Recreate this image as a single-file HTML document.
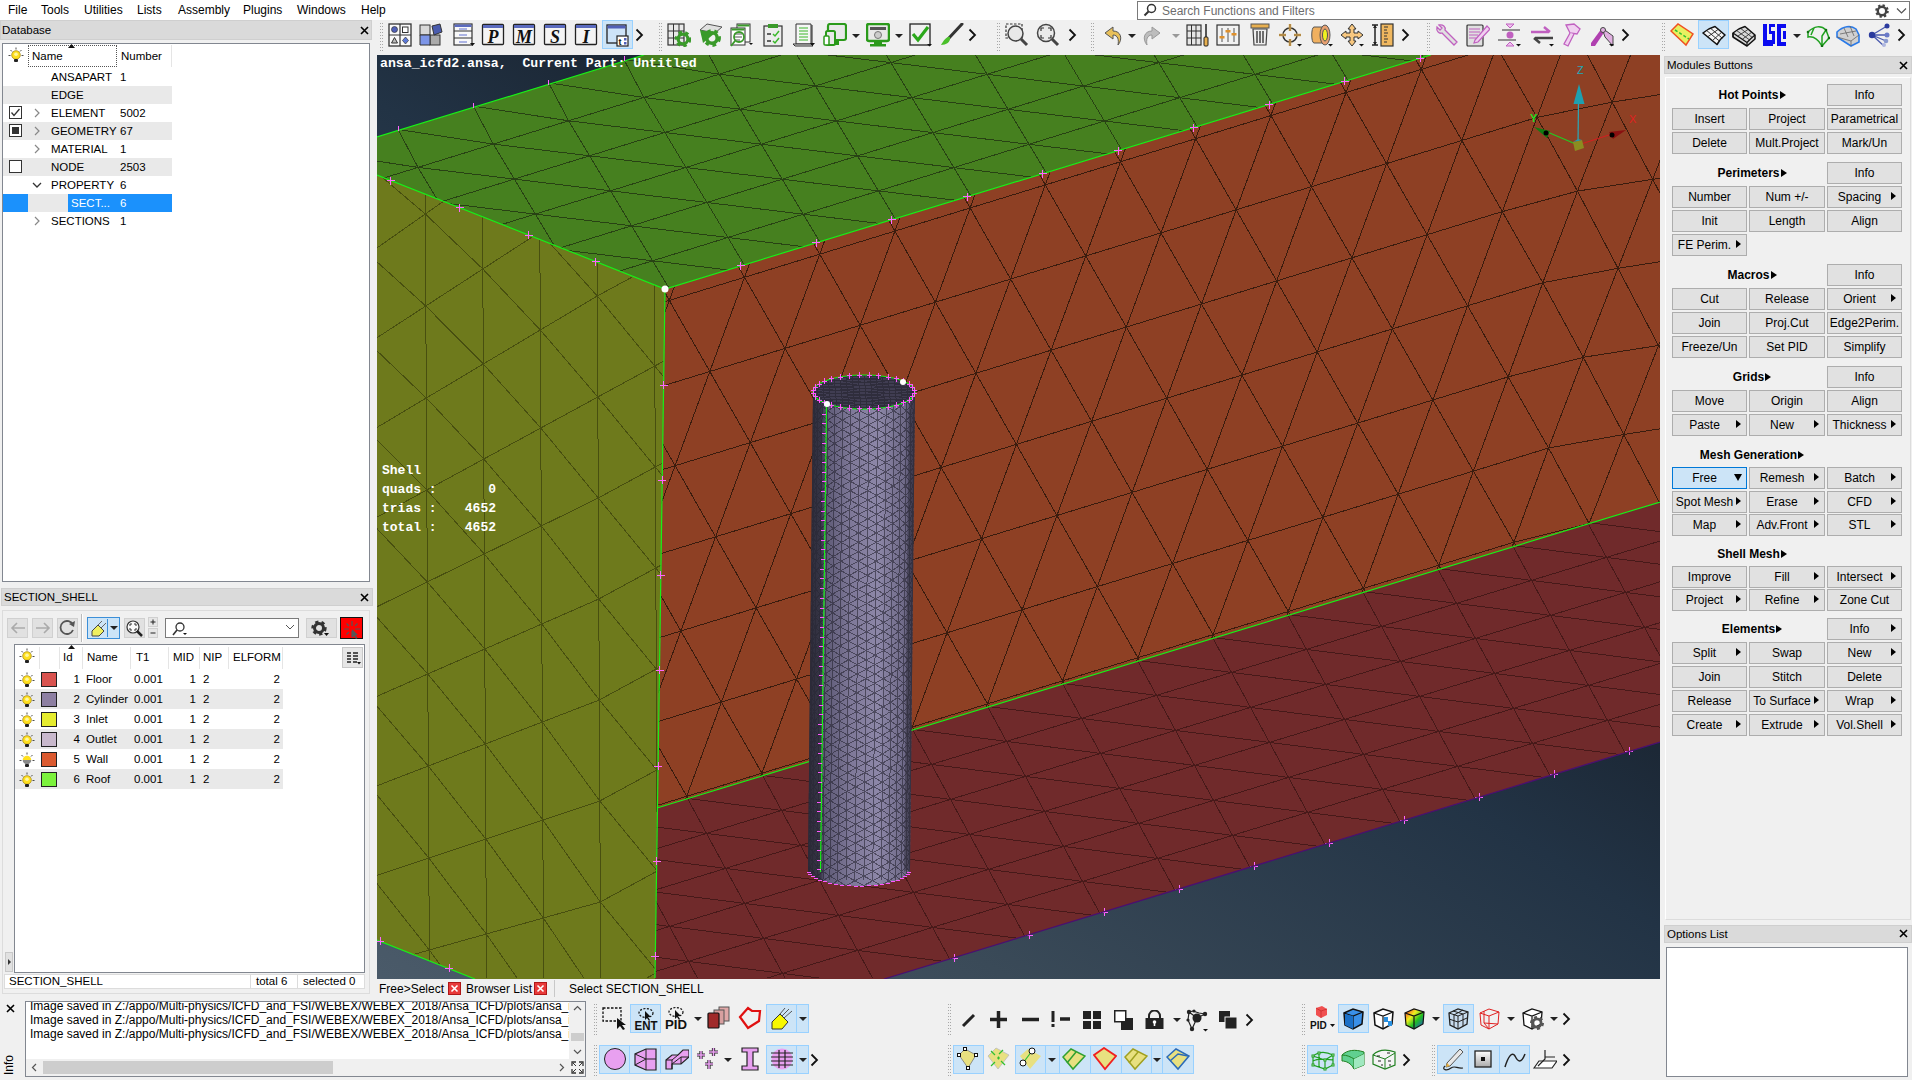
<!DOCTYPE html><html><head><meta charset='utf-8'><style>
*{margin:0;padding:0;box-sizing:border-box}
html,body{width:1912px;height:1080px;overflow:hidden;background:#f0f0f0;font-family:"Liberation Sans", sans-serif;font-size:11.5px;color:#000;position:relative}
.a{position:absolute}
.t{position:absolute;white-space:nowrap;line-height:1}
.btn{position:absolute;background:#e1e1e1;border:1px solid #adadad;font-size:12px;text-align:center;line-height:21px;white-space:nowrap;overflow:hidden}
.hdr{position:absolute;font-weight:bold;font-size:12px;white-space:nowrap;line-height:1}
.tri{display:inline-block;width:0;height:0;border-left:6px solid #000;border-top:4px solid transparent;border-bottom:4px solid transparent;vertical-align:0px;margin-left:1px}
.hi{position:absolute;background:#cce4f7;border:1px solid #99d1ff}
.title{position:absolute;background:#dadada;border:1px solid #cfcfcf;font-size:11.5px;line-height:17px;padding-left:2px}
.x{position:absolute;font-size:14px;line-height:1}
.handle{position:absolute;width:3px;border-left:1px dotted #a0a0a0;border-right:1px dotted #a0a0a0}
</style></head><body>
<div class='a' style='left:0;top:0;width:1912px;height:20px;background:#fff'></div>
<div class='t' style='left:8px;top:4px;font-size:12px'>File</div>
<div class='t' style='left:41px;top:4px;font-size:12px'>Tools</div>
<div class='t' style='left:84px;top:4px;font-size:12px'>Utilities</div>
<div class='t' style='left:137px;top:4px;font-size:12px'>Lists</div>
<div class='t' style='left:178px;top:4px;font-size:12px'>Assembly</div>
<div class='t' style='left:243px;top:4px;font-size:12px'>Plugins</div>
<div class='t' style='left:297px;top:4px;font-size:12px'>Windows</div>
<div class='t' style='left:361px;top:4px;font-size:12px'>Help</div>
<div class='a' style='left:1137px;top:1px;width:773px;height:19px;background:#fff;border:1px solid #7a7a7a'></div>
<div class='t' style='left:1162px;top:5px;font-size:12px;color:#6d6d6d'>Search Functions and Filters</div>
<svg class='a' style='left:1143px;top:3px' width='14' height='14'><circle cx='8.5' cy='5.5' r='4' fill='none' stroke='#333' stroke-width='1.5'/><path d='M5.5,8.5 L1.5,12.5' stroke='#333' stroke-width='2'/></svg>
<svg class='a' style='left:1874px;top:3px' width='16' height='16'><circle cx='8' cy='8' r='5.5' fill='none' stroke='#444' stroke-width='2.6' stroke-dasharray='2.2 2.1'/><circle cx='8' cy='8' r='4.2' fill='none' stroke='#444' stroke-width='2.4'/></svg>
<svg class='a' style='left:1896px;top:7px' width='11' height='8'><path d='M1,1.5 L5.5,6 L10,1.5' stroke='#555' stroke-width='1.2' fill='none'/></svg>
<svg class='a' style='left:0;top:0' width='1912' height='1080' viewBox='0 0 1912 1080'>
<defs><linearGradient id='bg' gradientUnits='userSpaceOnUse' x1='1660' y1='55' x2='867' y2='1288'><stop offset='0' stop-color='#121e2b'/><stop offset='0.4' stop-color='#1c2836'/><stop offset='0.5' stop-color='#223345'/><stop offset='0.77' stop-color='#3a4a58'/><stop offset='1' stop-color='#4a5a69'/></linearGradient>
<linearGradient id='cyl' x1='0' y1='0' x2='1' y2='0'>
<stop offset='0' stop-color='#2f2d3a'/><stop offset='0.12' stop-color='#3a384a'/><stop offset='0.15' stop-color='#5c5874'/><stop offset='0.4' stop-color='#7e7898'/><stop offset='0.65' stop-color='#8d87a8'/><stop offset='0.9' stop-color='#6f6a88'/><stop offset='1' stop-color='#45425a'/></linearGradient>
<clipPath id='vp'><rect x='377' y='55' width='1283' height='924'/></clipPath></defs>
<g clip-path='url(#vp)'>
<rect x='377' y='55' width='1283' height='924' fill='url(#bg)'/>
<polygon points='377,137 644,55 1431,55 665,289 377,175' fill='#46801f'/>
<polygon points='377,175 665,289 655,979 475,979 377,940' fill='#6e7a1c'/>
<polygon points='665,289 1431,55 1660,55 1660,502 657,808' fill='#8e4024'/>
<polygon points='657,808 1660,502 1660,742 884,979 655,979' fill='#702a2b'/>
<defs>
<clipPath id='cRoof'><polygon points='377,137 644,55 1431,55 665,289 377,175'/></clipPath>
<clipPath id='cOlive'><polygon points='377,175 665,289 655,978 473,978 377,940'/></clipPath>
<clipPath id='cWall'><polygon points='665,289 1431,55 1660,55 1660,502 657,808'/></clipPath>
<clipPath id='cFloor'><polygon points='657,808 1660,502 1660,742 887,978 655,978'/></clipPath>
<clipPath id='cCyl'><path d='M813,392 L808,870 A51,16 0 0 0 910,870 L915,392 Z'/></clipPath>
</defs>
<path clip-path='url(#cRoof)' stroke='#1d2a10' stroke-opacity='0.72' stroke-width='1' fill='none' shape-rendering='crispEdges' d='M-53.8,269.2L21.5,245.9M-53.8,269.2L-53.8,269.2M-53.8,269.2L21.5,245.9M-53.8,269.2L21.5,245.9M-53.8,269.2L-53.8,269.2M-53.8,269.2L21.5,245.9M-53.8,269.2L21.5,245.9M-53.8,269.2L-33.8,307.2M-53.8,269.2L41.5,283.9M-33.8,307.2L41.5,283.9M-33.8,307.2L-12.8,342.2M-33.8,307.2L62.5,318.9M-12.8,342.2L62.5,318.9M-12.8,342.2L8.2,377.2M-12.8,342.2L83.5,353.9M8.2,377.2L83.5,353.9M8.2,377.2L29.2,412.2M8.2,377.2L104.5,388.9M29.2,412.2L104.5,388.9M29.2,412.2L50.2,447.2M29.2,412.2L125.5,423.9M50.2,447.2L125.5,423.9M50.2,447.2L71.2,482.2M50.2,447.2L146.5,458.9M71.2,482.2L146.5,458.9M71.2,482.2L92.2,517.2M71.2,482.2L167.5,493.9M92.2,517.2L167.5,493.9M92.2,517.2L113.2,552.2M92.2,517.2L188.5,528.9M113.2,552.2L188.5,528.9M21.5,245.9L96.8,222.6M21.5,245.9L21.5,245.9M21.5,245.9L96.8,222.6M21.5,245.9L96.8,222.6M21.5,245.9L21.5,245.9M21.5,245.9L96.8,222.6M21.5,245.9L96.8,222.6M21.5,245.9L41.5,283.9M21.5,245.9L116.8,260.6M41.5,283.9L116.8,260.6M41.5,283.9L62.5,318.9M41.5,283.9L137.8,295.6M62.5,318.9L137.8,295.6M62.5,318.9L83.5,353.9M62.5,318.9L158.8,330.6M83.5,353.9L158.8,330.6M83.5,353.9L104.5,388.9M83.5,353.9L179.8,365.6M104.5,388.9L179.8,365.6M104.5,388.9L125.5,423.9M104.5,388.9L200.8,400.6M125.5,423.9L200.8,400.6M125.5,423.9L146.5,458.9M125.5,423.9L221.8,435.6M146.5,458.9L221.8,435.6M146.5,458.9L167.5,493.9M146.5,458.9L242.8,470.6M167.5,493.9L242.8,470.6M167.5,493.9L188.5,528.9M167.5,493.9L263.8,505.6M188.5,528.9L263.8,505.6M96.8,222.6L172.1,199.3M96.8,222.6L96.8,222.6M96.8,222.6L172.1,199.3M96.8,222.6L172.1,199.3M96.8,222.6L96.8,222.6M96.8,222.6L172.1,199.3M96.8,222.6L172.1,199.3M96.8,222.6L116.8,260.6M96.8,222.6L192.1,237.3M116.8,260.6L192.1,237.3M116.8,260.6L137.8,295.6M116.8,260.6L213.1,272.3M137.8,295.6L213.1,272.3M137.8,295.6L158.8,330.6M137.8,295.6L234.1,307.3M158.8,330.6L234.1,307.3M158.8,330.6L179.8,365.6M158.8,330.6L255.1,342.3M179.8,365.6L255.1,342.3M179.8,365.6L200.8,400.6M179.8,365.6L276.1,377.3M200.8,400.6L276.1,377.3M200.8,400.6L221.8,435.6M200.8,400.6L297.1,412.3M221.8,435.6L297.1,412.3M221.8,435.6L242.8,470.6M221.8,435.6L318.1,447.3M242.8,470.6L318.1,447.3M242.8,470.6L263.8,505.6M242.8,470.6L339.1,482.3M263.8,505.6L339.1,482.3M172.1,199.3L247.4,176.0M172.1,199.3L172.1,199.3M172.1,199.3L247.4,176.0M172.1,199.3L247.4,176.0M172.1,199.3L172.1,199.3M172.1,199.3L247.4,176.0M172.1,199.3L247.4,176.0M172.1,199.3L192.1,237.3M172.1,199.3L267.4,214.0M192.1,237.3L267.4,214.0M192.1,237.3L213.1,272.3M192.1,237.3L288.4,249.0M213.1,272.3L288.4,249.0M213.1,272.3L234.1,307.3M213.1,272.3L309.4,284.0M234.1,307.3L309.4,284.0M234.1,307.3L255.1,342.3M234.1,307.3L330.4,319.0M255.1,342.3L330.4,319.0M255.1,342.3L276.1,377.3M255.1,342.3L351.4,354.0M276.1,377.3L351.4,354.0M276.1,377.3L297.1,412.3M276.1,377.3L372.4,389.0M297.1,412.3L372.4,389.0M297.1,412.3L318.1,447.3M297.1,412.3L393.4,424.0M318.1,447.3L393.4,424.0M318.1,447.3L339.1,482.3M318.1,447.3L414.4,459.0M339.1,482.3L414.4,459.0M247.4,176.0L322.7,152.7M247.4,176.0L247.4,176.0M247.4,176.0L322.7,152.7M247.4,176.0L322.7,152.7M247.4,176.0L247.4,176.0M247.4,176.0L322.7,152.7M247.4,176.0L322.7,152.7M247.4,176.0L267.4,214.0M247.4,176.0L342.7,190.7M267.4,214.0L342.7,190.7M267.4,214.0L288.4,249.0M267.4,214.0L363.7,225.7M288.4,249.0L363.7,225.7M288.4,249.0L309.4,284.0M288.4,249.0L384.7,260.7M309.4,284.0L384.7,260.7M309.4,284.0L330.4,319.0M309.4,284.0L405.7,295.7M330.4,319.0L405.7,295.7M330.4,319.0L351.4,354.0M330.4,319.0L426.7,330.7M351.4,354.0L426.7,330.7M351.4,354.0L372.4,389.0M351.4,354.0L447.7,365.7M372.4,389.0L447.7,365.7M372.4,389.0L393.4,424.0M372.4,389.0L468.7,400.7M393.4,424.0L468.7,400.7M393.4,424.0L414.4,459.0M393.4,424.0L489.7,435.7M414.4,459.0L489.7,435.7M322.7,152.7L398.0,129.4M322.7,152.7L322.7,152.7M322.7,152.7L398.0,129.4M322.7,152.7L398.0,129.4M322.7,152.7L322.7,152.7M322.7,152.7L398.0,129.4M322.7,152.7L398.0,129.4M322.7,152.7L342.7,190.7M322.7,152.7L418.0,167.4M342.7,190.7L418.0,167.4M342.7,190.7L363.7,225.7M342.7,190.7L439.0,202.4M363.7,225.7L439.0,202.4M363.7,225.7L384.7,260.7M363.7,225.7L460.0,237.4M384.7,260.7L460.0,237.4M384.7,260.7L405.7,295.7M384.7,260.7L481.0,272.4M405.7,295.7L481.0,272.4M405.7,295.7L426.7,330.7M405.7,295.7L502.0,307.4M426.7,330.7L502.0,307.4M426.7,330.7L447.7,365.7M426.7,330.7L523.0,342.4M447.7,365.7L523.0,342.4M447.7,365.7L468.7,400.7M447.7,365.7L544.0,377.4M468.7,400.7L544.0,377.4M468.7,400.7L489.7,435.7M468.7,400.7L565.0,412.4M489.7,435.7L565.0,412.4M398.0,129.4L473.3,106.1M398.0,129.4L398.0,129.4M398.0,129.4L473.3,106.1M398.0,129.4L473.3,106.1M398.0,129.4L398.0,129.4M398.0,129.4L473.3,106.1M398.0,129.4L473.3,106.1M398.0,129.4L418.0,167.4M398.0,129.4L493.3,144.1M418.0,167.4L493.3,144.1M418.0,167.4L439.0,202.4M418.0,167.4L514.3,179.1M439.0,202.4L514.3,179.1M439.0,202.4L460.0,237.4M439.0,202.4L535.3,214.1M460.0,237.4L535.3,214.1M460.0,237.4L481.0,272.4M460.0,237.4L556.3,249.1M481.0,272.4L556.3,249.1M481.0,272.4L502.0,307.4M481.0,272.4L577.3,284.1M502.0,307.4L577.3,284.1M502.0,307.4L523.0,342.4M502.0,307.4L598.3,319.1M523.0,342.4L598.3,319.1M523.0,342.4L544.0,377.4M523.0,342.4L619.3,354.1M544.0,377.4L619.3,354.1M544.0,377.4L565.0,412.4M544.0,377.4L640.3,389.1M565.0,412.4L640.3,389.1M473.3,106.1L548.6,82.8M473.3,106.1L473.3,106.1M473.3,106.1L548.6,82.8M473.3,106.1L548.6,82.8M473.3,106.1L473.3,106.1M473.3,106.1L548.6,82.8M473.3,106.1L548.6,82.8M473.3,106.1L493.3,144.1M473.3,106.1L568.6,120.8M493.3,144.1L568.6,120.8M493.3,144.1L514.3,179.1M493.3,144.1L589.6,155.8M514.3,179.1L589.6,155.8M514.3,179.1L535.3,214.1M514.3,179.1L610.6,190.8M535.3,214.1L610.6,190.8M535.3,214.1L556.3,249.1M535.3,214.1L631.6,225.8M556.3,249.1L631.6,225.8M556.3,249.1L577.3,284.1M556.3,249.1L652.6,260.8M577.3,284.1L652.6,260.8M577.3,284.1L598.3,319.1M577.3,284.1L673.6,295.8M598.3,319.1L673.6,295.8M598.3,319.1L619.3,354.1M598.3,319.1L694.6,330.8M619.3,354.1L694.6,330.8M619.3,354.1L640.3,389.1M619.3,354.1L715.6,365.8M640.3,389.1L715.6,365.8M548.6,82.8L623.9,59.5M548.6,82.8L548.6,82.8M548.6,82.8L623.9,59.5M548.6,82.8L623.9,59.5M548.6,82.8L548.6,82.8M548.6,82.8L623.9,59.5M548.6,82.8L623.9,59.5M548.6,82.8L568.6,120.8M548.6,82.8L643.9,97.5M568.6,120.8L643.9,97.5M568.6,120.8L589.6,155.8M568.6,120.8L664.9,132.5M589.6,155.8L664.9,132.5M589.6,155.8L610.6,190.8M589.6,155.8L685.9,167.5M610.6,190.8L685.9,167.5M610.6,190.8L631.6,225.8M610.6,190.8L706.9,202.5M631.6,225.8L706.9,202.5M631.6,225.8L652.6,260.8M631.6,225.8L727.9,237.5M652.6,260.8L727.9,237.5M652.6,260.8L673.6,295.8M652.6,260.8L748.9,272.5M673.6,295.8L748.9,272.5M673.6,295.8L694.6,330.8M673.6,295.8L769.9,307.5M694.6,330.8L769.9,307.5M694.6,330.8L715.6,365.8M694.6,330.8L790.9,342.5M715.6,365.8L790.9,342.5M623.9,59.5L699.2,36.2M623.9,59.5L623.9,59.5M623.9,59.5L699.2,36.2M623.9,59.5L699.2,36.2M623.9,59.5L623.9,59.5M623.9,59.5L699.2,36.2M623.9,59.5L699.2,36.2M623.9,59.5L643.9,97.5M623.9,59.5L719.2,74.2M643.9,97.5L719.2,74.2M643.9,97.5L664.9,132.5M643.9,97.5L740.2,109.2M664.9,132.5L740.2,109.2M664.9,132.5L685.9,167.5M664.9,132.5L761.2,144.2M685.9,167.5L761.2,144.2M685.9,167.5L706.9,202.5M685.9,167.5L782.2,179.2M706.9,202.5L782.2,179.2M706.9,202.5L727.9,237.5M706.9,202.5L803.2,214.2M727.9,237.5L803.2,214.2M727.9,237.5L748.9,272.5M727.9,237.5L824.2,249.2M748.9,272.5L824.2,249.2M748.9,272.5L769.9,307.5M748.9,272.5L845.2,284.2M769.9,307.5L845.2,284.2M769.9,307.5L790.9,342.5M769.9,307.5L866.2,319.2M790.9,342.5L866.2,319.2M699.2,36.2L774.5,12.9M699.2,36.2L699.2,36.2M699.2,36.2L774.5,12.9M699.2,36.2L774.5,12.9M699.2,36.2L699.2,36.2M699.2,36.2L774.5,12.9M699.2,36.2L774.5,12.9M699.2,36.2L719.2,74.2M699.2,36.2L794.5,50.9M719.2,74.2L794.5,50.9M719.2,74.2L740.2,109.2M719.2,74.2L815.5,85.9M740.2,109.2L815.5,85.9M740.2,109.2L761.2,144.2M740.2,109.2L836.5,120.9M761.2,144.2L836.5,120.9M761.2,144.2L782.2,179.2M761.2,144.2L857.5,155.9M782.2,179.2L857.5,155.9M782.2,179.2L803.2,214.2M782.2,179.2L878.5,190.9M803.2,214.2L878.5,190.9M803.2,214.2L824.2,249.2M803.2,214.2L899.5,225.9M824.2,249.2L899.5,225.9M824.2,249.2L845.2,284.2M824.2,249.2L920.5,260.9M845.2,284.2L920.5,260.9M845.2,284.2L866.2,319.2M845.2,284.2L941.5,295.9M866.2,319.2L941.5,295.9M774.5,12.9L849.8,-10.4M774.5,12.9L774.5,12.9M774.5,12.9L849.8,-10.4M774.5,12.9L849.8,-10.4M774.5,12.9L774.5,12.9M774.5,12.9L849.8,-10.4M774.5,12.9L849.8,-10.4M774.5,12.9L794.5,50.9M774.5,12.9L869.8,27.6M794.5,50.9L869.8,27.6M794.5,50.9L815.5,85.9M794.5,50.9L890.8,62.6M815.5,85.9L890.8,62.6M815.5,85.9L836.5,120.9M815.5,85.9L911.8,97.6M836.5,120.9L911.8,97.6M836.5,120.9L857.5,155.9M836.5,120.9L932.8,132.6M857.5,155.9L932.8,132.6M857.5,155.9L878.5,190.9M857.5,155.9L953.8,167.6M878.5,190.9L953.8,167.6M878.5,190.9L899.5,225.9M878.5,190.9L974.8,202.6M899.5,225.9L974.8,202.6M899.5,225.9L920.5,260.9M899.5,225.9L995.8,237.6M920.5,260.9L995.8,237.6M920.5,260.9L941.5,295.9M920.5,260.9L1016.8,272.6M941.5,295.9L1016.8,272.6M849.8,-10.4L925.1,-33.7M849.8,-10.4L849.8,-10.4M849.8,-10.4L925.1,-33.7M849.8,-10.4L925.1,-33.7M849.8,-10.4L849.8,-10.4M849.8,-10.4L925.1,-33.7M849.8,-10.4L925.1,-33.7M849.8,-10.4L869.8,27.6M849.8,-10.4L945.1,4.3M869.8,27.6L945.1,4.3M869.8,27.6L890.8,62.6M869.8,27.6L966.1,39.3M890.8,62.6L966.1,39.3M890.8,62.6L911.8,97.6M890.8,62.6L987.1,74.3M911.8,97.6L987.1,74.3M911.8,97.6L932.8,132.6M911.8,97.6L1008.1,109.3M932.8,132.6L1008.1,109.3M932.8,132.6L953.8,167.6M932.8,132.6L1029.1,144.3M953.8,167.6L1029.1,144.3M953.8,167.6L974.8,202.6M953.8,167.6L1050.1,179.3M974.8,202.6L1050.1,179.3M974.8,202.6L995.8,237.6M974.8,202.6L1071.1,214.3M995.8,237.6L1071.1,214.3M995.8,237.6L1016.8,272.6M995.8,237.6L1092.1,249.3M1016.8,272.6L1092.1,249.3M925.1,-33.7L1000.4,-57.0M925.1,-33.7L925.1,-33.7M925.1,-33.7L1000.4,-57.0M925.1,-33.7L1000.4,-57.0M925.1,-33.7L925.1,-33.7M925.1,-33.7L1000.4,-57.0M925.1,-33.7L1000.4,-57.0M925.1,-33.7L945.1,4.3M925.1,-33.7L1020.4,-19.0M945.1,4.3L1020.4,-19.0M945.1,4.3L966.1,39.3M945.1,4.3L1041.4,16.0M966.1,39.3L1041.4,16.0M966.1,39.3L987.1,74.3M966.1,39.3L1062.4,51.0M987.1,74.3L1062.4,51.0M987.1,74.3L1008.1,109.3M987.1,74.3L1083.4,86.0M1008.1,109.3L1083.4,86.0M1008.1,109.3L1029.1,144.3M1008.1,109.3L1104.4,121.0M1029.1,144.3L1104.4,121.0M1029.1,144.3L1050.1,179.3M1029.1,144.3L1125.4,156.0M1050.1,179.3L1125.4,156.0M1050.1,179.3L1071.1,214.3M1050.1,179.3L1146.4,191.0M1071.1,214.3L1146.4,191.0M1071.1,214.3L1092.1,249.3M1071.1,214.3L1167.4,226.0M1092.1,249.3L1167.4,226.0M1000.4,-57.0L1075.7,-80.3M1000.4,-57.0L1000.4,-57.0M1000.4,-57.0L1075.7,-80.3M1000.4,-57.0L1075.7,-80.3M1000.4,-57.0L1000.4,-57.0M1000.4,-57.0L1075.7,-80.3M1000.4,-57.0L1075.7,-80.3M1000.4,-57.0L1020.4,-19.0M1000.4,-57.0L1095.7,-42.3M1020.4,-19.0L1095.7,-42.3M1020.4,-19.0L1041.4,16.0M1020.4,-19.0L1116.7,-7.3M1041.4,16.0L1116.7,-7.3M1041.4,16.0L1062.4,51.0M1041.4,16.0L1137.7,27.7M1062.4,51.0L1137.7,27.7M1062.4,51.0L1083.4,86.0M1062.4,51.0L1158.7,62.7M1083.4,86.0L1158.7,62.7M1083.4,86.0L1104.4,121.0M1083.4,86.0L1179.7,97.7M1104.4,121.0L1179.7,97.7M1104.4,121.0L1125.4,156.0M1104.4,121.0L1200.7,132.7M1125.4,156.0L1200.7,132.7M1125.4,156.0L1146.4,191.0M1125.4,156.0L1221.7,167.7M1146.4,191.0L1221.7,167.7M1146.4,191.0L1167.4,226.0M1146.4,191.0L1242.7,202.7M1167.4,226.0L1242.7,202.7M1075.7,-80.3L1151.0,-103.6M1075.7,-80.3L1075.7,-80.3M1075.7,-80.3L1151.0,-103.6M1075.7,-80.3L1151.0,-103.6M1075.7,-80.3L1075.7,-80.3M1075.7,-80.3L1151.0,-103.6M1075.7,-80.3L1151.0,-103.6M1075.7,-80.3L1095.7,-42.3M1075.7,-80.3L1171.0,-65.6M1095.7,-42.3L1171.0,-65.6M1095.7,-42.3L1116.7,-7.3M1095.7,-42.3L1192.0,-30.6M1116.7,-7.3L1192.0,-30.6M1116.7,-7.3L1137.7,27.7M1116.7,-7.3L1213.0,4.4M1137.7,27.7L1213.0,4.4M1137.7,27.7L1158.7,62.7M1137.7,27.7L1234.0,39.4M1158.7,62.7L1234.0,39.4M1158.7,62.7L1179.7,97.7M1158.7,62.7L1255.0,74.4M1179.7,97.7L1255.0,74.4M1179.7,97.7L1200.7,132.7M1179.7,97.7L1276.0,109.4M1200.7,132.7L1276.0,109.4M1200.7,132.7L1221.7,167.7M1200.7,132.7L1297.0,144.4M1221.7,167.7L1297.0,144.4M1221.7,167.7L1242.7,202.7M1221.7,167.7L1318.0,179.4M1242.7,202.7L1318.0,179.4M1151.0,-103.6L1226.3,-126.9M1151.0,-103.6L1151.0,-103.6M1151.0,-103.6L1226.3,-126.9M1151.0,-103.6L1226.3,-126.9M1151.0,-103.6L1151.0,-103.6M1151.0,-103.6L1226.3,-126.9M1151.0,-103.6L1226.3,-126.9M1151.0,-103.6L1171.0,-65.6M1151.0,-103.6L1246.3,-88.9M1171.0,-65.6L1246.3,-88.9M1171.0,-65.6L1192.0,-30.6M1171.0,-65.6L1267.3,-53.9M1192.0,-30.6L1267.3,-53.9M1192.0,-30.6L1213.0,4.4M1192.0,-30.6L1288.3,-18.9M1213.0,4.4L1288.3,-18.9M1213.0,4.4L1234.0,39.4M1213.0,4.4L1309.3,16.1M1234.0,39.4L1309.3,16.1M1234.0,39.4L1255.0,74.4M1234.0,39.4L1330.3,51.1M1255.0,74.4L1330.3,51.1M1255.0,74.4L1276.0,109.4M1255.0,74.4L1351.3,86.1M1276.0,109.4L1351.3,86.1M1276.0,109.4L1297.0,144.4M1276.0,109.4L1372.3,121.1M1297.0,144.4L1372.3,121.1M1297.0,144.4L1318.0,179.4M1297.0,144.4L1393.3,156.1M1318.0,179.4L1393.3,156.1M1226.3,-126.9L1301.6,-150.2M1226.3,-126.9L1226.3,-126.9M1226.3,-126.9L1301.6,-150.2M1226.3,-126.9L1301.6,-150.2M1226.3,-126.9L1226.3,-126.9M1226.3,-126.9L1301.6,-150.2M1226.3,-126.9L1301.6,-150.2M1226.3,-126.9L1246.3,-88.9M1226.3,-126.9L1321.6,-112.2M1246.3,-88.9L1321.6,-112.2M1246.3,-88.9L1267.3,-53.9M1246.3,-88.9L1342.6,-77.2M1267.3,-53.9L1342.6,-77.2M1267.3,-53.9L1288.3,-18.9M1267.3,-53.9L1363.6,-42.2M1288.3,-18.9L1363.6,-42.2M1288.3,-18.9L1309.3,16.1M1288.3,-18.9L1384.6,-7.2M1309.3,16.1L1384.6,-7.2M1309.3,16.1L1330.3,51.1M1309.3,16.1L1405.6,27.8M1330.3,51.1L1405.6,27.8M1330.3,51.1L1351.3,86.1M1330.3,51.1L1426.6,62.8M1351.3,86.1L1426.6,62.8M1351.3,86.1L1372.3,121.1M1351.3,86.1L1447.6,97.8M1372.3,121.1L1447.6,97.8M1372.3,121.1L1393.3,156.1M1372.3,121.1L1468.6,132.8M1393.3,156.1L1468.6,132.8M1301.6,-150.2L1376.9,-173.5M1301.6,-150.2L1301.6,-150.2M1301.6,-150.2L1376.9,-173.5M1301.6,-150.2L1376.9,-173.5M1301.6,-150.2L1301.6,-150.2M1301.6,-150.2L1376.9,-173.5M1301.6,-150.2L1376.9,-173.5M1301.6,-150.2L1321.6,-112.2M1301.6,-150.2L1396.9,-135.5M1321.6,-112.2L1396.9,-135.5M1321.6,-112.2L1342.6,-77.2M1321.6,-112.2L1417.9,-100.5M1342.6,-77.2L1417.9,-100.5M1342.6,-77.2L1363.6,-42.2M1342.6,-77.2L1438.9,-65.5M1363.6,-42.2L1438.9,-65.5M1363.6,-42.2L1384.6,-7.2M1363.6,-42.2L1459.9,-30.5M1384.6,-7.2L1459.9,-30.5M1384.6,-7.2L1405.6,27.8M1384.6,-7.2L1480.9,4.5M1405.6,27.8L1480.9,4.5M1405.6,27.8L1426.6,62.8M1405.6,27.8L1501.9,39.5M1426.6,62.8L1501.9,39.5M1426.6,62.8L1447.6,97.8M1426.6,62.8L1522.9,74.5M1447.6,97.8L1522.9,74.5M1447.6,97.8L1468.6,132.8M1447.6,97.8L1543.9,109.5M1468.6,132.8L1543.9,109.5M1376.9,-173.5L1452.2,-196.8M1376.9,-173.5L1376.9,-173.5M1376.9,-173.5L1452.2,-196.8M1376.9,-173.5L1452.2,-196.8M1376.9,-173.5L1376.9,-173.5M1376.9,-173.5L1452.2,-196.8M1376.9,-173.5L1452.2,-196.8M1376.9,-173.5L1396.9,-135.5M1376.9,-173.5L1472.2,-158.8M1396.9,-135.5L1472.2,-158.8M1396.9,-135.5L1417.9,-100.5M1396.9,-135.5L1493.2,-123.8M1417.9,-100.5L1493.2,-123.8M1417.9,-100.5L1438.9,-65.5M1417.9,-100.5L1514.2,-88.8M1438.9,-65.5L1514.2,-88.8M1438.9,-65.5L1459.9,-30.5M1438.9,-65.5L1535.2,-53.8M1459.9,-30.5L1535.2,-53.8M1459.9,-30.5L1480.9,4.5M1459.9,-30.5L1556.2,-18.8M1480.9,4.5L1556.2,-18.8M1480.9,4.5L1501.9,39.5M1480.9,4.5L1577.2,16.2M1501.9,39.5L1577.2,16.2M1501.9,39.5L1522.9,74.5M1501.9,39.5L1598.2,51.2M1522.9,74.5L1598.2,51.2M1522.9,74.5L1543.9,109.5M1522.9,74.5L1619.2,86.2M1543.9,109.5L1619.2,86.2M1452.2,-196.8L1527.5,-220.1M1452.2,-196.8L1452.2,-196.8M1452.2,-196.8L1527.5,-220.1M1452.2,-196.8L1527.5,-220.1M1452.2,-196.8L1452.2,-196.8M1452.2,-196.8L1527.5,-220.1M1452.2,-196.8L1527.5,-220.1M1452.2,-196.8L1472.2,-158.8M1452.2,-196.8L1547.5,-182.1M1472.2,-158.8L1547.5,-182.1M1472.2,-158.8L1493.2,-123.8M1472.2,-158.8L1568.5,-147.1M1493.2,-123.8L1568.5,-147.1M1493.2,-123.8L1514.2,-88.8M1493.2,-123.8L1589.5,-112.1M1514.2,-88.8L1589.5,-112.1M1514.2,-88.8L1535.2,-53.8M1514.2,-88.8L1610.5,-77.1M1535.2,-53.8L1610.5,-77.1M1535.2,-53.8L1556.2,-18.8M1535.2,-53.8L1631.5,-42.1M1556.2,-18.8L1631.5,-42.1M1556.2,-18.8L1577.2,16.2M1556.2,-18.8L1652.5,-7.1M1577.2,16.2L1652.5,-7.1M1577.2,16.2L1598.2,51.2M1577.2,16.2L1673.5,27.9M1598.2,51.2L1673.5,27.9M1598.2,51.2L1619.2,86.2M1598.2,51.2L1694.5,62.9M1619.2,86.2L1694.5,62.9M1527.5,-220.1L1602.8,-243.4M1527.5,-220.1L1527.5,-220.1M1527.5,-220.1L1602.8,-243.4M1527.5,-220.1L1602.8,-243.4M1527.5,-220.1L1527.5,-220.1M1527.5,-220.1L1602.8,-243.4M1527.5,-220.1L1602.8,-243.4M1527.5,-220.1L1547.5,-182.1M1527.5,-220.1L1622.8,-205.4M1547.5,-182.1L1622.8,-205.4M1547.5,-182.1L1568.5,-147.1M1547.5,-182.1L1643.8,-170.4M1568.5,-147.1L1643.8,-170.4M1568.5,-147.1L1589.5,-112.1M1568.5,-147.1L1664.8,-135.4M1589.5,-112.1L1664.8,-135.4M1589.5,-112.1L1610.5,-77.1M1589.5,-112.1L1685.8,-100.4M1610.5,-77.1L1685.8,-100.4M1610.5,-77.1L1631.5,-42.1M1610.5,-77.1L1706.8,-65.4M1631.5,-42.1L1706.8,-65.4M1631.5,-42.1L1652.5,-7.1M1631.5,-42.1L1727.8,-30.4M1652.5,-7.1L1727.8,-30.4M1652.5,-7.1L1673.5,27.9M1652.5,-7.1L1748.8,4.6M1673.5,27.9L1748.8,4.6M1673.5,27.9L1694.5,62.9M1673.5,27.9L1769.8,39.6M1694.5,62.9L1769.8,39.6M1602.8,-243.4L1602.8,-243.4M1602.8,-243.4L1602.8,-243.4M1602.8,-243.4L1622.8,-205.4M1622.8,-205.4L1643.8,-170.4M1643.8,-170.4L1664.8,-135.4M1664.8,-135.4L1685.8,-100.4M1685.8,-100.4L1706.8,-65.4M1706.8,-65.4L1727.8,-30.4M1727.8,-30.4L1748.8,4.6M1748.8,4.6L1769.8,39.6'/>
<path clip-path='url(#cOlive)' stroke='#2e3208' stroke-opacity='0.6' stroke-width='1' fill='none' shape-rendering='crispEdges' d='M708.8,-271.0L651.8,-240.0M708.8,-271.0L709.3,-170.0M651.8,-240.0L709.3,-170.0M709.3,-170.0L652.3,-139.0M709.3,-170.0L709.8,-69.0M652.3,-139.0L709.8,-69.0M709.8,-69.0L652.8,-38.0M709.8,-69.0L710.3,32.0M652.8,-38.0L710.3,32.0M710.3,32.0L653.3,63.0M710.3,32.0L710.8,133.0M653.3,63.0L710.8,133.0M710.8,133.0L653.8,164.0M710.8,133.0L711.3,234.0M653.8,164.0L711.3,234.0M711.3,234.0L654.3,265.0M711.3,234.0L711.8,335.0M654.3,265.0L711.8,335.0M711.8,335.0L654.8,366.0M711.8,335.0L712.3,436.0M654.8,366.0L712.3,436.0M712.3,436.0L655.3,467.0M712.3,436.0L712.8,537.0M655.3,467.0L712.8,537.0M712.8,537.0L655.8,568.0M712.8,537.0L713.3,638.0M655.8,568.0L713.3,638.0M713.3,638.0L656.3,669.0M713.3,638.0L713.8,739.0M656.3,669.0L713.8,739.0M713.8,739.0L656.8,770.0M713.8,739.0L714.3,840.0M656.8,770.0L714.3,840.0M714.3,840.0L657.3,871.0M714.3,840.0L714.8,941.0M657.3,871.0L714.8,941.0M714.8,941.0L657.8,972.0M714.8,941.0L715.3,1042.0M657.8,972.0L715.3,1042.0M715.3,1042.0L658.3,1073.0M715.3,1042.0L715.8,1143.0M658.3,1073.0L715.8,1143.0M715.8,1143.0L658.8,1174.0M651.8,-240.0L594.8,-209.0M651.8,-240.0L652.3,-139.0M594.8,-209.0L652.3,-139.0M652.3,-139.0L595.3,-108.0M652.3,-139.0L652.8,-38.0M595.3,-108.0L652.8,-38.0M652.8,-38.0L595.8,-7.0M652.8,-38.0L653.3,63.0M595.8,-7.0L653.3,63.0M653.3,63.0L596.3,94.0M653.3,63.0L653.8,164.0M596.3,94.0L653.8,164.0M653.8,164.0L596.8,195.0M653.8,164.0L654.3,265.0M596.8,195.0L654.3,265.0M654.3,265.0L597.3,296.0M654.3,265.0L654.8,366.0M597.3,296.0L654.8,366.0M654.8,366.0L597.8,397.0M654.8,366.0L655.3,467.0M597.8,397.0L655.3,467.0M655.3,467.0L598.3,498.0M655.3,467.0L655.8,568.0M598.3,498.0L655.8,568.0M655.8,568.0L598.8,599.0M655.8,568.0L656.3,669.0M598.8,599.0L656.3,669.0M656.3,669.0L599.3,700.0M656.3,669.0L656.8,770.0M599.3,700.0L656.8,770.0M656.8,770.0L599.8,801.0M656.8,770.0L657.3,871.0M599.8,801.0L657.3,871.0M657.3,871.0L600.3,902.0M657.3,871.0L657.8,972.0M600.3,902.0L657.8,972.0M657.8,972.0L600.8,1003.0M657.8,972.0L658.3,1073.0M600.8,1003.0L658.3,1073.0M658.3,1073.0L601.3,1104.0M658.3,1073.0L658.8,1174.0M601.3,1104.0L658.8,1174.0M658.8,1174.0L601.8,1205.0M594.8,-209.0L537.8,-160.0M594.8,-209.0L595.3,-108.0M537.8,-160.0L595.3,-108.0M595.3,-108.0L538.3,-62.0M595.3,-108.0L595.8,-7.0M538.3,-62.0L595.8,-7.0M595.8,-7.0L538.8,36.0M595.8,-7.0L596.3,94.0M538.8,36.0L596.3,94.0M596.3,94.0L539.3,134.0M596.3,94.0L596.8,195.0M539.3,134.0L596.8,195.0M596.8,195.0L539.8,232.0M596.8,195.0L597.3,296.0M539.8,232.0L597.3,296.0M597.3,296.0L540.3,330.0M597.3,296.0L597.8,397.0M540.3,330.0L597.8,397.0M597.8,397.0L540.8,428.0M597.8,397.0L598.3,498.0M540.8,428.0L598.3,498.0M598.3,498.0L541.3,526.0M598.3,498.0L598.8,599.0M541.3,526.0L598.8,599.0M598.8,599.0L541.8,624.0M598.8,599.0L599.3,700.0M541.8,624.0L599.3,700.0M599.3,700.0L542.3,722.0M599.3,700.0L599.8,801.0M542.3,722.0L599.8,801.0M599.8,801.0L542.8,820.0M599.8,801.0L600.3,902.0M542.8,820.0L600.3,902.0M600.3,902.0L543.3,918.0M600.3,902.0L600.8,1003.0M543.3,918.0L600.8,1003.0M600.8,1003.0L543.8,1016.0M600.8,1003.0L601.3,1104.0M543.8,1016.0L601.3,1104.0M601.3,1104.0L544.3,1114.0M601.3,1104.0L601.8,1205.0M544.3,1114.0L601.8,1205.0M601.8,1205.0L544.8,1212.0M537.8,-160.0L480.8,-111.0M537.8,-160.0L538.3,-62.0M480.8,-111.0L538.3,-62.0M538.3,-62.0L481.3,-16.0M538.3,-62.0L538.8,36.0M481.3,-16.0L538.8,36.0M538.8,36.0L481.8,79.0M538.8,36.0L539.3,134.0M481.8,79.0L539.3,134.0M539.3,134.0L482.3,174.0M539.3,134.0L539.8,232.0M482.3,174.0L539.8,232.0M539.8,232.0L482.8,269.0M539.8,232.0L540.3,330.0M482.8,269.0L540.3,330.0M540.3,330.0L483.3,364.0M540.3,330.0L540.8,428.0M483.3,364.0L540.8,428.0M540.8,428.0L483.8,459.0M540.8,428.0L541.3,526.0M483.8,459.0L541.3,526.0M541.3,526.0L484.3,554.0M541.3,526.0L541.8,624.0M484.3,554.0L541.8,624.0M541.8,624.0L484.8,649.0M541.8,624.0L542.3,722.0M484.8,649.0L542.3,722.0M542.3,722.0L485.3,744.0M542.3,722.0L542.8,820.0M485.3,744.0L542.8,820.0M542.8,820.0L485.8,839.0M542.8,820.0L543.3,918.0M485.8,839.0L543.3,918.0M543.3,918.0L486.3,934.0M543.3,918.0L543.8,1016.0M486.3,934.0L543.8,1016.0M543.8,1016.0L486.8,1029.0M543.8,1016.0L544.3,1114.0M486.8,1029.0L544.3,1114.0M544.3,1114.0L487.3,1124.0M544.3,1114.0L544.8,1212.0M487.3,1124.0L544.8,1212.0M544.8,1212.0L487.8,1219.0M480.8,-111.0L423.8,-62.0M480.8,-111.0L481.3,-16.0M423.8,-62.0L481.3,-16.0M481.3,-16.0L424.3,30.0M481.3,-16.0L481.8,79.0M424.3,30.0L481.8,79.0M481.8,79.0L424.8,122.0M481.8,79.0L482.3,174.0M424.8,122.0L482.3,174.0M482.3,174.0L425.3,214.0M482.3,174.0L482.8,269.0M425.3,214.0L482.8,269.0M482.8,269.0L425.8,306.0M482.8,269.0L483.3,364.0M425.8,306.0L483.3,364.0M483.3,364.0L426.3,398.0M483.3,364.0L483.8,459.0M426.3,398.0L483.8,459.0M483.8,459.0L426.8,490.0M483.8,459.0L484.3,554.0M426.8,490.0L484.3,554.0M484.3,554.0L427.3,582.0M484.3,554.0L484.8,649.0M427.3,582.0L484.8,649.0M484.8,649.0L427.8,674.0M484.8,649.0L485.3,744.0M427.8,674.0L485.3,744.0M485.3,744.0L428.3,766.0M485.3,744.0L485.8,839.0M428.3,766.0L485.8,839.0M485.8,839.0L428.8,858.0M485.8,839.0L486.3,934.0M428.8,858.0L486.3,934.0M486.3,934.0L429.3,950.0M486.3,934.0L486.8,1029.0M429.3,950.0L486.8,1029.0M486.8,1029.0L429.8,1042.0M486.8,1029.0L487.3,1124.0M429.8,1042.0L487.3,1124.0M487.3,1124.0L430.3,1134.0M487.3,1124.0L487.8,1219.0M430.3,1134.0L487.8,1219.0M487.8,1219.0L430.8,1226.0M423.8,-62.0L366.8,-13.0M423.8,-62.0L424.3,30.0M366.8,-13.0L424.3,30.0M424.3,30.0L367.3,76.0M424.3,30.0L424.8,122.0M367.3,76.0L424.8,122.0M424.8,122.0L367.8,165.0M424.8,122.0L425.3,214.0M367.8,165.0L425.3,214.0M425.3,214.0L368.3,254.0M425.3,214.0L425.8,306.0M368.3,254.0L425.8,306.0M425.8,306.0L368.8,343.0M425.8,306.0L426.3,398.0M368.8,343.0L426.3,398.0M426.3,398.0L369.3,432.0M426.3,398.0L426.8,490.0M369.3,432.0L426.8,490.0M426.8,490.0L369.8,521.0M426.8,490.0L427.3,582.0M369.8,521.0L427.3,582.0M427.3,582.0L370.3,610.0M427.3,582.0L427.8,674.0M370.3,610.0L427.8,674.0M427.8,674.0L370.8,699.0M427.8,674.0L428.3,766.0M370.8,699.0L428.3,766.0M428.3,766.0L371.3,788.0M428.3,766.0L428.8,858.0M371.3,788.0L428.8,858.0M428.8,858.0L371.8,877.0M428.8,858.0L429.3,950.0M371.8,877.0L429.3,950.0M429.3,950.0L372.3,966.0M429.3,950.0L429.8,1042.0M372.3,966.0L429.8,1042.0M429.8,1042.0L372.8,1055.0M429.8,1042.0L430.3,1134.0M372.8,1055.0L430.3,1134.0M430.3,1134.0L373.3,1144.0M430.3,1134.0L430.8,1226.0M373.3,1144.0L430.8,1226.0M430.8,1226.0L373.8,1233.0M366.8,-13.0L309.8,36.0M366.8,-13.0L367.3,76.0M309.8,36.0L367.3,76.0M367.3,76.0L310.3,122.0M367.3,76.0L367.8,165.0M310.3,122.0L367.8,165.0M367.8,165.0L310.8,208.0M367.8,165.0L368.3,254.0M310.8,208.0L368.3,254.0M368.3,254.0L311.3,294.0M368.3,254.0L368.8,343.0M311.3,294.0L368.8,343.0M368.8,343.0L311.8,380.0M368.8,343.0L369.3,432.0M311.8,380.0L369.3,432.0M369.3,432.0L312.3,466.0M369.3,432.0L369.8,521.0M312.3,466.0L369.8,521.0M369.8,521.0L312.8,552.0M369.8,521.0L370.3,610.0M312.8,552.0L370.3,610.0M370.3,610.0L313.3,638.0M370.3,610.0L370.8,699.0M313.3,638.0L370.8,699.0M370.8,699.0L313.8,724.0M370.8,699.0L371.3,788.0M313.8,724.0L371.3,788.0M371.3,788.0L314.3,810.0M371.3,788.0L371.8,877.0M314.3,810.0L371.8,877.0M371.8,877.0L314.8,896.0M371.8,877.0L372.3,966.0M314.8,896.0L372.3,966.0M372.3,966.0L315.3,982.0M372.3,966.0L372.8,1055.0M315.3,982.0L372.8,1055.0M372.8,1055.0L315.8,1068.0M372.8,1055.0L373.3,1144.0M315.8,1068.0L373.3,1144.0M373.3,1144.0L316.3,1154.0M373.3,1144.0L373.8,1233.0M316.3,1154.0L373.8,1233.0M373.8,1233.0L316.8,1240.0M309.8,36.0L252.8,85.0M309.8,36.0L310.3,122.0M252.8,85.0L310.3,122.0M310.3,122.0L253.3,168.0M310.3,122.0L310.8,208.0M253.3,168.0L310.8,208.0M310.8,208.0L253.8,251.0M310.8,208.0L311.3,294.0M253.8,251.0L311.3,294.0M311.3,294.0L254.3,334.0M311.3,294.0L311.8,380.0M254.3,334.0L311.8,380.0M311.8,380.0L254.8,417.0M311.8,380.0L312.3,466.0M254.8,417.0L312.3,466.0M312.3,466.0L255.3,500.0M312.3,466.0L312.8,552.0M255.3,500.0L312.8,552.0M312.8,552.0L255.8,583.0M312.8,552.0L313.3,638.0M255.8,583.0L313.3,638.0M313.3,638.0L256.3,666.0M313.3,638.0L313.8,724.0M256.3,666.0L313.8,724.0M313.8,724.0L256.8,749.0M313.8,724.0L314.3,810.0M256.8,749.0L314.3,810.0M314.3,810.0L257.3,832.0M314.3,810.0L314.8,896.0M257.3,832.0L314.8,896.0M314.8,896.0L257.8,915.0M314.8,896.0L315.3,982.0M257.8,915.0L315.3,982.0M315.3,982.0L258.3,998.0M315.3,982.0L315.8,1068.0M258.3,998.0L315.8,1068.0M315.8,1068.0L258.8,1081.0M315.8,1068.0L316.3,1154.0M258.8,1081.0L316.3,1154.0M316.3,1154.0L259.3,1164.0M316.3,1154.0L316.8,1240.0M259.3,1164.0L316.8,1240.0M316.8,1240.0L259.8,1247.0M252.8,85.0L253.3,168.0M253.3,168.0L253.8,251.0M253.8,251.0L254.3,334.0M254.3,334.0L254.8,417.0M254.8,417.0L255.3,500.0M255.3,500.0L255.8,583.0M255.8,583.0L256.3,666.0M256.3,666.0L256.8,749.0M256.8,749.0L257.3,832.0M257.3,832.0L257.8,915.0M257.8,915.0L258.3,998.0M258.3,998.0L258.8,1081.0M258.8,1081.0L259.3,1164.0M259.3,1164.0L259.8,1247.0'/>
<path clip-path='url(#cWall)' stroke='#3a1c0e' stroke-width='1' fill='none' shape-rendering='crispEdges' d='M362.7,227.5L437.9,204.4M362.7,227.5L328.0,321.7M362.7,227.5L403.2,298.6M328.0,321.7L403.2,298.6M328.0,321.7L293.3,415.9M328.0,321.7L368.5,392.8M293.3,415.9L368.5,392.8M293.3,415.9L258.6,510.1M293.3,415.9L333.8,487.0M258.6,510.1L333.8,487.0M258.6,510.1L223.9,604.3M258.6,510.1L299.1,581.2M223.9,604.3L299.1,581.2M223.9,604.3L189.2,698.5M223.9,604.3L264.4,675.4M189.2,698.5L264.4,675.4M189.2,698.5L154.5,792.7M189.2,698.5L229.7,769.6M154.5,792.7L229.7,769.6M154.5,792.7L119.8,886.9M154.5,792.7L195.0,863.8M119.8,886.9L195.0,863.8M119.8,886.9L85.1,981.1M119.8,886.9L160.3,958.0M85.1,981.1L160.3,958.0M85.1,981.1L50.4,1075.3M85.1,981.1L125.6,1052.2M50.4,1075.3L125.6,1052.2M437.9,204.4L513.1,181.3M437.9,204.4L403.2,298.6M437.9,204.4L478.4,275.5M403.2,298.6L478.4,275.5M403.2,298.6L368.5,392.8M403.2,298.6L443.7,369.7M368.5,392.8L443.7,369.7M368.5,392.8L333.8,487.0M368.5,392.8L409.0,463.9M333.8,487.0L409.0,463.9M333.8,487.0L299.1,581.2M333.8,487.0L374.3,558.1M299.1,581.2L374.3,558.1M299.1,581.2L264.4,675.4M299.1,581.2L339.6,652.3M264.4,675.4L339.6,652.3M264.4,675.4L229.7,769.6M264.4,675.4L304.9,746.5M229.7,769.6L304.9,746.5M229.7,769.6L195.0,863.8M229.7,769.6L270.2,840.7M195.0,863.8L270.2,840.7M195.0,863.8L160.3,958.0M195.0,863.8L235.5,934.9M160.3,958.0L235.5,934.9M160.3,958.0L125.6,1052.2M160.3,958.0L200.8,1029.1M125.6,1052.2L200.8,1029.1M513.1,181.3L588.3,158.2M513.1,181.3L478.4,275.5M513.1,181.3L553.6,252.4M478.4,275.5L553.6,252.4M478.4,275.5L443.7,369.7M478.4,275.5L518.9,346.6M443.7,369.7L518.9,346.6M443.7,369.7L409.0,463.9M443.7,369.7L484.2,440.8M409.0,463.9L484.2,440.8M409.0,463.9L374.3,558.1M409.0,463.9L449.5,535.0M374.3,558.1L449.5,535.0M374.3,558.1L339.6,652.3M374.3,558.1L414.8,629.2M339.6,652.3L414.8,629.2M339.6,652.3L304.9,746.5M339.6,652.3L380.1,723.4M304.9,746.5L380.1,723.4M304.9,746.5L270.2,840.7M304.9,746.5L345.4,817.6M270.2,840.7L345.4,817.6M270.2,840.7L235.5,934.9M270.2,840.7L310.7,911.8M235.5,934.9L310.7,911.8M235.5,934.9L200.8,1029.1M235.5,934.9L276.0,1006.0M200.8,1029.1L276.0,1006.0M588.3,158.2L663.5,135.1M588.3,158.2L553.6,252.4M588.3,158.2L628.8,229.3M553.6,252.4L628.8,229.3M553.6,252.4L518.9,346.6M553.6,252.4L594.1,323.5M518.9,346.6L594.1,323.5M518.9,346.6L484.2,440.8M518.9,346.6L559.4,417.7M484.2,440.8L559.4,417.7M484.2,440.8L449.5,535.0M484.2,440.8L524.7,511.9M449.5,535.0L524.7,511.9M449.5,535.0L414.8,629.2M449.5,535.0L490.0,606.1M414.8,629.2L490.0,606.1M414.8,629.2L380.1,723.4M414.8,629.2L455.3,700.3M380.1,723.4L455.3,700.3M380.1,723.4L345.4,817.6M380.1,723.4L420.6,794.5M345.4,817.6L420.6,794.5M345.4,817.6L310.7,911.8M345.4,817.6L385.9,888.7M310.7,911.8L385.9,888.7M310.7,911.8L276.0,1006.0M310.7,911.8L351.2,982.9M276.0,1006.0L351.2,982.9M663.5,135.1L738.7,112.0M663.5,135.1L628.8,229.3M663.5,135.1L704.0,206.2M628.8,229.3L704.0,206.2M628.8,229.3L594.1,323.5M628.8,229.3L669.3,300.4M594.1,323.5L669.3,300.4M594.1,323.5L559.4,417.7M594.1,323.5L634.6,394.6M559.4,417.7L634.6,394.6M559.4,417.7L524.7,511.9M559.4,417.7L599.9,488.8M524.7,511.9L599.9,488.8M524.7,511.9L490.0,606.1M524.7,511.9L565.2,583.0M490.0,606.1L565.2,583.0M490.0,606.1L455.3,700.3M490.0,606.1L530.5,677.2M455.3,700.3L530.5,677.2M455.3,700.3L420.6,794.5M455.3,700.3L495.8,771.4M420.6,794.5L495.8,771.4M420.6,794.5L385.9,888.7M420.6,794.5L461.1,865.6M385.9,888.7L461.1,865.6M385.9,888.7L351.2,982.9M385.9,888.7L426.4,959.8M351.2,982.9L426.4,959.8M738.7,112.0L813.9,88.9M738.7,112.0L704.0,206.2M738.7,112.0L779.2,183.1M704.0,206.2L779.2,183.1M704.0,206.2L669.3,300.4M704.0,206.2L744.5,277.3M669.3,300.4L744.5,277.3M669.3,300.4L634.6,394.6M669.3,300.4L709.8,371.5M634.6,394.6L709.8,371.5M634.6,394.6L599.9,488.8M634.6,394.6L675.1,465.7M599.9,488.8L675.1,465.7M599.9,488.8L565.2,583.0M599.9,488.8L640.4,559.9M565.2,583.0L640.4,559.9M565.2,583.0L530.5,677.2M565.2,583.0L605.7,654.1M530.5,677.2L605.7,654.1M530.5,677.2L495.8,771.4M530.5,677.2L571.0,748.3M495.8,771.4L571.0,748.3M495.8,771.4L461.1,865.6M495.8,771.4L536.3,842.5M461.1,865.6L536.3,842.5M461.1,865.6L426.4,959.8M461.1,865.6L501.6,936.7M426.4,959.8L501.6,936.7M813.9,88.9L889.1,65.8M813.9,88.9L779.2,183.1M813.9,88.9L854.4,160.0M779.2,183.1L854.4,160.0M779.2,183.1L744.5,277.3M779.2,183.1L819.7,254.2M744.5,277.3L819.7,254.2M744.5,277.3L709.8,371.5M744.5,277.3L785.0,348.4M709.8,371.5L785.0,348.4M709.8,371.5L675.1,465.7M709.8,371.5L750.3,442.6M675.1,465.7L750.3,442.6M675.1,465.7L640.4,559.9M675.1,465.7L715.6,536.8M640.4,559.9L715.6,536.8M640.4,559.9L605.7,654.1M640.4,559.9L680.9,631.0M605.7,654.1L680.9,631.0M605.7,654.1L571.0,748.3M605.7,654.1L646.2,725.2M571.0,748.3L646.2,725.2M571.0,748.3L536.3,842.5M571.0,748.3L611.5,819.4M536.3,842.5L611.5,819.4M536.3,842.5L501.6,936.7M536.3,842.5L576.8,913.6M501.6,936.7L576.8,913.6M889.1,65.8L964.3,42.7M889.1,65.8L854.4,160.0M889.1,65.8L929.6,136.9M854.4,160.0L929.6,136.9M854.4,160.0L819.7,254.2M854.4,160.0L894.9,231.1M819.7,254.2L894.9,231.1M819.7,254.2L785.0,348.4M819.7,254.2L860.2,325.3M785.0,348.4L860.2,325.3M785.0,348.4L750.3,442.6M785.0,348.4L825.5,419.5M750.3,442.6L825.5,419.5M750.3,442.6L715.6,536.8M750.3,442.6L790.8,513.7M715.6,536.8L790.8,513.7M715.6,536.8L680.9,631.0M715.6,536.8L756.1,607.9M680.9,631.0L756.1,607.9M680.9,631.0L646.2,725.2M680.9,631.0L721.4,702.1M646.2,725.2L721.4,702.1M646.2,725.2L611.5,819.4M646.2,725.2L686.7,796.3M611.5,819.4L686.7,796.3M611.5,819.4L576.8,913.6M611.5,819.4L652.0,890.5M576.8,913.6L652.0,890.5M964.3,42.7L1039.5,19.6M964.3,42.7L929.6,136.9M964.3,42.7L1004.8,113.8M929.6,136.9L1004.8,113.8M929.6,136.9L894.9,231.1M929.6,136.9L970.1,208.0M894.9,231.1L970.1,208.0M894.9,231.1L860.2,325.3M894.9,231.1L935.4,302.2M860.2,325.3L935.4,302.2M860.2,325.3L825.5,419.5M860.2,325.3L900.7,396.4M825.5,419.5L900.7,396.4M825.5,419.5L790.8,513.7M825.5,419.5L866.0,490.6M790.8,513.7L866.0,490.6M790.8,513.7L756.1,607.9M790.8,513.7L831.3,584.8M756.1,607.9L831.3,584.8M756.1,607.9L721.4,702.1M756.1,607.9L796.6,679.0M721.4,702.1L796.6,679.0M721.4,702.1L686.7,796.3M721.4,702.1L761.9,773.2M686.7,796.3L761.9,773.2M686.7,796.3L652.0,890.5M686.7,796.3L727.2,867.4M652.0,890.5L727.2,867.4M1039.5,19.6L1114.7,-3.5M1039.5,19.6L1004.8,113.8M1039.5,19.6L1080.0,90.7M1004.8,113.8L1080.0,90.7M1004.8,113.8L970.1,208.0M1004.8,113.8L1045.3,184.9M970.1,208.0L1045.3,184.9M970.1,208.0L935.4,302.2M970.1,208.0L1010.6,279.1M935.4,302.2L1010.6,279.1M935.4,302.2L900.7,396.4M935.4,302.2L975.9,373.3M900.7,396.4L975.9,373.3M900.7,396.4L866.0,490.6M900.7,396.4L941.2,467.5M866.0,490.6L941.2,467.5M866.0,490.6L831.3,584.8M866.0,490.6L906.5,561.7M831.3,584.8L906.5,561.7M831.3,584.8L796.6,679.0M831.3,584.8L871.8,655.9M796.6,679.0L871.8,655.9M796.6,679.0L761.9,773.2M796.6,679.0L837.1,750.1M761.9,773.2L837.1,750.1M761.9,773.2L727.2,867.4M761.9,773.2L802.4,844.3M727.2,867.4L802.4,844.3M1114.7,-3.5L1189.9,-26.6M1114.7,-3.5L1080.0,90.7M1114.7,-3.5L1155.2,67.6M1080.0,90.7L1155.2,67.6M1080.0,90.7L1045.3,184.9M1080.0,90.7L1120.5,161.8M1045.3,184.9L1120.5,161.8M1045.3,184.9L1010.6,279.1M1045.3,184.9L1085.8,256.0M1010.6,279.1L1085.8,256.0M1010.6,279.1L975.9,373.3M1010.6,279.1L1051.1,350.2M975.9,373.3L1051.1,350.2M975.9,373.3L941.2,467.5M975.9,373.3L1016.4,444.4M941.2,467.5L1016.4,444.4M941.2,467.5L906.5,561.7M941.2,467.5L981.7,538.6M906.5,561.7L981.7,538.6M906.5,561.7L871.8,655.9M906.5,561.7L947.0,632.8M871.8,655.9L947.0,632.8M871.8,655.9L837.1,750.1M871.8,655.9L912.3,727.0M837.1,750.1L912.3,727.0M837.1,750.1L802.4,844.3M837.1,750.1L877.6,821.2M802.4,844.3L877.6,821.2M1189.9,-26.6L1265.1,-49.7M1189.9,-26.6L1155.2,67.6M1189.9,-26.6L1230.4,44.5M1155.2,67.6L1230.4,44.5M1155.2,67.6L1120.5,161.8M1155.2,67.6L1195.7,138.7M1120.5,161.8L1195.7,138.7M1120.5,161.8L1085.8,256.0M1120.5,161.8L1161.0,232.9M1085.8,256.0L1161.0,232.9M1085.8,256.0L1051.1,350.2M1085.8,256.0L1126.3,327.1M1051.1,350.2L1126.3,327.1M1051.1,350.2L1016.4,444.4M1051.1,350.2L1091.6,421.3M1016.4,444.4L1091.6,421.3M1016.4,444.4L981.7,538.6M1016.4,444.4L1056.9,515.5M981.7,538.6L1056.9,515.5M981.7,538.6L947.0,632.8M981.7,538.6L1022.2,609.7M947.0,632.8L1022.2,609.7M947.0,632.8L912.3,727.0M947.0,632.8L987.5,703.9M912.3,727.0L987.5,703.9M912.3,727.0L877.6,821.2M912.3,727.0L952.8,798.1M877.6,821.2L952.8,798.1M1265.1,-49.7L1340.3,-72.8M1265.1,-49.7L1230.4,44.5M1265.1,-49.7L1305.6,21.4M1230.4,44.5L1305.6,21.4M1230.4,44.5L1195.7,138.7M1230.4,44.5L1270.9,115.6M1195.7,138.7L1270.9,115.6M1195.7,138.7L1161.0,232.9M1195.7,138.7L1236.2,209.8M1161.0,232.9L1236.2,209.8M1161.0,232.9L1126.3,327.1M1161.0,232.9L1201.5,304.0M1126.3,327.1L1201.5,304.0M1126.3,327.1L1091.6,421.3M1126.3,327.1L1166.8,398.2M1091.6,421.3L1166.8,398.2M1091.6,421.3L1056.9,515.5M1091.6,421.3L1132.1,492.4M1056.9,515.5L1132.1,492.4M1056.9,515.5L1022.2,609.7M1056.9,515.5L1097.4,586.6M1022.2,609.7L1097.4,586.6M1022.2,609.7L987.5,703.9M1022.2,609.7L1062.7,680.8M987.5,703.9L1062.7,680.8M987.5,703.9L952.8,798.1M987.5,703.9L1028.0,775.0M952.8,798.1L1028.0,775.0M1340.3,-72.8L1415.5,-95.9M1340.3,-72.8L1305.6,21.4M1340.3,-72.8L1380.8,-1.7M1305.6,21.4L1380.8,-1.7M1305.6,21.4L1270.9,115.6M1305.6,21.4L1346.1,92.5M1270.9,115.6L1346.1,92.5M1270.9,115.6L1236.2,209.8M1270.9,115.6L1311.4,186.7M1236.2,209.8L1311.4,186.7M1236.2,209.8L1201.5,304.0M1236.2,209.8L1276.7,280.9M1201.5,304.0L1276.7,280.9M1201.5,304.0L1166.8,398.2M1201.5,304.0L1242.0,375.1M1166.8,398.2L1242.0,375.1M1166.8,398.2L1132.1,492.4M1166.8,398.2L1207.3,469.3M1132.1,492.4L1207.3,469.3M1132.1,492.4L1097.4,586.6M1132.1,492.4L1172.6,563.5M1097.4,586.6L1172.6,563.5M1097.4,586.6L1062.7,680.8M1097.4,586.6L1137.9,657.7M1062.7,680.8L1137.9,657.7M1062.7,680.8L1028.0,775.0M1062.7,680.8L1103.2,751.9M1028.0,775.0L1103.2,751.9M1415.5,-95.9L1490.7,-119.0M1415.5,-95.9L1380.8,-1.7M1415.5,-95.9L1456.0,-24.8M1380.8,-1.7L1456.0,-24.8M1380.8,-1.7L1346.1,92.5M1380.8,-1.7L1421.3,69.4M1346.1,92.5L1421.3,69.4M1346.1,92.5L1311.4,186.7M1346.1,92.5L1386.6,163.6M1311.4,186.7L1386.6,163.6M1311.4,186.7L1276.7,280.9M1311.4,186.7L1351.9,257.8M1276.7,280.9L1351.9,257.8M1276.7,280.9L1242.0,375.1M1276.7,280.9L1317.2,352.0M1242.0,375.1L1317.2,352.0M1242.0,375.1L1207.3,469.3M1242.0,375.1L1282.5,446.2M1207.3,469.3L1282.5,446.2M1207.3,469.3L1172.6,563.5M1207.3,469.3L1247.8,540.4M1172.6,563.5L1247.8,540.4M1172.6,563.5L1137.9,657.7M1172.6,563.5L1213.1,634.6M1137.9,657.7L1213.1,634.6M1137.9,657.7L1103.2,751.9M1137.9,657.7L1178.4,728.8M1103.2,751.9L1178.4,728.8M1490.7,-119.0L1565.9,-141.2M1490.7,-119.0L1456.0,-24.8M1490.7,-119.0L1531.2,-47.9M1456.0,-24.8L1531.2,-47.9M1456.0,-24.8L1421.3,69.4M1456.0,-24.8L1496.5,46.3M1421.3,69.4L1496.5,46.3M1421.3,69.4L1386.6,163.6M1421.3,69.4L1461.8,140.5M1386.6,163.6L1461.8,140.5M1386.6,163.6L1351.9,257.8M1386.6,163.6L1427.1,234.7M1351.9,257.8L1427.1,234.7M1351.9,257.8L1317.2,352.0M1351.9,257.8L1392.4,328.9M1317.2,352.0L1392.4,328.9M1317.2,352.0L1282.5,446.2M1317.2,352.0L1357.7,423.1M1282.5,446.2L1357.7,423.1M1282.5,446.2L1247.8,540.4M1282.5,446.2L1323.0,517.3M1247.8,540.4L1323.0,517.3M1247.8,540.4L1213.1,634.6M1247.8,540.4L1288.3,611.5M1213.1,634.6L1288.3,611.5M1213.1,634.6L1178.4,728.8M1213.1,634.6L1253.6,705.7M1178.4,728.8L1253.6,705.7M1565.9,-141.2L1641.1,-153.0M1565.9,-141.2L1531.2,-47.9M1565.9,-141.2L1606.4,-64.0M1531.2,-47.9L1606.4,-64.0M1531.2,-47.9L1496.5,46.3M1531.2,-47.9L1571.7,25.0M1496.5,46.3L1571.7,25.0M1496.5,46.3L1461.8,140.5M1496.5,46.3L1537.0,117.4M1461.8,140.5L1537.0,117.4M1461.8,140.5L1427.1,234.7M1461.8,140.5L1502.3,211.6M1427.1,234.7L1502.3,211.6M1427.1,234.7L1392.4,328.9M1427.1,234.7L1467.6,305.8M1392.4,328.9L1467.6,305.8M1392.4,328.9L1357.7,423.1M1392.4,328.9L1432.9,400.0M1357.7,423.1L1432.9,400.0M1357.7,423.1L1323.0,517.3M1357.7,423.1L1398.2,494.2M1323.0,517.3L1398.2,494.2M1323.0,517.3L1288.3,611.5M1323.0,517.3L1363.5,588.4M1288.3,611.5L1363.5,588.4M1288.3,611.5L1253.6,705.7M1288.3,611.5L1328.8,682.6M1253.6,705.7L1328.8,682.6M1641.1,-153.0L1716.3,-164.9M1641.1,-153.0L1606.4,-64.0M1641.1,-153.0L1681.6,-75.9M1606.4,-64.0L1681.6,-75.9M1606.4,-64.0L1571.7,25.0M1606.4,-64.0L1646.9,13.1M1571.7,25.0L1646.9,13.1M1571.7,25.0L1537.0,117.4M1571.7,25.0L1612.2,102.1M1537.0,117.4L1612.2,102.1M1537.0,117.4L1502.3,211.6M1537.0,117.4L1577.5,191.1M1502.3,211.6L1577.5,191.1M1502.3,211.6L1467.6,305.8M1502.3,211.6L1542.8,282.7M1467.6,305.8L1542.8,282.7M1467.6,305.8L1432.9,400.0M1467.6,305.8L1508.1,376.9M1432.9,400.0L1508.1,376.9M1432.9,400.0L1398.2,494.2M1432.9,400.0L1473.4,471.1M1398.2,494.2L1473.4,471.1M1398.2,494.2L1363.5,588.4M1398.2,494.2L1438.7,565.3M1363.5,588.4L1438.7,565.3M1363.5,588.4L1328.8,682.6M1363.5,588.4L1404.0,659.5M1328.8,682.6L1404.0,659.5M1716.3,-164.9L1791.5,-176.7M1716.3,-164.9L1681.6,-75.9M1716.3,-164.9L1756.8,-87.7M1681.6,-75.9L1756.8,-87.7M1681.6,-75.9L1646.9,13.1M1681.6,-75.9L1722.1,1.3M1646.9,13.1L1722.1,1.3M1646.9,13.1L1612.2,102.1M1646.9,13.1L1687.4,90.3M1612.2,102.1L1687.4,90.3M1612.2,102.1L1577.5,191.1M1612.2,102.1L1652.7,179.3M1577.5,191.1L1652.7,179.3M1577.5,191.1L1542.8,282.7M1577.5,191.1L1618.0,268.3M1542.8,282.7L1618.0,268.3M1542.8,282.7L1508.1,376.9M1542.8,282.7L1583.3,357.3M1508.1,376.9L1583.3,357.3M1508.1,376.9L1473.4,471.1M1508.1,376.9L1548.6,448.0M1473.4,471.1L1548.6,448.0M1473.4,471.1L1438.7,565.3M1473.4,471.1L1513.9,542.2M1438.7,565.3L1513.9,542.2M1438.7,565.3L1404.0,659.5M1438.7,565.3L1479.2,636.4M1404.0,659.5L1479.2,636.4M1791.5,-176.7L1866.7,-188.5M1791.5,-176.7L1756.8,-87.7M1791.5,-176.7L1832.0,-99.5M1756.8,-87.7L1832.0,-99.5M1756.8,-87.7L1722.1,1.3M1756.8,-87.7L1797.3,-10.5M1722.1,1.3L1797.3,-10.5M1722.1,1.3L1687.4,90.3M1722.1,1.3L1762.6,78.5M1687.4,90.3L1762.6,78.5M1687.4,90.3L1652.7,179.3M1687.4,90.3L1727.9,167.5M1652.7,179.3L1727.9,167.5M1652.7,179.3L1618.0,268.3M1652.7,179.3L1693.2,256.5M1618.0,268.3L1693.2,256.5M1618.0,268.3L1583.3,357.3M1618.0,268.3L1658.5,345.5M1583.3,357.3L1658.5,345.5M1583.3,357.3L1548.6,448.0M1583.3,357.3L1623.8,434.5M1548.6,448.0L1623.8,434.5M1548.6,448.0L1513.9,542.2M1548.6,448.0L1589.1,523.5M1513.9,542.2L1589.1,523.5M1513.9,542.2L1479.2,636.4M1513.9,542.2L1554.4,613.3M1479.2,636.4L1554.4,613.3M1866.7,-188.5L1941.9,-200.3M1866.7,-188.5L1832.0,-99.5M1866.7,-188.5L1907.2,-111.3M1832.0,-99.5L1907.2,-111.3M1832.0,-99.5L1797.3,-10.5M1832.0,-99.5L1872.5,-22.3M1797.3,-10.5L1872.5,-22.3M1797.3,-10.5L1762.6,78.5M1797.3,-10.5L1837.8,66.7M1762.6,78.5L1837.8,66.7M1762.6,78.5L1727.9,167.5M1762.6,78.5L1803.1,155.7M1727.9,167.5L1803.1,155.7M1727.9,167.5L1693.2,256.5M1727.9,167.5L1768.4,244.7M1693.2,256.5L1768.4,244.7M1693.2,256.5L1658.5,345.5M1693.2,256.5L1733.7,333.7M1658.5,345.5L1733.7,333.7M1658.5,345.5L1623.8,434.5M1658.5,345.5L1699.0,422.7M1623.8,434.5L1699.0,422.7M1623.8,434.5L1589.1,523.5M1623.8,434.5L1664.3,511.6M1589.1,523.5L1664.3,511.6M1589.1,523.5L1554.4,613.3M1589.1,523.5L1629.6,600.6M1554.4,613.3L1629.6,600.6M1941.9,-200.3L2017.1,-212.1M1941.9,-200.3L1907.2,-111.3M1941.9,-200.3L1982.4,-123.1M1907.2,-111.3L1982.4,-123.1M1907.2,-111.3L1872.5,-22.3M1907.2,-111.3L1947.7,-34.1M1872.5,-22.3L1947.7,-34.1M1872.5,-22.3L1837.8,66.7M1872.5,-22.3L1913.0,54.8M1837.8,66.7L1913.0,54.8M1837.8,66.7L1803.1,155.7M1837.8,66.7L1878.3,143.8M1803.1,155.7L1878.3,143.8M1803.1,155.7L1768.4,244.7M1803.1,155.7L1843.6,232.8M1768.4,244.7L1843.6,232.8M1768.4,244.7L1733.7,333.7M1768.4,244.7L1808.9,321.8M1733.7,333.7L1808.9,321.8M1733.7,333.7L1699.0,422.7M1733.7,333.7L1774.2,410.8M1699.0,422.7L1774.2,410.8M1699.0,422.7L1664.3,511.6M1699.0,422.7L1739.5,499.8M1664.3,511.6L1739.5,499.8M1664.3,511.6L1629.6,600.6M1664.3,511.6L1704.8,588.8M1629.6,600.6L1704.8,588.8M2017.1,-212.1L1982.4,-123.1M1982.4,-123.1L1947.7,-34.1M1947.7,-34.1L1913.0,54.8M1913.0,54.8L1878.3,143.8M1878.3,143.8L1843.6,232.8M1843.6,232.8L1808.9,321.8M1808.9,321.8L1774.2,410.8M1774.2,410.8L1739.5,499.8M1739.5,499.8L1704.8,588.8'/>
<path clip-path='url(#cFloor)' stroke='#3a1414' stroke-opacity='0.75' stroke-width='1' fill='none' shape-rendering='crispEdges' d='M234.5,447.4L309.5,424.4M234.5,447.4L253.5,482.4M234.5,447.4L328.5,459.4M253.5,482.4L328.5,459.4M253.5,482.4L272.5,517.4M253.5,482.4L347.5,494.4M272.5,517.4L347.5,494.4M272.5,517.4L291.5,552.4M272.5,517.4L366.5,529.4M291.5,552.4L366.5,529.4M291.5,552.4L310.5,587.4M291.5,552.4L385.5,564.4M310.5,587.4L385.5,564.4M310.5,587.4L329.5,622.4M310.5,587.4L404.5,599.4M329.5,622.4L404.5,599.4M329.5,622.4L348.5,657.4M329.5,622.4L423.5,634.4M348.5,657.4L423.5,634.4M348.5,657.4L367.5,692.4M348.5,657.4L442.5,669.4M367.5,692.4L442.5,669.4M367.5,692.4L386.5,727.4M367.5,692.4L461.5,704.4M386.5,727.4L461.5,704.4M386.5,727.4L405.5,762.4M386.5,727.4L480.5,739.4M405.5,762.4L480.5,739.4M405.5,762.4L424.5,797.4M405.5,762.4L499.5,774.4M424.5,797.4L499.5,774.4M424.5,797.4L443.5,832.4M424.5,797.4L518.5,809.4M443.5,832.4L518.5,809.4M443.5,832.4L462.5,867.4M443.5,832.4L537.5,844.4M462.5,867.4L537.5,844.4M462.5,867.4L481.5,902.4M462.5,867.4L556.5,879.4M481.5,902.4L556.5,879.4M481.5,902.4L500.5,937.4M481.5,902.4L575.5,914.4M500.5,937.4L575.5,914.4M500.5,937.4L519.5,972.4M500.5,937.4L594.5,949.4M519.5,972.4L594.5,949.4M519.5,972.4L538.5,1007.4M519.5,972.4L613.5,984.4M538.5,1007.4L613.5,984.4M538.5,1007.4L557.5,1042.4M538.5,1007.4L632.5,1019.4M557.5,1042.4L632.5,1019.4M557.5,1042.4L576.5,1077.4M557.5,1042.4L651.5,1054.4M576.5,1077.4L651.5,1054.4M576.5,1077.4L595.5,1112.4M576.5,1077.4L670.5,1089.4M595.5,1112.4L670.5,1089.4M595.5,1112.4L614.5,1147.4M595.5,1112.4L689.5,1124.4M614.5,1147.4L689.5,1124.4M309.5,424.4L384.5,401.4M309.5,424.4L328.5,459.4M309.5,424.4L403.5,436.4M328.5,459.4L403.5,436.4M328.5,459.4L347.5,494.4M328.5,459.4L422.5,471.4M347.5,494.4L422.5,471.4M347.5,494.4L366.5,529.4M347.5,494.4L441.5,506.4M366.5,529.4L441.5,506.4M366.5,529.4L385.5,564.4M366.5,529.4L460.5,541.4M385.5,564.4L460.5,541.4M385.5,564.4L404.5,599.4M385.5,564.4L479.5,576.4M404.5,599.4L479.5,576.4M404.5,599.4L423.5,634.4M404.5,599.4L498.5,611.4M423.5,634.4L498.5,611.4M423.5,634.4L442.5,669.4M423.5,634.4L517.5,646.4M442.5,669.4L517.5,646.4M442.5,669.4L461.5,704.4M442.5,669.4L536.5,681.4M461.5,704.4L536.5,681.4M461.5,704.4L480.5,739.4M461.5,704.4L555.5,716.4M480.5,739.4L555.5,716.4M480.5,739.4L499.5,774.4M480.5,739.4L574.5,751.4M499.5,774.4L574.5,751.4M499.5,774.4L518.5,809.4M499.5,774.4L593.5,786.4M518.5,809.4L593.5,786.4M518.5,809.4L537.5,844.4M518.5,809.4L612.5,821.4M537.5,844.4L612.5,821.4M537.5,844.4L556.5,879.4M537.5,844.4L631.5,856.4M556.5,879.4L631.5,856.4M556.5,879.4L575.5,914.4M556.5,879.4L650.5,891.4M575.5,914.4L650.5,891.4M575.5,914.4L594.5,949.4M575.5,914.4L669.5,926.4M594.5,949.4L669.5,926.4M594.5,949.4L613.5,984.4M594.5,949.4L688.5,961.4M613.5,984.4L688.5,961.4M613.5,984.4L632.5,1019.4M613.5,984.4L707.5,996.4M632.5,1019.4L707.5,996.4M632.5,1019.4L651.5,1054.4M632.5,1019.4L726.5,1031.4M651.5,1054.4L726.5,1031.4M651.5,1054.4L670.5,1089.4M651.5,1054.4L745.5,1066.4M670.5,1089.4L745.5,1066.4M670.5,1089.4L689.5,1124.4M670.5,1089.4L764.5,1101.4M689.5,1124.4L764.5,1101.4M384.5,401.4L459.5,378.4M384.5,401.4L403.5,436.4M384.5,401.4L478.5,413.4M403.5,436.4L478.5,413.4M403.5,436.4L422.5,471.4M403.5,436.4L497.5,448.4M422.5,471.4L497.5,448.4M422.5,471.4L441.5,506.4M422.5,471.4L516.5,483.4M441.5,506.4L516.5,483.4M441.5,506.4L460.5,541.4M441.5,506.4L535.5,518.4M460.5,541.4L535.5,518.4M460.5,541.4L479.5,576.4M460.5,541.4L554.5,553.4M479.5,576.4L554.5,553.4M479.5,576.4L498.5,611.4M479.5,576.4L573.5,588.4M498.5,611.4L573.5,588.4M498.5,611.4L517.5,646.4M498.5,611.4L592.5,623.4M517.5,646.4L592.5,623.4M517.5,646.4L536.5,681.4M517.5,646.4L611.5,658.4M536.5,681.4L611.5,658.4M536.5,681.4L555.5,716.4M536.5,681.4L630.5,693.4M555.5,716.4L630.5,693.4M555.5,716.4L574.5,751.4M555.5,716.4L649.5,728.4M574.5,751.4L649.5,728.4M574.5,751.4L593.5,786.4M574.5,751.4L668.5,763.4M593.5,786.4L668.5,763.4M593.5,786.4L612.5,821.4M593.5,786.4L687.5,798.4M612.5,821.4L687.5,798.4M612.5,821.4L631.5,856.4M612.5,821.4L706.5,833.4M631.5,856.4L706.5,833.4M631.5,856.4L650.5,891.4M631.5,856.4L725.5,868.4M650.5,891.4L725.5,868.4M650.5,891.4L669.5,926.4M650.5,891.4L744.5,903.4M669.5,926.4L744.5,903.4M669.5,926.4L688.5,961.4M669.5,926.4L763.5,938.4M688.5,961.4L763.5,938.4M688.5,961.4L707.5,996.4M688.5,961.4L782.5,973.4M707.5,996.4L782.5,973.4M707.5,996.4L726.5,1031.4M707.5,996.4L801.5,1008.4M726.5,1031.4L801.5,1008.4M726.5,1031.4L745.5,1066.4M726.5,1031.4L820.5,1043.4M745.5,1066.4L820.5,1043.4M745.5,1066.4L764.5,1101.4M745.5,1066.4L839.5,1078.4M764.5,1101.4L839.5,1078.4M459.5,378.4L534.5,355.4M459.5,378.4L478.5,413.4M459.5,378.4L553.5,390.4M478.5,413.4L553.5,390.4M478.5,413.4L497.5,448.4M478.5,413.4L572.5,425.4M497.5,448.4L572.5,425.4M497.5,448.4L516.5,483.4M497.5,448.4L591.5,460.4M516.5,483.4L591.5,460.4M516.5,483.4L535.5,518.4M516.5,483.4L610.5,495.4M535.5,518.4L610.5,495.4M535.5,518.4L554.5,553.4M535.5,518.4L629.5,530.4M554.5,553.4L629.5,530.4M554.5,553.4L573.5,588.4M554.5,553.4L648.5,565.4M573.5,588.4L648.5,565.4M573.5,588.4L592.5,623.4M573.5,588.4L667.5,600.4M592.5,623.4L667.5,600.4M592.5,623.4L611.5,658.4M592.5,623.4L686.5,635.4M611.5,658.4L686.5,635.4M611.5,658.4L630.5,693.4M611.5,658.4L705.5,670.4M630.5,693.4L705.5,670.4M630.5,693.4L649.5,728.4M630.5,693.4L724.5,705.4M649.5,728.4L724.5,705.4M649.5,728.4L668.5,763.4M649.5,728.4L743.5,740.4M668.5,763.4L743.5,740.4M668.5,763.4L687.5,798.4M668.5,763.4L762.5,775.4M687.5,798.4L762.5,775.4M687.5,798.4L706.5,833.4M687.5,798.4L781.5,810.4M706.5,833.4L781.5,810.4M706.5,833.4L725.5,868.4M706.5,833.4L800.5,845.4M725.5,868.4L800.5,845.4M725.5,868.4L744.5,903.4M725.5,868.4L819.5,880.4M744.5,903.4L819.5,880.4M744.5,903.4L763.5,938.4M744.5,903.4L838.5,915.4M763.5,938.4L838.5,915.4M763.5,938.4L782.5,973.4M763.5,938.4L857.5,950.4M782.5,973.4L857.5,950.4M782.5,973.4L801.5,1008.4M782.5,973.4L876.5,985.4M801.5,1008.4L876.5,985.4M801.5,1008.4L820.5,1043.4M801.5,1008.4L895.5,1020.4M820.5,1043.4L895.5,1020.4M820.5,1043.4L839.5,1078.4M820.5,1043.4L914.5,1055.4M839.5,1078.4L914.5,1055.4M534.5,355.4L609.5,332.4M534.5,355.4L553.5,390.4M534.5,355.4L628.5,367.4M553.5,390.4L628.5,367.4M553.5,390.4L572.5,425.4M553.5,390.4L647.5,402.4M572.5,425.4L647.5,402.4M572.5,425.4L591.5,460.4M572.5,425.4L666.5,437.4M591.5,460.4L666.5,437.4M591.5,460.4L610.5,495.4M591.5,460.4L685.5,472.4M610.5,495.4L685.5,472.4M610.5,495.4L629.5,530.4M610.5,495.4L704.5,507.4M629.5,530.4L704.5,507.4M629.5,530.4L648.5,565.4M629.5,530.4L723.5,542.4M648.5,565.4L723.5,542.4M648.5,565.4L667.5,600.4M648.5,565.4L742.5,577.4M667.5,600.4L742.5,577.4M667.5,600.4L686.5,635.4M667.5,600.4L761.5,612.4M686.5,635.4L761.5,612.4M686.5,635.4L705.5,670.4M686.5,635.4L780.5,647.4M705.5,670.4L780.5,647.4M705.5,670.4L724.5,705.4M705.5,670.4L799.5,682.4M724.5,705.4L799.5,682.4M724.5,705.4L743.5,740.4M724.5,705.4L818.5,717.4M743.5,740.4L818.5,717.4M743.5,740.4L762.5,775.4M743.5,740.4L837.5,752.4M762.5,775.4L837.5,752.4M762.5,775.4L781.5,810.4M762.5,775.4L856.5,787.4M781.5,810.4L856.5,787.4M781.5,810.4L800.5,845.4M781.5,810.4L875.5,822.4M800.5,845.4L875.5,822.4M800.5,845.4L819.5,880.4M800.5,845.4L894.5,857.4M819.5,880.4L894.5,857.4M819.5,880.4L838.5,915.4M819.5,880.4L913.5,892.4M838.5,915.4L913.5,892.4M838.5,915.4L857.5,950.4M838.5,915.4L932.5,927.4M857.5,950.4L932.5,927.4M857.5,950.4L876.5,985.4M857.5,950.4L951.5,962.4M876.5,985.4L951.5,962.4M876.5,985.4L895.5,1020.4M876.5,985.4L970.5,997.4M895.5,1020.4L970.5,997.4M895.5,1020.4L914.5,1055.4M895.5,1020.4L989.5,1032.4M914.5,1055.4L989.5,1032.4M609.5,332.4L684.5,309.4M609.5,332.4L628.5,367.4M609.5,332.4L703.5,344.4M628.5,367.4L703.5,344.4M628.5,367.4L647.5,402.4M628.5,367.4L722.5,379.4M647.5,402.4L722.5,379.4M647.5,402.4L666.5,437.4M647.5,402.4L741.5,414.4M666.5,437.4L741.5,414.4M666.5,437.4L685.5,472.4M666.5,437.4L760.5,449.4M685.5,472.4L760.5,449.4M685.5,472.4L704.5,507.4M685.5,472.4L779.5,484.4M704.5,507.4L779.5,484.4M704.5,507.4L723.5,542.4M704.5,507.4L798.5,519.4M723.5,542.4L798.5,519.4M723.5,542.4L742.5,577.4M723.5,542.4L817.5,554.4M742.5,577.4L817.5,554.4M742.5,577.4L761.5,612.4M742.5,577.4L836.5,589.4M761.5,612.4L836.5,589.4M761.5,612.4L780.5,647.4M761.5,612.4L855.5,624.4M780.5,647.4L855.5,624.4M780.5,647.4L799.5,682.4M780.5,647.4L874.5,659.4M799.5,682.4L874.5,659.4M799.5,682.4L818.5,717.4M799.5,682.4L893.5,694.4M818.5,717.4L893.5,694.4M818.5,717.4L837.5,752.4M818.5,717.4L912.5,729.4M837.5,752.4L912.5,729.4M837.5,752.4L856.5,787.4M837.5,752.4L931.5,764.4M856.5,787.4L931.5,764.4M856.5,787.4L875.5,822.4M856.5,787.4L950.5,799.4M875.5,822.4L950.5,799.4M875.5,822.4L894.5,857.4M875.5,822.4L969.5,834.4M894.5,857.4L969.5,834.4M894.5,857.4L913.5,892.4M894.5,857.4L988.5,869.4M913.5,892.4L988.5,869.4M913.5,892.4L932.5,927.4M913.5,892.4L1007.5,904.4M932.5,927.4L1007.5,904.4M932.5,927.4L951.5,962.4M932.5,927.4L1026.5,939.4M951.5,962.4L1026.5,939.4M951.5,962.4L970.5,997.4M951.5,962.4L1045.5,974.4M970.5,997.4L1045.5,974.4M970.5,997.4L989.5,1032.4M970.5,997.4L1064.5,1009.4M989.5,1032.4L1064.5,1009.4M684.5,309.4L759.5,286.4M684.5,309.4L703.5,344.4M684.5,309.4L778.5,321.4M703.5,344.4L778.5,321.4M703.5,344.4L722.5,379.4M703.5,344.4L797.5,356.4M722.5,379.4L797.5,356.4M722.5,379.4L741.5,414.4M722.5,379.4L816.5,391.4M741.5,414.4L816.5,391.4M741.5,414.4L760.5,449.4M741.5,414.4L835.5,426.4M760.5,449.4L835.5,426.4M760.5,449.4L779.5,484.4M760.5,449.4L854.5,461.4M779.5,484.4L854.5,461.4M779.5,484.4L798.5,519.4M779.5,484.4L873.5,496.4M798.5,519.4L873.5,496.4M798.5,519.4L817.5,554.4M798.5,519.4L892.5,531.4M817.5,554.4L892.5,531.4M817.5,554.4L836.5,589.4M817.5,554.4L911.5,566.4M836.5,589.4L911.5,566.4M836.5,589.4L855.5,624.4M836.5,589.4L930.5,601.4M855.5,624.4L930.5,601.4M855.5,624.4L874.5,659.4M855.5,624.4L949.5,636.4M874.5,659.4L949.5,636.4M874.5,659.4L893.5,694.4M874.5,659.4L968.5,671.4M893.5,694.4L968.5,671.4M893.5,694.4L912.5,729.4M893.5,694.4L987.5,706.4M912.5,729.4L987.5,706.4M912.5,729.4L931.5,764.4M912.5,729.4L1006.5,741.4M931.5,764.4L1006.5,741.4M931.5,764.4L950.5,799.4M931.5,764.4L1025.5,776.4M950.5,799.4L1025.5,776.4M950.5,799.4L969.5,834.4M950.5,799.4L1044.5,811.4M969.5,834.4L1044.5,811.4M969.5,834.4L988.5,869.4M969.5,834.4L1063.5,846.4M988.5,869.4L1063.5,846.4M988.5,869.4L1007.5,904.4M988.5,869.4L1082.5,881.4M1007.5,904.4L1082.5,881.4M1007.5,904.4L1026.5,939.4M1007.5,904.4L1101.5,916.4M1026.5,939.4L1101.5,916.4M1026.5,939.4L1045.5,974.4M1026.5,939.4L1120.5,951.4M1045.5,974.4L1120.5,951.4M1045.5,974.4L1064.5,1009.4M1045.5,974.4L1139.5,986.4M1064.5,1009.4L1139.5,986.4M759.5,286.4L834.5,263.4M759.5,286.4L778.5,321.4M759.5,286.4L853.5,298.4M778.5,321.4L853.5,298.4M778.5,321.4L797.5,356.4M778.5,321.4L872.5,333.4M797.5,356.4L872.5,333.4M797.5,356.4L816.5,391.4M797.5,356.4L891.5,368.4M816.5,391.4L891.5,368.4M816.5,391.4L835.5,426.4M816.5,391.4L910.5,403.4M835.5,426.4L910.5,403.4M835.5,426.4L854.5,461.4M835.5,426.4L929.5,438.4M854.5,461.4L929.5,438.4M854.5,461.4L873.5,496.4M854.5,461.4L948.5,473.4M873.5,496.4L948.5,473.4M873.5,496.4L892.5,531.4M873.5,496.4L967.5,508.4M892.5,531.4L967.5,508.4M892.5,531.4L911.5,566.4M892.5,531.4L986.5,543.4M911.5,566.4L986.5,543.4M911.5,566.4L930.5,601.4M911.5,566.4L1005.5,578.4M930.5,601.4L1005.5,578.4M930.5,601.4L949.5,636.4M930.5,601.4L1024.5,613.4M949.5,636.4L1024.5,613.4M949.5,636.4L968.5,671.4M949.5,636.4L1043.5,648.4M968.5,671.4L1043.5,648.4M968.5,671.4L987.5,706.4M968.5,671.4L1062.5,683.4M987.5,706.4L1062.5,683.4M987.5,706.4L1006.5,741.4M987.5,706.4L1081.5,718.4M1006.5,741.4L1081.5,718.4M1006.5,741.4L1025.5,776.4M1006.5,741.4L1100.5,753.4M1025.5,776.4L1100.5,753.4M1025.5,776.4L1044.5,811.4M1025.5,776.4L1119.5,788.4M1044.5,811.4L1119.5,788.4M1044.5,811.4L1063.5,846.4M1044.5,811.4L1138.5,823.4M1063.5,846.4L1138.5,823.4M1063.5,846.4L1082.5,881.4M1063.5,846.4L1157.5,858.4M1082.5,881.4L1157.5,858.4M1082.5,881.4L1101.5,916.4M1082.5,881.4L1176.5,893.4M1101.5,916.4L1176.5,893.4M1101.5,916.4L1120.5,951.4M1101.5,916.4L1195.5,928.4M1120.5,951.4L1195.5,928.4M1120.5,951.4L1139.5,986.4M1120.5,951.4L1214.5,963.4M1139.5,986.4L1214.5,963.4M834.5,263.4L909.5,240.4M834.5,263.4L853.5,298.4M834.5,263.4L928.5,275.4M853.5,298.4L928.5,275.4M853.5,298.4L872.5,333.4M853.5,298.4L947.5,310.4M872.5,333.4L947.5,310.4M872.5,333.4L891.5,368.4M872.5,333.4L966.5,345.4M891.5,368.4L966.5,345.4M891.5,368.4L910.5,403.4M891.5,368.4L985.5,380.4M910.5,403.4L985.5,380.4M910.5,403.4L929.5,438.4M910.5,403.4L1004.5,415.4M929.5,438.4L1004.5,415.4M929.5,438.4L948.5,473.4M929.5,438.4L1023.5,450.4M948.5,473.4L1023.5,450.4M948.5,473.4L967.5,508.4M948.5,473.4L1042.5,485.4M967.5,508.4L1042.5,485.4M967.5,508.4L986.5,543.4M967.5,508.4L1061.5,520.4M986.5,543.4L1061.5,520.4M986.5,543.4L1005.5,578.4M986.5,543.4L1080.5,555.4M1005.5,578.4L1080.5,555.4M1005.5,578.4L1024.5,613.4M1005.5,578.4L1099.5,590.4M1024.5,613.4L1099.5,590.4M1024.5,613.4L1043.5,648.4M1024.5,613.4L1118.5,625.4M1043.5,648.4L1118.5,625.4M1043.5,648.4L1062.5,683.4M1043.5,648.4L1137.5,660.4M1062.5,683.4L1137.5,660.4M1062.5,683.4L1081.5,718.4M1062.5,683.4L1156.5,695.4M1081.5,718.4L1156.5,695.4M1081.5,718.4L1100.5,753.4M1081.5,718.4L1175.5,730.4M1100.5,753.4L1175.5,730.4M1100.5,753.4L1119.5,788.4M1100.5,753.4L1194.5,765.4M1119.5,788.4L1194.5,765.4M1119.5,788.4L1138.5,823.4M1119.5,788.4L1213.5,800.4M1138.5,823.4L1213.5,800.4M1138.5,823.4L1157.5,858.4M1138.5,823.4L1232.5,835.4M1157.5,858.4L1232.5,835.4M1157.5,858.4L1176.5,893.4M1157.5,858.4L1251.5,870.4M1176.5,893.4L1251.5,870.4M1176.5,893.4L1195.5,928.4M1176.5,893.4L1270.5,905.4M1195.5,928.4L1270.5,905.4M1195.5,928.4L1214.5,963.4M1195.5,928.4L1289.5,940.4M1214.5,963.4L1289.5,940.4M909.5,240.4L984.5,217.4M909.5,240.4L928.5,275.4M909.5,240.4L1003.5,252.4M928.5,275.4L1003.5,252.4M928.5,275.4L947.5,310.4M928.5,275.4L1022.5,287.4M947.5,310.4L1022.5,287.4M947.5,310.4L966.5,345.4M947.5,310.4L1041.5,322.4M966.5,345.4L1041.5,322.4M966.5,345.4L985.5,380.4M966.5,345.4L1060.5,357.4M985.5,380.4L1060.5,357.4M985.5,380.4L1004.5,415.4M985.5,380.4L1079.5,392.4M1004.5,415.4L1079.5,392.4M1004.5,415.4L1023.5,450.4M1004.5,415.4L1098.5,427.4M1023.5,450.4L1098.5,427.4M1023.5,450.4L1042.5,485.4M1023.5,450.4L1117.5,462.4M1042.5,485.4L1117.5,462.4M1042.5,485.4L1061.5,520.4M1042.5,485.4L1136.5,497.4M1061.5,520.4L1136.5,497.4M1061.5,520.4L1080.5,555.4M1061.5,520.4L1155.5,532.4M1080.5,555.4L1155.5,532.4M1080.5,555.4L1099.5,590.4M1080.5,555.4L1174.5,567.4M1099.5,590.4L1174.5,567.4M1099.5,590.4L1118.5,625.4M1099.5,590.4L1193.5,602.4M1118.5,625.4L1193.5,602.4M1118.5,625.4L1137.5,660.4M1118.5,625.4L1212.5,637.4M1137.5,660.4L1212.5,637.4M1137.5,660.4L1156.5,695.4M1137.5,660.4L1231.5,672.4M1156.5,695.4L1231.5,672.4M1156.5,695.4L1175.5,730.4M1156.5,695.4L1250.5,707.4M1175.5,730.4L1250.5,707.4M1175.5,730.4L1194.5,765.4M1175.5,730.4L1269.5,742.4M1194.5,765.4L1269.5,742.4M1194.5,765.4L1213.5,800.4M1194.5,765.4L1288.5,777.4M1213.5,800.4L1288.5,777.4M1213.5,800.4L1232.5,835.4M1213.5,800.4L1307.5,812.4M1232.5,835.4L1307.5,812.4M1232.5,835.4L1251.5,870.4M1232.5,835.4L1326.5,847.4M1251.5,870.4L1326.5,847.4M1251.5,870.4L1270.5,905.4M1251.5,870.4L1345.5,882.4M1270.5,905.4L1345.5,882.4M1270.5,905.4L1289.5,940.4M1270.5,905.4L1364.5,917.4M1289.5,940.4L1364.5,917.4M984.5,217.4L1059.5,194.4M984.5,217.4L1003.5,252.4M984.5,217.4L1078.5,229.4M1003.5,252.4L1078.5,229.4M1003.5,252.4L1022.5,287.4M1003.5,252.4L1097.5,264.4M1022.5,287.4L1097.5,264.4M1022.5,287.4L1041.5,322.4M1022.5,287.4L1116.5,299.4M1041.5,322.4L1116.5,299.4M1041.5,322.4L1060.5,357.4M1041.5,322.4L1135.5,334.4M1060.5,357.4L1135.5,334.4M1060.5,357.4L1079.5,392.4M1060.5,357.4L1154.5,369.4M1079.5,392.4L1154.5,369.4M1079.5,392.4L1098.5,427.4M1079.5,392.4L1173.5,404.4M1098.5,427.4L1173.5,404.4M1098.5,427.4L1117.5,462.4M1098.5,427.4L1192.5,439.4M1117.5,462.4L1192.5,439.4M1117.5,462.4L1136.5,497.4M1117.5,462.4L1211.5,474.4M1136.5,497.4L1211.5,474.4M1136.5,497.4L1155.5,532.4M1136.5,497.4L1230.5,509.4M1155.5,532.4L1230.5,509.4M1155.5,532.4L1174.5,567.4M1155.5,532.4L1249.5,544.4M1174.5,567.4L1249.5,544.4M1174.5,567.4L1193.5,602.4M1174.5,567.4L1268.5,579.4M1193.5,602.4L1268.5,579.4M1193.5,602.4L1212.5,637.4M1193.5,602.4L1287.5,614.4M1212.5,637.4L1287.5,614.4M1212.5,637.4L1231.5,672.4M1212.5,637.4L1306.5,649.4M1231.5,672.4L1306.5,649.4M1231.5,672.4L1250.5,707.4M1231.5,672.4L1325.5,684.4M1250.5,707.4L1325.5,684.4M1250.5,707.4L1269.5,742.4M1250.5,707.4L1344.5,719.4M1269.5,742.4L1344.5,719.4M1269.5,742.4L1288.5,777.4M1269.5,742.4L1363.5,754.4M1288.5,777.4L1363.5,754.4M1288.5,777.4L1307.5,812.4M1288.5,777.4L1382.5,789.4M1307.5,812.4L1382.5,789.4M1307.5,812.4L1326.5,847.4M1307.5,812.4L1401.5,824.4M1326.5,847.4L1401.5,824.4M1326.5,847.4L1345.5,882.4M1326.5,847.4L1420.5,859.4M1345.5,882.4L1420.5,859.4M1345.5,882.4L1364.5,917.4M1345.5,882.4L1439.5,894.4M1364.5,917.4L1439.5,894.4M1059.5,194.4L1134.5,171.4M1059.5,194.4L1078.5,229.4M1059.5,194.4L1153.5,206.4M1078.5,229.4L1153.5,206.4M1078.5,229.4L1097.5,264.4M1078.5,229.4L1172.5,241.4M1097.5,264.4L1172.5,241.4M1097.5,264.4L1116.5,299.4M1097.5,264.4L1191.5,276.4M1116.5,299.4L1191.5,276.4M1116.5,299.4L1135.5,334.4M1116.5,299.4L1210.5,311.4M1135.5,334.4L1210.5,311.4M1135.5,334.4L1154.5,369.4M1135.5,334.4L1229.5,346.4M1154.5,369.4L1229.5,346.4M1154.5,369.4L1173.5,404.4M1154.5,369.4L1248.5,381.4M1173.5,404.4L1248.5,381.4M1173.5,404.4L1192.5,439.4M1173.5,404.4L1267.5,416.4M1192.5,439.4L1267.5,416.4M1192.5,439.4L1211.5,474.4M1192.5,439.4L1286.5,451.4M1211.5,474.4L1286.5,451.4M1211.5,474.4L1230.5,509.4M1211.5,474.4L1305.5,486.4M1230.5,509.4L1305.5,486.4M1230.5,509.4L1249.5,544.4M1230.5,509.4L1324.5,521.4M1249.5,544.4L1324.5,521.4M1249.5,544.4L1268.5,579.4M1249.5,544.4L1343.5,556.4M1268.5,579.4L1343.5,556.4M1268.5,579.4L1287.5,614.4M1268.5,579.4L1362.5,591.4M1287.5,614.4L1362.5,591.4M1287.5,614.4L1306.5,649.4M1287.5,614.4L1381.5,626.4M1306.5,649.4L1381.5,626.4M1306.5,649.4L1325.5,684.4M1306.5,649.4L1400.5,661.4M1325.5,684.4L1400.5,661.4M1325.5,684.4L1344.5,719.4M1325.5,684.4L1419.5,696.4M1344.5,719.4L1419.5,696.4M1344.5,719.4L1363.5,754.4M1344.5,719.4L1438.5,731.4M1363.5,754.4L1438.5,731.4M1363.5,754.4L1382.5,789.4M1363.5,754.4L1457.5,766.4M1382.5,789.4L1457.5,766.4M1382.5,789.4L1401.5,824.4M1382.5,789.4L1476.5,801.4M1401.5,824.4L1476.5,801.4M1401.5,824.4L1420.5,859.4M1401.5,824.4L1495.5,836.4M1420.5,859.4L1495.5,836.4M1420.5,859.4L1439.5,894.4M1420.5,859.4L1514.5,871.4M1439.5,894.4L1514.5,871.4M1134.5,171.4L1209.5,148.4M1134.5,171.4L1153.5,206.4M1134.5,171.4L1228.5,183.4M1153.5,206.4L1228.5,183.4M1153.5,206.4L1172.5,241.4M1153.5,206.4L1247.5,218.4M1172.5,241.4L1247.5,218.4M1172.5,241.4L1191.5,276.4M1172.5,241.4L1266.5,253.4M1191.5,276.4L1266.5,253.4M1191.5,276.4L1210.5,311.4M1191.5,276.4L1285.5,288.4M1210.5,311.4L1285.5,288.4M1210.5,311.4L1229.5,346.4M1210.5,311.4L1304.5,323.4M1229.5,346.4L1304.5,323.4M1229.5,346.4L1248.5,381.4M1229.5,346.4L1323.5,358.4M1248.5,381.4L1323.5,358.4M1248.5,381.4L1267.5,416.4M1248.5,381.4L1342.5,393.4M1267.5,416.4L1342.5,393.4M1267.5,416.4L1286.5,451.4M1267.5,416.4L1361.5,428.4M1286.5,451.4L1361.5,428.4M1286.5,451.4L1305.5,486.4M1286.5,451.4L1380.5,463.4M1305.5,486.4L1380.5,463.4M1305.5,486.4L1324.5,521.4M1305.5,486.4L1399.5,498.4M1324.5,521.4L1399.5,498.4M1324.5,521.4L1343.5,556.4M1324.5,521.4L1418.5,533.4M1343.5,556.4L1418.5,533.4M1343.5,556.4L1362.5,591.4M1343.5,556.4L1437.5,568.4M1362.5,591.4L1437.5,568.4M1362.5,591.4L1381.5,626.4M1362.5,591.4L1456.5,603.4M1381.5,626.4L1456.5,603.4M1381.5,626.4L1400.5,661.4M1381.5,626.4L1475.5,638.4M1400.5,661.4L1475.5,638.4M1400.5,661.4L1419.5,696.4M1400.5,661.4L1494.5,673.4M1419.5,696.4L1494.5,673.4M1419.5,696.4L1438.5,731.4M1419.5,696.4L1513.5,708.4M1438.5,731.4L1513.5,708.4M1438.5,731.4L1457.5,766.4M1438.5,731.4L1532.5,743.4M1457.5,766.4L1532.5,743.4M1457.5,766.4L1476.5,801.4M1457.5,766.4L1551.5,778.4M1476.5,801.4L1551.5,778.4M1476.5,801.4L1495.5,836.4M1476.5,801.4L1570.5,813.4M1495.5,836.4L1570.5,813.4M1495.5,836.4L1514.5,871.4M1495.5,836.4L1589.5,848.4M1514.5,871.4L1589.5,848.4M1209.5,148.4L1284.5,125.4M1209.5,148.4L1228.5,183.4M1209.5,148.4L1303.5,160.4M1228.5,183.4L1303.5,160.4M1228.5,183.4L1247.5,218.4M1228.5,183.4L1322.5,195.4M1247.5,218.4L1322.5,195.4M1247.5,218.4L1266.5,253.4M1247.5,218.4L1341.5,230.4M1266.5,253.4L1341.5,230.4M1266.5,253.4L1285.5,288.4M1266.5,253.4L1360.5,265.4M1285.5,288.4L1360.5,265.4M1285.5,288.4L1304.5,323.4M1285.5,288.4L1379.5,300.4M1304.5,323.4L1379.5,300.4M1304.5,323.4L1323.5,358.4M1304.5,323.4L1398.5,335.4M1323.5,358.4L1398.5,335.4M1323.5,358.4L1342.5,393.4M1323.5,358.4L1417.5,370.4M1342.5,393.4L1417.5,370.4M1342.5,393.4L1361.5,428.4M1342.5,393.4L1436.5,405.4M1361.5,428.4L1436.5,405.4M1361.5,428.4L1380.5,463.4M1361.5,428.4L1455.5,440.4M1380.5,463.4L1455.5,440.4M1380.5,463.4L1399.5,498.4M1380.5,463.4L1474.5,475.4M1399.5,498.4L1474.5,475.4M1399.5,498.4L1418.5,533.4M1399.5,498.4L1493.5,510.4M1418.5,533.4L1493.5,510.4M1418.5,533.4L1437.5,568.4M1418.5,533.4L1512.5,545.4M1437.5,568.4L1512.5,545.4M1437.5,568.4L1456.5,603.4M1437.5,568.4L1531.5,580.4M1456.5,603.4L1531.5,580.4M1456.5,603.4L1475.5,638.4M1456.5,603.4L1550.5,615.4M1475.5,638.4L1550.5,615.4M1475.5,638.4L1494.5,673.4M1475.5,638.4L1569.5,650.4M1494.5,673.4L1569.5,650.4M1494.5,673.4L1513.5,708.4M1494.5,673.4L1588.5,685.4M1513.5,708.4L1588.5,685.4M1513.5,708.4L1532.5,743.4M1513.5,708.4L1607.5,720.4M1532.5,743.4L1607.5,720.4M1532.5,743.4L1551.5,778.4M1532.5,743.4L1626.5,755.4M1551.5,778.4L1626.5,755.4M1551.5,778.4L1570.5,813.4M1551.5,778.4L1645.5,790.4M1570.5,813.4L1645.5,790.4M1570.5,813.4L1589.5,848.4M1570.5,813.4L1664.5,825.4M1589.5,848.4L1664.5,825.4M1284.5,125.4L1359.5,102.4M1284.5,125.4L1303.5,160.4M1284.5,125.4L1378.5,137.4M1303.5,160.4L1378.5,137.4M1303.5,160.4L1322.5,195.4M1303.5,160.4L1397.5,172.4M1322.5,195.4L1397.5,172.4M1322.5,195.4L1341.5,230.4M1322.5,195.4L1416.5,207.4M1341.5,230.4L1416.5,207.4M1341.5,230.4L1360.5,265.4M1341.5,230.4L1435.5,242.4M1360.5,265.4L1435.5,242.4M1360.5,265.4L1379.5,300.4M1360.5,265.4L1454.5,277.4M1379.5,300.4L1454.5,277.4M1379.5,300.4L1398.5,335.4M1379.5,300.4L1473.5,312.4M1398.5,335.4L1473.5,312.4M1398.5,335.4L1417.5,370.4M1398.5,335.4L1492.5,347.4M1417.5,370.4L1492.5,347.4M1417.5,370.4L1436.5,405.4M1417.5,370.4L1511.5,382.4M1436.5,405.4L1511.5,382.4M1436.5,405.4L1455.5,440.4M1436.5,405.4L1530.5,417.4M1455.5,440.4L1530.5,417.4M1455.5,440.4L1474.5,475.4M1455.5,440.4L1549.5,452.4M1474.5,475.4L1549.5,452.4M1474.5,475.4L1493.5,510.4M1474.5,475.4L1568.5,487.4M1493.5,510.4L1568.5,487.4M1493.5,510.4L1512.5,545.4M1493.5,510.4L1587.5,522.4M1512.5,545.4L1587.5,522.4M1512.5,545.4L1531.5,580.4M1512.5,545.4L1606.5,557.4M1531.5,580.4L1606.5,557.4M1531.5,580.4L1550.5,615.4M1531.5,580.4L1625.5,592.4M1550.5,615.4L1625.5,592.4M1550.5,615.4L1569.5,650.4M1550.5,615.4L1644.5,627.4M1569.5,650.4L1644.5,627.4M1569.5,650.4L1588.5,685.4M1569.5,650.4L1663.5,662.4M1588.5,685.4L1663.5,662.4M1588.5,685.4L1607.5,720.4M1588.5,685.4L1682.5,697.4M1607.5,720.4L1682.5,697.4M1607.5,720.4L1626.5,755.4M1607.5,720.4L1701.5,732.4M1626.5,755.4L1701.5,732.4M1626.5,755.4L1645.5,790.4M1626.5,755.4L1720.5,767.4M1645.5,790.4L1720.5,767.4M1645.5,790.4L1664.5,825.4M1645.5,790.4L1739.5,802.4M1664.5,825.4L1739.5,802.4M1359.5,102.4L1434.5,79.4M1359.5,102.4L1378.5,137.4M1359.5,102.4L1453.5,114.4M1378.5,137.4L1453.5,114.4M1378.5,137.4L1397.5,172.4M1378.5,137.4L1472.5,149.4M1397.5,172.4L1472.5,149.4M1397.5,172.4L1416.5,207.4M1397.5,172.4L1491.5,184.4M1416.5,207.4L1491.5,184.4M1416.5,207.4L1435.5,242.4M1416.5,207.4L1510.5,219.4M1435.5,242.4L1510.5,219.4M1435.5,242.4L1454.5,277.4M1435.5,242.4L1529.5,254.4M1454.5,277.4L1529.5,254.4M1454.5,277.4L1473.5,312.4M1454.5,277.4L1548.5,289.4M1473.5,312.4L1548.5,289.4M1473.5,312.4L1492.5,347.4M1473.5,312.4L1567.5,324.4M1492.5,347.4L1567.5,324.4M1492.5,347.4L1511.5,382.4M1492.5,347.4L1586.5,359.4M1511.5,382.4L1586.5,359.4M1511.5,382.4L1530.5,417.4M1511.5,382.4L1605.5,394.4M1530.5,417.4L1605.5,394.4M1530.5,417.4L1549.5,452.4M1530.5,417.4L1624.5,429.4M1549.5,452.4L1624.5,429.4M1549.5,452.4L1568.5,487.4M1549.5,452.4L1643.5,464.4M1568.5,487.4L1643.5,464.4M1568.5,487.4L1587.5,522.4M1568.5,487.4L1662.5,499.4M1587.5,522.4L1662.5,499.4M1587.5,522.4L1606.5,557.4M1587.5,522.4L1681.5,534.4M1606.5,557.4L1681.5,534.4M1606.5,557.4L1625.5,592.4M1606.5,557.4L1700.5,569.4M1625.5,592.4L1700.5,569.4M1625.5,592.4L1644.5,627.4M1625.5,592.4L1719.5,604.4M1644.5,627.4L1719.5,604.4M1644.5,627.4L1663.5,662.4M1644.5,627.4L1738.5,639.4M1663.5,662.4L1738.5,639.4M1663.5,662.4L1682.5,697.4M1663.5,662.4L1757.5,674.4M1682.5,697.4L1757.5,674.4M1682.5,697.4L1701.5,732.4M1682.5,697.4L1776.5,709.4M1701.5,732.4L1776.5,709.4M1701.5,732.4L1720.5,767.4M1701.5,732.4L1795.5,744.4M1720.5,767.4L1795.5,744.4M1720.5,767.4L1739.5,802.4M1720.5,767.4L1814.5,779.4M1739.5,802.4L1814.5,779.4M1434.5,79.4L1509.5,56.4M1434.5,79.4L1453.5,114.4M1434.5,79.4L1528.5,91.4M1453.5,114.4L1528.5,91.4M1453.5,114.4L1472.5,149.4M1453.5,114.4L1547.5,126.4M1472.5,149.4L1547.5,126.4M1472.5,149.4L1491.5,184.4M1472.5,149.4L1566.5,161.4M1491.5,184.4L1566.5,161.4M1491.5,184.4L1510.5,219.4M1491.5,184.4L1585.5,196.4M1510.5,219.4L1585.5,196.4M1510.5,219.4L1529.5,254.4M1510.5,219.4L1604.5,231.4M1529.5,254.4L1604.5,231.4M1529.5,254.4L1548.5,289.4M1529.5,254.4L1623.5,266.4M1548.5,289.4L1623.5,266.4M1548.5,289.4L1567.5,324.4M1548.5,289.4L1642.5,301.4M1567.5,324.4L1642.5,301.4M1567.5,324.4L1586.5,359.4M1567.5,324.4L1661.5,336.4M1586.5,359.4L1661.5,336.4M1586.5,359.4L1605.5,394.4M1586.5,359.4L1680.5,371.4M1605.5,394.4L1680.5,371.4M1605.5,394.4L1624.5,429.4M1605.5,394.4L1699.5,406.4M1624.5,429.4L1699.5,406.4M1624.5,429.4L1643.5,464.4M1624.5,429.4L1718.5,441.4M1643.5,464.4L1718.5,441.4M1643.5,464.4L1662.5,499.4M1643.5,464.4L1737.5,476.4M1662.5,499.4L1737.5,476.4M1662.5,499.4L1681.5,534.4M1662.5,499.4L1756.5,511.4M1681.5,534.4L1756.5,511.4M1681.5,534.4L1700.5,569.4M1681.5,534.4L1775.5,546.4M1700.5,569.4L1775.5,546.4M1700.5,569.4L1719.5,604.4M1700.5,569.4L1794.5,581.4M1719.5,604.4L1794.5,581.4M1719.5,604.4L1738.5,639.4M1719.5,604.4L1813.5,616.4M1738.5,639.4L1813.5,616.4M1738.5,639.4L1757.5,674.4M1738.5,639.4L1832.5,651.4M1757.5,674.4L1832.5,651.4M1757.5,674.4L1776.5,709.4M1757.5,674.4L1851.5,686.4M1776.5,709.4L1851.5,686.4M1776.5,709.4L1795.5,744.4M1776.5,709.4L1870.5,721.4M1795.5,744.4L1870.5,721.4M1795.5,744.4L1814.5,779.4M1795.5,744.4L1889.5,756.4M1814.5,779.4L1889.5,756.4M1509.5,56.4L1584.5,33.4M1509.5,56.4L1528.5,91.4M1509.5,56.4L1603.5,68.4M1528.5,91.4L1603.5,68.4M1528.5,91.4L1547.5,126.4M1528.5,91.4L1622.5,103.4M1547.5,126.4L1622.5,103.4M1547.5,126.4L1566.5,161.4M1547.5,126.4L1641.5,138.4M1566.5,161.4L1641.5,138.4M1566.5,161.4L1585.5,196.4M1566.5,161.4L1660.5,173.4M1585.5,196.4L1660.5,173.4M1585.5,196.4L1604.5,231.4M1585.5,196.4L1679.5,208.4M1604.5,231.4L1679.5,208.4M1604.5,231.4L1623.5,266.4M1604.5,231.4L1698.5,243.4M1623.5,266.4L1698.5,243.4M1623.5,266.4L1642.5,301.4M1623.5,266.4L1717.5,278.4M1642.5,301.4L1717.5,278.4M1642.5,301.4L1661.5,336.4M1642.5,301.4L1736.5,313.4M1661.5,336.4L1736.5,313.4M1661.5,336.4L1680.5,371.4M1661.5,336.4L1755.5,348.4M1680.5,371.4L1755.5,348.4M1680.5,371.4L1699.5,406.4M1680.5,371.4L1774.5,383.4M1699.5,406.4L1774.5,383.4M1699.5,406.4L1718.5,441.4M1699.5,406.4L1793.5,418.4M1718.5,441.4L1793.5,418.4M1718.5,441.4L1737.5,476.4M1718.5,441.4L1812.5,453.4M1737.5,476.4L1812.5,453.4M1737.5,476.4L1756.5,511.4M1737.5,476.4L1831.5,488.4M1756.5,511.4L1831.5,488.4M1756.5,511.4L1775.5,546.4M1756.5,511.4L1850.5,523.4M1775.5,546.4L1850.5,523.4M1775.5,546.4L1794.5,581.4M1775.5,546.4L1869.5,558.4M1794.5,581.4L1869.5,558.4M1794.5,581.4L1813.5,616.4M1794.5,581.4L1888.5,593.4M1813.5,616.4L1888.5,593.4M1813.5,616.4L1832.5,651.4M1813.5,616.4L1907.5,628.4M1832.5,651.4L1907.5,628.4M1832.5,651.4L1851.5,686.4M1832.5,651.4L1926.5,663.4M1851.5,686.4L1926.5,663.4M1851.5,686.4L1870.5,721.4M1851.5,686.4L1945.5,698.4M1870.5,721.4L1945.5,698.4M1870.5,721.4L1889.5,756.4M1870.5,721.4L1964.5,733.4M1889.5,756.4L1964.5,733.4M1584.5,33.4L1659.5,10.4M1584.5,33.4L1603.5,68.4M1584.5,33.4L1678.5,45.4M1603.5,68.4L1678.5,45.4M1603.5,68.4L1622.5,103.4M1603.5,68.4L1697.5,80.4M1622.5,103.4L1697.5,80.4M1622.5,103.4L1641.5,138.4M1622.5,103.4L1716.5,115.4M1641.5,138.4L1716.5,115.4M1641.5,138.4L1660.5,173.4M1641.5,138.4L1735.5,150.4M1660.5,173.4L1735.5,150.4M1660.5,173.4L1679.5,208.4M1660.5,173.4L1754.5,185.4M1679.5,208.4L1754.5,185.4M1679.5,208.4L1698.5,243.4M1679.5,208.4L1773.5,220.4M1698.5,243.4L1773.5,220.4M1698.5,243.4L1717.5,278.4M1698.5,243.4L1792.5,255.4M1717.5,278.4L1792.5,255.4M1717.5,278.4L1736.5,313.4M1717.5,278.4L1811.5,290.4M1736.5,313.4L1811.5,290.4M1736.5,313.4L1755.5,348.4M1736.5,313.4L1830.5,325.4M1755.5,348.4L1830.5,325.4M1755.5,348.4L1774.5,383.4M1755.5,348.4L1849.5,360.4M1774.5,383.4L1849.5,360.4M1774.5,383.4L1793.5,418.4M1774.5,383.4L1868.5,395.4M1793.5,418.4L1868.5,395.4M1793.5,418.4L1812.5,453.4M1793.5,418.4L1887.5,430.4M1812.5,453.4L1887.5,430.4M1812.5,453.4L1831.5,488.4M1812.5,453.4L1906.5,465.4M1831.5,488.4L1906.5,465.4M1831.5,488.4L1850.5,523.4M1831.5,488.4L1925.5,500.4M1850.5,523.4L1925.5,500.4M1850.5,523.4L1869.5,558.4M1850.5,523.4L1944.5,535.4M1869.5,558.4L1944.5,535.4M1869.5,558.4L1888.5,593.4M1869.5,558.4L1963.5,570.4M1888.5,593.4L1963.5,570.4M1888.5,593.4L1907.5,628.4M1888.5,593.4L1982.5,605.4M1907.5,628.4L1982.5,605.4M1907.5,628.4L1926.5,663.4M1907.5,628.4L2001.5,640.4M1926.5,663.4L2001.5,640.4M1926.5,663.4L1945.5,698.4M1926.5,663.4L2020.5,675.4M1945.5,698.4L2020.5,675.4M1945.5,698.4L1964.5,733.4M1945.5,698.4L2039.5,710.4M1964.5,733.4L2039.5,710.4M1659.5,10.4L1734.5,-12.6M1659.5,10.4L1678.5,45.4M1659.5,10.4L1753.5,22.4M1678.5,45.4L1753.5,22.4M1678.5,45.4L1697.5,80.4M1678.5,45.4L1772.5,57.4M1697.5,80.4L1772.5,57.4M1697.5,80.4L1716.5,115.4M1697.5,80.4L1791.5,92.4M1716.5,115.4L1791.5,92.4M1716.5,115.4L1735.5,150.4M1716.5,115.4L1810.5,127.4M1735.5,150.4L1810.5,127.4M1735.5,150.4L1754.5,185.4M1735.5,150.4L1829.5,162.4M1754.5,185.4L1829.5,162.4M1754.5,185.4L1773.5,220.4M1754.5,185.4L1848.5,197.4M1773.5,220.4L1848.5,197.4M1773.5,220.4L1792.5,255.4M1773.5,220.4L1867.5,232.4M1792.5,255.4L1867.5,232.4M1792.5,255.4L1811.5,290.4M1792.5,255.4L1886.5,267.4M1811.5,290.4L1886.5,267.4M1811.5,290.4L1830.5,325.4M1811.5,290.4L1905.5,302.4M1830.5,325.4L1905.5,302.4M1830.5,325.4L1849.5,360.4M1830.5,325.4L1924.5,337.4M1849.5,360.4L1924.5,337.4M1849.5,360.4L1868.5,395.4M1849.5,360.4L1943.5,372.4M1868.5,395.4L1943.5,372.4M1868.5,395.4L1887.5,430.4M1868.5,395.4L1962.5,407.4M1887.5,430.4L1962.5,407.4M1887.5,430.4L1906.5,465.4M1887.5,430.4L1981.5,442.4M1906.5,465.4L1981.5,442.4M1906.5,465.4L1925.5,500.4M1906.5,465.4L2000.5,477.4M1925.5,500.4L2000.5,477.4M1925.5,500.4L1944.5,535.4M1925.5,500.4L2019.5,512.4M1944.5,535.4L2019.5,512.4M1944.5,535.4L1963.5,570.4M1944.5,535.4L2038.5,547.4M1963.5,570.4L2038.5,547.4M1963.5,570.4L1982.5,605.4M1963.5,570.4L2057.5,582.4M1982.5,605.4L2057.5,582.4M1982.5,605.4L2001.5,640.4M1982.5,605.4L2076.5,617.4M2001.5,640.4L2076.5,617.4M2001.5,640.4L2020.5,675.4M2001.5,640.4L2095.5,652.4M2020.5,675.4L2095.5,652.4M2020.5,675.4L2039.5,710.4M2020.5,675.4L2114.5,687.4M2039.5,710.4L2114.5,687.4M1734.5,-12.6L1809.5,-35.6M1734.5,-12.6L1753.5,22.4M1734.5,-12.6L1828.5,-0.6M1753.5,22.4L1828.5,-0.6M1753.5,22.4L1772.5,57.4M1753.5,22.4L1847.5,34.4M1772.5,57.4L1847.5,34.4M1772.5,57.4L1791.5,92.4M1772.5,57.4L1866.5,69.4M1791.5,92.4L1866.5,69.4M1791.5,92.4L1810.5,127.4M1791.5,92.4L1885.5,104.4M1810.5,127.4L1885.5,104.4M1810.5,127.4L1829.5,162.4M1810.5,127.4L1904.5,139.4M1829.5,162.4L1904.5,139.4M1829.5,162.4L1848.5,197.4M1829.5,162.4L1923.5,174.4M1848.5,197.4L1923.5,174.4M1848.5,197.4L1867.5,232.4M1848.5,197.4L1942.5,209.4M1867.5,232.4L1942.5,209.4M1867.5,232.4L1886.5,267.4M1867.5,232.4L1961.5,244.4M1886.5,267.4L1961.5,244.4M1886.5,267.4L1905.5,302.4M1886.5,267.4L1980.5,279.4M1905.5,302.4L1980.5,279.4M1905.5,302.4L1924.5,337.4M1905.5,302.4L1999.5,314.4M1924.5,337.4L1999.5,314.4M1924.5,337.4L1943.5,372.4M1924.5,337.4L2018.5,349.4M1943.5,372.4L2018.5,349.4M1943.5,372.4L1962.5,407.4M1943.5,372.4L2037.5,384.4M1962.5,407.4L2037.5,384.4M1962.5,407.4L1981.5,442.4M1962.5,407.4L2056.5,419.4M1981.5,442.4L2056.5,419.4M1981.5,442.4L2000.5,477.4M1981.5,442.4L2075.5,454.4M2000.5,477.4L2075.5,454.4M2000.5,477.4L2019.5,512.4M2000.5,477.4L2094.5,489.4M2019.5,512.4L2094.5,489.4M2019.5,512.4L2038.5,547.4M2019.5,512.4L2113.5,524.4M2038.5,547.4L2113.5,524.4M2038.5,547.4L2057.5,582.4M2038.5,547.4L2132.5,559.4M2057.5,582.4L2132.5,559.4M2057.5,582.4L2076.5,617.4M2057.5,582.4L2151.5,594.4M2076.5,617.4L2151.5,594.4M2076.5,617.4L2095.5,652.4M2076.5,617.4L2170.5,629.4M2095.5,652.4L2170.5,629.4M2095.5,652.4L2114.5,687.4M2095.5,652.4L2189.5,664.4M2114.5,687.4L2189.5,664.4M1809.5,-35.6L1884.5,-58.6M1809.5,-35.6L1828.5,-0.6M1809.5,-35.6L1903.5,-23.6M1828.5,-0.6L1903.5,-23.6M1828.5,-0.6L1847.5,34.4M1828.5,-0.6L1922.5,11.4M1847.5,34.4L1922.5,11.4M1847.5,34.4L1866.5,69.4M1847.5,34.4L1941.5,46.4M1866.5,69.4L1941.5,46.4M1866.5,69.4L1885.5,104.4M1866.5,69.4L1960.5,81.4M1885.5,104.4L1960.5,81.4M1885.5,104.4L1904.5,139.4M1885.5,104.4L1979.5,116.4M1904.5,139.4L1979.5,116.4M1904.5,139.4L1923.5,174.4M1904.5,139.4L1998.5,151.4M1923.5,174.4L1998.5,151.4M1923.5,174.4L1942.5,209.4M1923.5,174.4L2017.5,186.4M1942.5,209.4L2017.5,186.4M1942.5,209.4L1961.5,244.4M1942.5,209.4L2036.5,221.4M1961.5,244.4L2036.5,221.4M1961.5,244.4L1980.5,279.4M1961.5,244.4L2055.5,256.4M1980.5,279.4L2055.5,256.4M1980.5,279.4L1999.5,314.4M1980.5,279.4L2074.5,291.4M1999.5,314.4L2074.5,291.4M1999.5,314.4L2018.5,349.4M1999.5,314.4L2093.5,326.4M2018.5,349.4L2093.5,326.4M2018.5,349.4L2037.5,384.4M2018.5,349.4L2112.5,361.4M2037.5,384.4L2112.5,361.4M2037.5,384.4L2056.5,419.4M2037.5,384.4L2131.5,396.4M2056.5,419.4L2131.5,396.4M2056.5,419.4L2075.5,454.4M2056.5,419.4L2150.5,431.4M2075.5,454.4L2150.5,431.4M2075.5,454.4L2094.5,489.4M2075.5,454.4L2169.5,466.4M2094.5,489.4L2169.5,466.4M2094.5,489.4L2113.5,524.4M2094.5,489.4L2188.5,501.4M2113.5,524.4L2188.5,501.4M2113.5,524.4L2132.5,559.4M2113.5,524.4L2207.5,536.4M2132.5,559.4L2207.5,536.4M2132.5,559.4L2151.5,594.4M2132.5,559.4L2226.5,571.4M2151.5,594.4L2226.5,571.4M2151.5,594.4L2170.5,629.4M2151.5,594.4L2245.5,606.4M2170.5,629.4L2245.5,606.4M2170.5,629.4L2189.5,664.4M2170.5,629.4L2264.5,641.4M2189.5,664.4L2264.5,641.4M1884.5,-58.6L1903.5,-23.6M1903.5,-23.6L1922.5,11.4M1922.5,11.4L1941.5,46.4M1941.5,46.4L1960.5,81.4M1960.5,81.4L1979.5,116.4M1979.5,116.4L1998.5,151.4M1998.5,151.4L2017.5,186.4M2017.5,186.4L2036.5,221.4M2036.5,221.4L2055.5,256.4M2055.5,256.4L2074.5,291.4M2074.5,291.4L2093.5,326.4M2093.5,326.4L2112.5,361.4M2112.5,361.4L2131.5,396.4M2131.5,396.4L2150.5,431.4M2150.5,431.4L2169.5,466.4M2169.5,466.4L2188.5,501.4M2188.5,501.4L2207.5,536.4M2207.5,536.4L2226.5,571.4M2226.5,571.4L2245.5,606.4M2245.5,606.4L2264.5,641.4'/>
<g stroke='#18f018' stroke-width='1.2' fill='none'>
<polyline points='377,137 644,55'/><polyline points='377,175 665,289 1431,55'/><polyline points='665,289 655,978'/><polyline points='657,808 1660,502'/><polyline points='377,940 475,979'/>
</g>
<path d='M813,392 L808,870 A51,16 0 0 0 910,870 L915,392 Z' fill='url(#cyl)'/>
<path clip-path='url(#cCyl)' d='M813.2,392L808.1,880M814.8,392L809.7,880M817.8,392L812.7,880M822.3,392L817.2,880M828.1,392L823.0,880M835.0,392L829.9,880M842.7,392L837.6,880M851.2,392L846.1,880M860.0,392L854.9,880M869.0,392L863.9,880M877.8,392L872.7,880M886.3,392L881.2,880M894.0,392L888.9,880M900.9,392L895.8,880M906.7,392L901.6,880M911.2,392L906.1,880M914.2,392L909.1,880M915.8,392L910.7,880M815.7,157.0L817.2,161.7L820.2,166.4L824.6,171.1L830.3,175.8L837.2,180.5L844.9,185.2L853.3,189.9L862.1,194.6L871.0,199.3L879.8,204.0L888.2,208.7L895.9,213.4L902.7,218.1L908.5,222.8L912.9,227.5L915.9,232.2L917.4,236.9M815.6,166.4L817.1,171.1L820.1,175.8L824.5,180.5L830.2,185.2L837.1,189.9L844.8,194.6L853.2,199.3L862.0,204.0L870.9,208.7L879.7,213.4L888.1,218.1L895.8,222.8L902.6,227.5L908.4,232.2L912.8,236.9L915.8,241.6L917.3,246.3M815.5,175.8L817.0,180.5L820.0,185.2L824.4,189.9L830.1,194.6L837.0,199.3L844.7,204.0L853.1,208.7L861.9,213.4L870.8,218.1L879.6,222.8L888.0,227.5L895.7,232.2L902.5,236.9L908.3,241.6L912.7,246.3L915.7,251.0L917.2,255.7M815.4,185.2L816.9,189.9L819.9,194.6L824.3,199.3L830.1,204.0L836.9,208.7L844.6,213.4L853.0,218.1L861.8,222.8L870.7,227.5L879.5,232.2L887.9,236.9L895.6,241.6L902.4,246.3L908.2,251.0L912.6,255.7L915.6,260.4L917.1,265.1M815.3,194.6L816.8,199.3L819.8,204.0L824.2,208.7L830.0,213.4L836.8,218.1L844.5,222.8L852.9,227.5L861.7,232.2L870.6,236.9L879.4,241.6L887.8,246.3L895.5,251.0L902.3,255.7L908.1,260.4L912.5,265.1L915.5,269.8L917.0,274.5M815.2,204.0L816.7,208.7L819.7,213.4L824.1,218.1L829.9,222.8L836.7,227.5L844.4,232.2L852.8,236.9L861.6,241.6L870.5,246.3L879.3,251.0L887.7,255.7L895.4,260.4L902.2,265.1L908.0,269.8L912.4,274.5L915.4,279.2L916.9,283.9M815.1,213.4L816.6,218.1L819.6,222.8L824.0,227.5L829.8,232.2L836.6,236.9L844.3,241.6L852.7,246.3L861.5,251.0L870.4,255.7L879.2,260.4L887.6,265.1L895.3,269.8L902.1,274.5L907.9,279.2L912.3,283.9L915.3,288.6L916.8,293.3M815.0,222.8L816.5,227.5L819.5,232.2L823.9,236.9L829.7,241.6L836.5,246.3L844.2,251.0L852.6,255.7L861.4,260.4L870.3,265.1L879.1,269.8L887.5,274.5L895.2,279.2L902.0,283.9L907.8,288.6L912.2,293.3L915.2,298.0L916.7,302.7M814.9,232.2L816.4,236.9L819.4,241.6L823.8,246.3L829.6,251.0L836.4,255.7L844.1,260.4L852.5,265.1L861.3,269.8L870.2,274.5L879.0,279.2L887.4,283.9L895.1,288.6L901.9,293.3L907.7,298.0L912.1,302.7L915.1,307.4L916.6,312.1M814.8,241.6L816.3,246.3L819.3,251.0L823.7,255.7L829.5,260.4L836.3,265.1L844.0,269.8L852.4,274.5L861.2,279.2L870.1,283.9L878.9,288.6L887.3,293.3L895.0,298.0L901.9,302.7L907.6,307.4L912.0,312.1L915.0,316.8L916.5,321.5M814.7,251.0L816.2,255.7L819.2,260.4L823.6,265.1L829.4,269.8L836.2,274.5L843.9,279.2L852.3,283.9L861.1,288.6L870.0,293.3L878.8,298.0L887.2,302.7L894.9,307.4L901.8,312.1L907.5,316.8L911.9,321.5L914.9,326.2L916.4,330.9M814.6,260.4L816.1,265.1L819.1,269.8L823.5,274.5L829.3,279.2L836.1,283.9L843.8,288.6L852.2,293.3L861.0,298.0L869.9,302.7L878.7,307.4L887.1,312.1L894.8,316.8L901.7,321.5L907.4,326.2L911.8,330.9L914.8,335.6L916.3,340.3M814.5,269.8L816.0,274.5L819.0,279.2L823.4,283.9L829.2,288.6L836.0,293.3L843.7,298.0L852.1,302.7L860.9,307.4L869.8,312.1L878.6,316.8L887.0,321.5L894.7,326.2L901.6,330.9L907.3,335.6L911.7,340.3L914.7,345.0L916.2,349.7M814.4,279.2L815.9,283.9L818.9,288.6L823.3,293.3L829.1,298.0L835.9,302.7L843.6,307.4L852.0,312.1L860.8,316.8L869.7,321.5L878.5,326.2L886.9,330.9L894.6,335.6L901.5,340.3L907.2,345.0L911.6,349.7L914.6,354.4L916.1,359.1M814.3,288.6L815.8,293.3L818.8,298.0L823.2,302.7L829.0,307.4L835.8,312.1L843.5,316.8L851.9,321.5L860.7,326.2L869.6,330.9L878.4,335.6L886.8,340.3L894.5,345.0L901.4,349.7L907.1,354.4L911.5,359.1L914.5,363.8L916.0,368.5M814.2,298.0L815.7,302.7L818.7,307.4L823.1,312.1L828.9,316.8L835.7,321.5L843.4,326.2L851.8,330.9L860.6,335.6L869.5,340.3L878.3,345.0L886.7,349.7L894.4,354.4L901.3,359.1L907.0,363.8L911.4,368.5L914.4,373.2L916.0,377.9M814.1,307.4L815.6,312.1L818.6,316.8L823.1,321.5L828.8,326.2L835.6,330.9L843.3,335.6L851.7,340.3L860.5,345.0L869.4,349.7L878.2,354.4L886.6,359.1L894.3,363.8L901.2,368.5L906.9,373.2L911.3,377.9L914.3,382.6L915.9,387.3M814.0,316.8L815.5,321.5L818.5,326.2L823.0,330.9L828.7,335.6L835.5,340.3L843.2,345.0L851.6,349.7L860.4,354.4L869.3,359.1L878.1,363.8L886.5,368.5L894.2,373.2L901.1,377.9L906.8,382.6L911.2,387.3L914.2,392.0L915.8,396.7M813.9,326.2L815.4,330.9L818.4,335.6L822.9,340.3L828.6,345.0L835.4,349.7L843.1,354.4L851.5,359.1L860.3,363.8L869.2,368.5L878.0,373.2L886.4,377.9L894.1,382.6L901.0,387.3L906.7,392.0L911.1,396.7L914.1,401.4L915.7,406.1M813.8,335.6L815.3,340.3L818.3,345.0L822.8,349.7L828.5,354.4L835.3,359.1L843.0,363.8L851.4,368.5L860.2,373.2L869.1,377.9L877.9,382.6L886.3,387.3L894.0,392.0L900.9,396.7L906.6,401.4L911.0,406.1L914.0,410.8L915.6,415.5M813.7,345.0L815.2,349.7L818.2,354.4L822.7,359.1L828.4,363.8L835.2,368.5L842.9,373.2L851.3,377.9L860.1,382.6L869.0,387.3L877.8,392.0L886.2,396.7L893.9,401.4L900.8,406.1L906.5,410.8L910.9,415.5L914.0,420.2L915.5,424.9M813.6,354.4L815.1,359.1L818.1,363.8L822.6,368.5L828.3,373.2L835.1,377.9L842.8,382.6L851.2,387.3L860.0,392.0L868.9,396.7L877.7,401.4L886.1,406.1L893.8,410.8L900.7,415.5L906.4,420.2L910.8,424.9L913.9,429.6L915.4,434.3M813.5,363.8L815.0,368.5L818.0,373.2L822.5,377.9L828.2,382.6L835.0,387.3L842.7,392.0L851.1,396.7L859.9,401.4L868.8,406.1L877.6,410.8L886.0,415.5L893.7,420.2L900.6,424.9L906.3,429.6L910.7,434.3L913.8,439.0L915.3,443.7M813.4,373.2L814.9,377.9L817.9,382.6L822.4,387.3L828.1,392.0L834.9,396.7L842.6,401.4L851.0,406.1L859.8,410.8L868.7,415.5L877.5,420.2L885.9,424.9L893.6,429.6L900.5,434.3L906.2,439.0L910.6,443.7L913.7,448.4L915.2,453.1M813.3,382.6L814.8,387.3L817.8,392.0L822.3,396.7L828.0,401.4L834.8,406.1L842.5,410.8L850.9,415.5L859.7,420.2L868.6,424.9L877.4,429.6L885.8,434.3L893.5,439.0L900.4,443.7L906.1,448.4L910.5,453.1L913.6,457.8L915.1,462.5M813.2,392.0L814.7,396.7L817.7,401.4L822.2,406.1L827.9,410.8L834.7,415.5L842.4,420.2L850.8,424.9L859.6,429.6L868.5,434.3L877.3,439.0L885.7,443.7L893.4,448.4L900.3,453.1L906.0,457.8L910.4,462.5L913.5,467.2L915.0,471.9M813.1,401.4L814.6,406.1L817.6,410.8L822.1,415.5L827.8,420.2L834.6,424.9L842.3,429.6L850.7,434.3L859.5,439.0L868.4,443.7L877.2,448.4L885.6,453.1L893.4,457.8L900.2,462.5L905.9,467.2L910.3,471.9L913.4,476.6L914.9,481.3M813.0,410.8L814.5,415.5L817.5,420.2L822.0,424.9L827.7,429.6L834.5,434.3L842.2,439.0L850.6,443.7L859.4,448.4L868.3,453.1L877.1,457.8L885.5,462.5L893.3,467.2L900.1,471.9L905.8,476.6L910.2,481.3L913.3,486.0L914.8,490.7M812.9,420.2L814.4,424.9L817.4,429.6L821.9,434.3L827.6,439.0L834.4,443.7L842.1,448.4L850.5,453.1L859.3,457.8L868.3,462.5L877.0,467.2L885.4,471.9L893.2,476.6L900.0,481.3L905.7,486.0L910.1,490.7L913.2,495.4L914.7,500.1M812.8,429.6L814.3,434.3L817.3,439.0L821.8,443.7L827.5,448.4L834.3,453.1L842.0,457.8L850.4,462.5L859.2,467.2L868.2,471.9L876.9,476.6L885.3,481.3L893.1,486.0L899.9,490.7L905.6,495.4L910.0,500.1L913.1,504.8L914.6,509.5M812.7,439.0L814.2,443.7L817.2,448.4L821.7,453.1L827.4,457.8L834.2,462.5L841.9,467.2L850.3,471.9L859.1,476.6L868.1,481.3L876.8,486.0L885.2,490.7L893.0,495.4L899.8,500.1L905.5,504.8L909.9,509.5L913.0,514.2L914.5,518.9M812.6,448.4L814.1,453.1L817.1,457.8L821.6,462.5L827.3,467.2L834.1,471.9L841.9,476.6L850.2,481.3L859.0,486.0L868.0,490.7L876.7,495.4L885.1,500.1L892.9,504.8L899.7,509.5L905.4,514.2L909.8,518.9L912.9,523.6L914.4,528.3M812.5,457.8L814.0,462.5L817.0,467.2L821.5,471.9L827.2,476.6L834.0,481.3L841.8,486.0L850.1,490.7L858.9,495.4L867.9,500.1L876.6,504.8L885.0,509.5L892.8,514.2L899.6,518.9L905.3,523.6L909.7,528.3L912.8,533.0L914.3,537.7M812.4,467.2L813.9,471.9L816.9,476.6L821.4,481.3L827.1,486.0L833.9,490.7L841.7,495.4L850.0,500.1L858.8,504.8L867.8,509.5L876.6,514.2L884.9,518.9L892.7,523.6L899.5,528.3L905.2,533.0L909.7,537.7L912.7,542.4L914.2,547.1M812.3,476.6L813.8,481.3L816.8,486.0L821.3,490.7L827.0,495.4L833.8,500.1L841.6,504.8L849.9,509.5L858.7,514.2L867.7,518.9L876.5,523.6L884.8,528.3L892.6,533.0L899.4,537.7L905.1,542.4L909.6,547.1L912.6,551.8L914.1,556.5M812.2,486.0L813.7,490.7L816.7,495.4L821.2,500.1L826.9,504.8L833.7,509.5L841.5,514.2L849.8,518.9L858.6,523.6L867.6,528.3L876.4,533.0L884.7,537.7L892.5,542.4L899.3,547.1L905.0,551.8L909.5,556.5L912.5,561.2L914.0,565.9M812.1,495.4L813.6,500.1L816.6,504.8L821.1,509.5L826.8,514.2L833.6,518.9L841.4,523.6L849.7,528.3L858.5,533.0L867.5,537.7L876.3,542.4L884.6,547.1L892.4,551.8L899.2,556.5L904.9,561.2L909.4,565.9L912.4,570.6L913.9,575.3M812.0,504.8L813.5,509.5L816.5,514.2L821.0,518.9L826.7,523.6L833.5,528.3L841.3,533.0L849.6,537.7L858.4,542.4L867.4,547.1L876.2,551.8L884.5,556.5L892.3,561.2L899.1,565.9L904.8,570.6L909.3,575.3L912.3,580.0L913.8,584.7M811.9,514.2L813.4,518.9L816.4,523.6L820.9,528.3L826.6,533.0L833.4,537.7L841.2,542.4L849.5,547.1L858.3,551.8L867.3,556.5L876.1,561.2L884.4,565.9L892.2,570.6L899.0,575.3L904.7,580.0L909.2,584.7L912.2,589.4L913.7,594.1M811.8,523.6L813.3,528.3L816.4,533.0L820.8,537.7L826.5,542.4L833.3,547.1L841.1,551.8L849.5,556.5L858.2,561.2L867.2,565.9L876.0,570.6L884.3,575.3L892.1,580.0L898.9,584.7L904.6,589.4L909.1,594.1L912.1,598.8L913.6,603.5M811.7,533.0L813.2,537.7L816.3,542.4L820.7,547.1L826.4,551.8L833.2,556.5L841.0,561.2L849.4,565.9L858.1,570.6L867.1,575.3L875.9,580.0L884.2,584.7L892.0,589.4L898.8,594.1L904.5,598.8L909.0,603.5L912.0,608.2L913.5,612.9M811.6,542.4L813.1,547.1L816.2,551.8L820.6,556.5L826.3,561.2L833.1,565.9L840.9,570.6L849.3,575.3L858.0,580.0L867.0,584.7L875.8,589.4L884.2,594.1L891.9,598.8L898.7,603.5L904.4,608.2L908.9,612.9L911.9,617.6L913.4,622.3M811.5,551.8L813.0,556.5L816.1,561.2L820.5,565.9L826.2,570.6L833.0,575.3L840.8,580.0L849.2,584.7L857.9,589.4L866.9,594.1L875.7,598.8L884.1,603.5L891.8,608.2L898.6,612.9L904.3,617.6L908.8,622.3L911.8,627.0L913.3,631.7M811.4,561.2L812.9,565.9L816.0,570.6L820.4,575.3L826.1,580.0L832.9,584.7L840.7,589.4L849.1,594.1L857.8,598.8L866.8,603.5L875.6,608.2L884.0,612.9L891.7,617.6L898.5,622.3L904.2,627.0L908.7,631.7L911.7,636.4L913.2,641.1M811.3,570.6L812.8,575.3L815.9,580.0L820.3,584.7L826.0,589.4L832.8,594.1L840.6,598.8L849.0,603.5L857.7,608.2L866.7,612.9L875.5,617.6L883.9,622.3L891.6,627.0L898.4,631.7L904.1,636.4L908.6,641.1L911.6,645.8L913.1,650.5M811.2,580.0L812.7,584.7L815.8,589.4L820.2,594.1L825.9,598.8L832.7,603.5L840.5,608.2L848.9,612.9L857.7,617.6L866.6,622.3L875.4,627.0L883.8,631.7L891.5,636.4L898.3,641.1L904.0,645.8L908.5,650.5L911.5,655.2L913.0,659.9M811.1,589.4L812.6,594.1L815.7,598.8L820.1,603.5L825.8,608.2L832.7,612.9L840.4,617.6L848.8,622.3L857.6,627.0L866.5,631.7L875.3,636.4L883.7,641.1L891.4,645.8L898.2,650.5L903.9,655.2L908.4,659.9L911.4,664.6L912.9,669.3M811.0,598.8L812.5,603.5L815.6,608.2L820.0,612.9L825.7,617.6L832.6,622.3L840.3,627.0L848.7,631.7L857.5,636.4L866.4,641.1L875.2,645.8L883.6,650.5L891.3,655.2L898.1,659.9L903.8,664.6L908.3,669.3L911.3,674.0L912.8,678.7M810.9,608.2L812.4,612.9L815.5,617.6L819.9,622.3L825.6,627.0L832.5,631.7L840.2,636.4L848.6,641.1L857.4,645.8L866.3,650.5L875.1,655.2L883.5,659.9L891.2,664.6L898.0,669.3L903.7,674.0L908.2,678.7L911.2,683.4L912.7,688.1M810.8,617.6L812.3,622.3L815.4,627.0L819.8,631.7L825.5,636.4L832.4,641.1L840.1,645.8L848.5,650.5L857.3,655.2L866.2,659.9L875.0,664.6L883.4,669.3L891.1,674.0L897.9,678.7L903.6,683.4L908.1,688.1L911.1,692.8L912.6,697.5M810.7,627.0L812.2,631.7L815.3,636.4L819.7,641.1L825.4,645.8L832.3,650.5L840.0,655.2L848.4,659.9L857.2,664.6L866.1,669.3L874.9,674.0L883.3,678.7L891.0,683.4L897.8,688.1L903.5,692.8L908.0,697.5L911.0,702.2L912.5,706.9M810.6,636.4L812.1,641.1L815.2,645.8L819.6,650.5L825.3,655.2L832.2,659.9L839.9,664.6L848.3,669.3L857.1,674.0L866.0,678.7L874.8,683.4L883.2,688.1L890.9,692.8L897.7,697.5L903.4,702.2L907.9,706.9L910.9,711.6L912.4,716.3M810.5,645.8L812.1,650.5L815.1,655.2L819.5,659.9L825.2,664.6L832.1,669.3L839.8,674.0L848.2,678.7L857.0,683.4L865.9,688.1L874.7,692.8L883.1,697.5L890.8,702.2L897.6,706.9L903.3,711.6L907.8,716.3L910.8,721.0L912.3,725.7M810.4,655.2L812.0,659.9L815.0,664.6L819.4,669.3L825.1,674.0L832.0,678.7L839.7,683.4L848.1,688.1L856.9,692.8L865.8,697.5L874.6,702.2L883.0,706.9L890.7,711.6L897.5,716.3L903.2,721.0L907.7,725.7L910.7,730.4L912.2,735.1M810.3,664.6L811.9,669.3L814.9,674.0L819.3,678.7L825.0,683.4L831.9,688.1L839.6,692.8L848.0,697.5L856.8,702.2L865.7,706.9L874.5,711.6L882.9,716.3L890.6,721.0L897.4,725.7L903.1,730.4L907.6,735.1L910.6,739.8L912.1,744.5M810.2,674.0L811.8,678.7L814.8,683.4L819.2,688.1L824.9,692.8L831.8,697.5L839.5,702.2L847.9,706.9L856.7,711.6L865.6,716.3L874.4,721.0L882.8,725.7L890.5,730.4L897.3,735.1L903.0,739.8L907.5,744.5L910.5,749.2L912.0,753.9M810.1,683.4L811.7,688.1L814.7,692.8L819.1,697.5L824.8,702.2L831.7,706.9L839.4,711.6L847.8,716.3L856.6,721.0L865.5,725.7L874.3,730.4L882.7,735.1L890.4,739.8L897.2,744.5L902.9,749.2L907.4,753.9L910.4,758.6L911.9,763.3M810.0,692.8L811.6,697.5L814.6,702.2L819.0,706.9L824.7,711.6L831.6,716.3L839.3,721.0L847.7,725.7L856.5,730.4L865.4,735.1L874.2,739.8L882.6,744.5L890.3,749.2L897.1,753.9L902.9,758.6L907.3,763.3L910.3,768.0L911.8,772.7M810.0,702.2L811.5,706.9L814.5,711.6L818.9,716.3L824.6,721.0L831.5,725.7L839.2,730.4L847.6,735.1L856.4,739.8L865.3,744.5L874.1,749.2L882.5,753.9L890.2,758.6L897.0,763.3L902.8,768.0L907.2,772.7L910.2,777.4L911.7,782.1M809.9,711.6L811.4,716.3L814.4,721.0L818.8,725.7L824.5,730.4L831.4,735.1L839.1,739.8L847.5,744.5L856.3,749.2L865.2,753.9L874.0,758.6L882.4,763.3L890.1,768.0L896.9,772.7L902.7,777.4L907.1,782.1L910.1,786.8L911.6,791.5M809.8,721.0L811.3,725.7L814.3,730.4L818.7,735.1L824.4,739.8L831.3,744.5L839.0,749.2L847.4,753.9L856.2,758.6L865.1,763.3L873.9,768.0L882.3,772.7L890.0,777.4L896.8,782.1L902.6,786.8L907.0,791.5L910.0,796.2L911.5,800.9M809.7,730.4L811.2,735.1L814.2,739.8L818.6,744.5L824.3,749.2L831.2,753.9L838.9,758.6L847.3,763.3L856.1,768.0L865.0,772.7L873.8,777.4L882.2,782.1L889.9,786.8L896.7,791.5L902.5,796.2L906.9,800.9L909.9,805.6L911.4,810.3M809.6,739.8L811.1,744.5L814.1,749.2L818.5,753.9L824.2,758.6L831.1,763.3L838.8,768.0L847.2,772.7L856.0,777.4L864.9,782.1L873.7,786.8L882.1,791.5L889.8,796.2L896.6,800.9L902.4,805.6L906.8,810.3L909.8,815.0L911.3,819.7M809.5,749.2L811.0,753.9L814.0,758.6L818.4,763.3L824.2,768.0L831.0,772.7L838.7,777.4L847.1,782.1L855.9,786.8L864.8,791.5L873.6,796.2L882.0,800.9L889.7,805.6L896.5,810.3L902.3,815.0L906.7,819.7L909.7,824.4L911.2,829.1M809.4,758.6L810.9,763.3L813.9,768.0L818.3,772.7L824.1,777.4L830.9,782.1L838.6,786.8L847.0,791.5L855.8,796.2L864.7,800.9L873.5,805.6L881.9,810.3L889.6,815.0L896.4,819.7L902.2,824.4L906.6,829.1L909.6,833.8L911.1,838.5M809.3,768.0L810.8,772.7L813.8,777.4L818.2,782.1L824.0,786.8L830.8,791.5L838.5,796.2L846.9,800.9L855.7,805.6L864.6,810.3L873.4,815.0L881.8,819.7L889.5,824.4L896.3,829.1L902.1,833.8L906.5,838.5L909.5,843.2L911.0,847.9M809.2,777.4L810.7,782.1L813.7,786.8L818.1,791.5L823.9,796.2L830.7,800.9L838.4,805.6L846.8,810.3L855.6,815.0L864.5,819.7L873.3,824.4L881.7,829.1L889.4,833.8L896.2,838.5L902.0,843.2L906.4,847.9L909.4,852.6L910.9,857.3M809.1,786.8L810.6,791.5L813.6,796.2L818.0,800.9L823.8,805.6L830.6,810.3L838.3,815.0L846.7,819.7L855.5,824.4L864.4,829.1L873.2,833.8L881.6,838.5L889.3,843.2L896.1,847.9L901.9,852.6L906.3,857.3L909.3,862.0L910.8,866.7M809.0,796.2L810.5,800.9L813.5,805.6L817.9,810.3L823.7,815.0L830.5,819.7L838.2,824.4L846.6,829.1L855.4,833.8L864.3,838.5L873.1,843.2L881.5,847.9L889.2,852.6L896.0,857.3L901.8,862.0L906.2,866.7L909.2,871.4L910.7,876.1M808.9,805.6L810.4,810.3L813.4,815.0L817.8,819.7L823.6,824.4L830.4,829.1L838.1,833.8L846.5,838.5L855.3,843.2L864.2,847.9L873.0,852.6L881.4,857.3L889.1,862.0L896.0,866.7L901.7,871.4L906.1,876.1L909.1,880.8L910.6,885.5M808.8,815.0L810.3,819.7L813.3,824.4L817.7,829.1L823.5,833.8L830.3,838.5L838.0,843.2L846.4,847.9L855.2,852.6L864.1,857.3L872.9,862.0L881.3,866.7L889.0,871.4L895.9,876.1L901.6,880.8L906.0,885.5L909.0,890.2L910.5,894.9M808.7,824.4L810.2,829.1L813.2,833.8L817.6,838.5L823.4,843.2L830.2,847.9L837.9,852.6L846.3,857.3L855.1,862.0L864.0,866.7L872.8,871.4L881.2,876.1L888.9,880.8L895.8,885.5L901.5,890.2L905.9,894.9L908.9,899.6L910.4,904.3M808.6,833.8L810.1,838.5L813.1,843.2L817.5,847.9L823.3,852.6L830.1,857.3L837.8,862.0L846.2,866.7L855.0,871.4L863.9,876.1L872.7,880.8L881.1,885.5L888.8,890.2L895.7,894.9L901.4,899.6L905.8,904.3L908.8,909.0L910.3,913.7M808.5,843.2L810.0,847.9L813.0,852.6L817.4,857.3L823.2,862.0L830.0,866.7L837.7,871.4L846.1,876.1L854.9,880.8L863.8,885.5L872.6,890.2L881.0,894.9L888.7,899.6L895.6,904.3L901.3,909.0L905.7,913.7L908.7,918.4L910.2,923.1M808.4,852.6L809.9,857.3L812.9,862.0L817.3,866.7L823.1,871.4L829.9,876.1L837.6,880.8L846.0,885.5L854.8,890.2L863.7,894.9L872.5,899.6L880.9,904.3L888.6,909.0L895.5,913.7L901.2,918.4L905.6,923.1L908.6,927.8L910.2,932.5M808.3,862.0L809.8,866.7L812.8,871.4L817.2,876.1L823.0,880.8L829.8,885.5L837.5,890.2L845.9,894.9L854.7,899.6L863.6,904.3L872.4,909.0L880.8,913.7L888.5,918.4L895.4,923.1L901.1,927.8L905.5,932.5L908.5,937.2L910.1,941.9M808.2,871.4L809.7,876.1L812.7,880.8L817.2,885.5L822.9,890.2L829.7,894.9L837.4,899.6L845.8,904.3L854.6,909.0L863.5,913.7L872.3,918.4L880.7,923.1L888.4,927.8L895.3,932.5L901.0,937.2L905.4,941.9L908.4,946.6L910.0,951.3M808.1,880.8L809.6,885.5L812.6,890.2L817.1,894.9L822.8,899.6L829.6,904.3L837.3,909.0L845.7,913.7L854.5,918.4L863.4,923.1L872.2,927.8L880.6,932.5L888.3,937.2L895.2,941.9L900.9,946.6L905.3,951.3L908.3,956.0L909.9,960.7M808.0,890.2L809.5,894.9L812.5,899.6L817.0,904.3L822.7,909.0L829.5,913.7L837.2,918.4L845.6,923.1L854.4,927.8L863.3,932.5L872.1,937.2L880.5,941.9L888.2,946.6L895.1,951.3L900.8,956.0L905.2,960.7L908.2,965.4L909.8,970.1M807.9,899.6L809.4,904.3L812.4,909.0L816.9,913.7L822.6,918.4L829.4,923.1L837.1,927.8L845.5,932.5L854.3,937.2L863.2,941.9L872.0,946.6L880.4,951.3L888.1,956.0L895.0,960.7L900.7,965.4L905.1,970.1L908.1,974.8L909.7,979.5M807.8,909.0L809.3,913.7L812.3,918.4L816.8,923.1L822.5,927.8L829.3,932.5L837.0,937.2L845.4,941.9L854.2,946.6L863.1,951.3L871.9,956.0L880.3,960.7L888.0,965.4L894.9,970.1L900.6,974.8L905.0,979.5L908.1,984.2L909.6,988.9M807.7,918.4L809.2,923.1L812.2,927.8L816.7,932.5L822.4,937.2L829.2,941.9L836.9,946.6L845.3,951.3L854.1,956.0L863.0,960.7L871.8,965.4L880.2,970.1L887.9,974.8L894.8,979.5L900.5,984.2L904.9,988.9L908.0,993.6L909.5,998.3M807.6,927.8L809.1,932.5L812.1,937.2L816.6,941.9L822.3,946.6L829.1,951.3L836.8,956.0L845.2,960.7L854.0,965.4L862.9,970.1L871.7,974.8L880.1,979.5L887.8,984.2L894.7,988.9L900.4,993.6L904.8,998.3L907.9,1003.0L909.4,1007.7M807.5,937.2L809.0,941.9L812.0,946.6L816.5,951.3L822.2,956.0L829.0,960.7L836.7,965.4L845.1,970.1L853.9,974.8L862.8,979.5L871.6,984.2L880.0,988.9L887.7,993.6L894.6,998.3L900.3,1003.0L904.7,1007.7L907.8,1012.4L909.3,1017.1M807.4,946.6L808.9,951.3L811.9,956.0L816.4,960.7L822.1,965.4L828.9,970.1L836.6,974.8L845.0,979.5L853.8,984.2L862.7,988.9L871.5,993.6L879.9,998.3L887.6,1003.0L894.5,1007.7L900.2,1012.4L904.6,1017.1L907.7,1021.8L909.2,1026.5M815.7,157.0L817.3,152.3L820.4,147.6L824.9,142.9L830.7,138.2L837.7,133.5L845.5,128.8L854.0,124.1L862.9,119.4L871.9,114.7L880.8,110.0L889.3,105.3L897.1,100.6L904.0,95.9L909.8,91.2L914.4,86.5L917.5,81.8L919.1,77.1M815.6,166.4L817.2,161.7L820.3,157.0L824.8,152.3L830.6,147.6L837.6,142.9L845.4,138.2L853.9,133.5L862.8,128.8L871.8,124.1L880.7,119.4L889.2,114.7L897.0,110.0L903.9,105.3L909.7,100.6L914.3,95.9L917.4,91.2L919.0,86.5M815.5,175.8L817.1,171.1L820.2,166.4L824.7,161.7L830.5,157.0L837.5,152.3L845.3,147.6L853.8,142.9L862.7,138.2L871.7,133.5L880.6,128.8L889.1,124.1L896.9,119.4L903.8,114.7L909.6,110.0L914.2,105.3L917.3,100.6L918.9,95.9M815.4,185.2L817.0,180.5L820.1,175.8L824.6,171.1L830.4,166.4L837.4,161.7L845.2,157.0L853.7,152.3L862.6,147.6L871.6,142.9L880.5,138.2L889.0,133.5L896.8,128.8L903.7,124.1L909.5,119.4L914.1,114.7L917.2,110.0L918.8,105.3M815.3,194.6L816.9,189.9L820.0,185.2L824.5,180.5L830.3,175.8L837.3,171.1L845.1,166.4L853.6,161.7L862.5,157.0L871.5,152.3L880.4,147.6L888.9,142.9L896.7,138.2L903.6,133.5L909.4,128.8L914.0,124.1L917.1,119.4L918.7,114.7M815.2,204.0L816.8,199.3L819.9,194.6L824.4,189.9L830.2,185.2L837.2,180.5L845.0,175.8L853.5,171.1L862.4,166.4L871.4,161.7L880.3,157.0L888.8,152.3L896.6,147.6L903.5,142.9L909.3,138.2L913.9,133.5L917.0,128.8L918.6,124.1M815.1,213.4L816.7,208.7L819.8,204.0L824.3,199.3L830.1,194.6L837.1,189.9L844.9,185.2L853.4,180.5L862.3,175.8L871.3,171.1L880.2,166.4L888.7,161.7L896.5,157.0L903.4,152.3L909.2,147.6L913.8,142.9L916.9,138.2L918.5,133.5M815.0,222.8L816.6,218.1L819.7,213.4L824.2,208.7L830.1,204.0L837.0,199.3L844.8,194.6L853.3,189.9L862.2,185.2L871.2,180.5L880.1,175.8L888.6,171.1L896.4,166.4L903.3,161.7L909.1,157.0L913.7,152.3L916.8,147.6L918.4,142.9M814.9,232.2L816.5,227.5L819.6,222.8L824.1,218.1L830.0,213.4L836.9,208.7L844.7,204.0L853.2,199.3L862.1,194.6L871.1,189.9L880.0,185.2L888.5,180.5L896.3,175.8L903.2,171.1L909.0,166.4L913.6,161.7L916.7,157.0L918.3,152.3M814.8,241.6L816.4,236.9L819.5,232.2L824.0,227.5L829.9,222.8L836.8,218.1L844.6,213.4L853.1,208.7L862.0,204.0L871.0,199.3L879.9,194.6L888.4,189.9L896.2,185.2L903.1,180.5L908.9,175.8L913.5,171.1L916.6,166.4L918.2,161.7M814.7,251.0L816.3,246.3L819.4,241.6L823.9,236.9L829.8,232.2L836.7,227.5L844.5,222.8L853.0,218.1L861.9,213.4L870.9,208.7L879.8,204.0L888.3,199.3L896.1,194.6L903.0,189.9L908.8,185.2L913.4,180.5L916.5,175.8L918.1,171.1M814.6,260.4L816.2,255.7L819.3,251.0L823.8,246.3L829.7,241.6L836.6,236.9L844.4,232.2L852.9,227.5L861.8,222.8L870.8,218.1L879.7,213.4L888.2,208.7L896.0,204.0L902.9,199.3L908.8,194.6L913.3,189.9L916.4,185.2L918.0,180.5M814.5,269.8L816.1,265.1L819.2,260.4L823.7,255.7L829.6,251.0L836.5,246.3L844.3,241.6L852.8,236.9L861.7,232.2L870.7,227.5L879.6,222.8L888.1,218.1L895.9,213.4L902.8,208.7L908.7,204.0L913.2,199.3L916.3,194.6L917.9,189.9M814.4,279.2L816.0,274.5L819.1,269.8L823.6,265.1L829.5,260.4L836.4,255.7L844.2,251.0L852.7,246.3L861.6,241.6L870.6,236.9L879.5,232.2L888.0,227.5L895.8,222.8L902.7,218.1L908.6,213.4L913.1,208.7L916.2,204.0L917.8,199.3M814.3,288.6L815.9,283.9L819.0,279.2L823.5,274.5L829.4,269.8L836.3,265.1L844.1,260.4L852.6,255.7L861.5,251.0L870.5,246.3L879.4,241.6L887.9,236.9L895.7,232.2L902.6,227.5L908.5,222.8L913.0,218.1L916.1,213.4L917.7,208.7M814.2,298.0L815.8,293.3L818.9,288.6L823.4,283.9L829.3,279.2L836.2,274.5L844.0,269.8L852.5,265.1L861.4,260.4L870.4,255.7L879.3,251.0L887.8,246.3L895.6,241.6L902.5,236.9L908.4,232.2L912.9,227.5L916.0,222.8L917.6,218.1M814.1,307.4L815.7,302.7L818.8,298.0L823.3,293.3L829.2,288.6L836.1,283.9L843.9,279.2L852.4,274.5L861.3,269.8L870.3,265.1L879.2,260.4L887.7,255.7L895.5,251.0L902.4,246.3L908.3,241.6L912.8,236.9L915.9,232.2L917.5,227.5M814.0,316.8L815.6,312.1L818.7,307.4L823.2,302.7L829.1,298.0L836.0,293.3L843.8,288.6L852.3,283.9L861.2,279.2L870.2,274.5L879.1,269.8L887.6,265.1L895.4,260.4L902.3,255.7L908.2,251.0L912.7,246.3L915.8,241.6L917.4,236.9M813.9,326.2L815.5,321.5L818.6,316.8L823.1,312.1L829.0,307.4L835.9,302.7L843.7,298.0L852.2,293.3L861.1,288.6L870.1,283.9L879.0,279.2L887.5,274.5L895.3,269.8L902.2,265.1L908.1,260.4L912.6,255.7L915.7,251.0L917.3,246.3M813.8,335.6L815.4,330.9L818.5,326.2L823.1,321.5L828.9,316.8L835.8,312.1L843.6,307.4L852.1,302.7L861.0,298.0L870.0,293.3L878.9,288.6L887.4,283.9L895.2,279.2L902.1,274.5L908.0,269.8L912.5,265.1L915.6,260.4L917.2,255.7M813.7,345.0L815.3,340.3L818.4,335.6L823.0,330.9L828.8,326.2L835.7,321.5L843.5,316.8L852.0,312.1L860.9,307.4L869.9,302.7L878.8,298.0L887.3,293.3L895.1,288.6L902.0,283.9L907.9,279.2L912.4,274.5L915.5,269.8L917.1,265.1M813.6,354.4L815.2,349.7L818.3,345.0L822.9,340.3L828.7,335.6L835.6,330.9L843.4,326.2L851.9,321.5L860.8,316.8L869.8,312.1L878.7,307.4L887.2,302.7L895.0,298.0L901.9,293.3L907.8,288.6L912.3,283.9L915.4,279.2L917.0,274.5M813.5,363.8L815.1,359.1L818.2,354.4L822.8,349.7L828.6,345.0L835.5,340.3L843.3,335.6L851.8,330.9L860.7,326.2L869.7,321.5L878.6,316.8L887.1,312.1L894.9,307.4L901.9,302.7L907.7,298.0L912.2,293.3L915.3,288.6L916.9,283.9M813.4,373.2L815.0,368.5L818.1,363.8L822.7,359.1L828.5,354.4L835.4,349.7L843.2,345.0L851.7,340.3L860.6,335.6L869.6,330.9L878.5,326.2L887.0,321.5L894.8,316.8L901.8,312.1L907.6,307.4L912.1,302.7L915.2,298.0L916.8,293.3M813.3,382.6L814.9,377.9L818.0,373.2L822.6,368.5L828.4,363.8L835.3,359.1L843.1,354.4L851.6,349.7L860.5,345.0L869.5,340.3L878.4,335.6L886.9,330.9L894.7,326.2L901.7,321.5L907.5,316.8L912.0,312.1L915.1,307.4L916.7,302.7M813.2,392.0L814.8,387.3L817.9,382.6L822.5,377.9L828.3,373.2L835.2,368.5L843.0,363.8L851.5,359.1L860.4,354.4L869.4,349.7L878.3,345.0L886.8,340.3L894.6,335.6L901.6,330.9L907.4,326.2L911.9,321.5L915.0,316.8L916.6,312.1M813.1,401.4L814.7,396.7L817.8,392.0L822.4,387.3L828.2,382.6L835.1,377.9L842.9,373.2L851.4,368.5L860.3,363.8L869.3,359.1L878.2,354.4L886.7,349.7L894.5,345.0L901.5,340.3L907.3,335.6L911.8,330.9L914.9,326.2L916.5,321.5M813.0,410.8L814.6,406.1L817.7,401.4L822.3,396.7L828.1,392.0L835.0,387.3L842.8,382.6L851.3,377.9L860.2,373.2L869.2,368.5L878.1,363.8L886.6,359.1L894.4,354.4L901.4,349.7L907.2,345.0L911.7,340.3L914.8,335.6L916.4,330.9M812.9,420.2L814.5,415.5L817.6,410.8L822.2,406.1L828.0,401.4L834.9,396.7L842.7,392.0L851.2,387.3L860.1,382.6L869.1,377.9L878.0,373.2L886.5,368.5L894.3,363.8L901.3,359.1L907.1,354.4L911.6,349.7L914.7,345.0L916.3,340.3M812.8,429.6L814.4,424.9L817.5,420.2L822.1,415.5L827.9,410.8L834.8,406.1L842.6,401.4L851.1,396.7L860.0,392.0L869.0,387.3L877.9,382.6L886.4,377.9L894.2,373.2L901.2,368.5L907.0,363.8L911.5,359.1L914.6,354.4L916.2,349.7M812.7,439.0L814.3,434.3L817.4,429.6L822.0,424.9L827.8,420.2L834.7,415.5L842.5,410.8L851.0,406.1L859.9,401.4L868.9,396.7L877.8,392.0L886.3,387.3L894.1,382.6L901.1,377.9L906.9,373.2L911.4,368.5L914.5,363.8L916.1,359.1M812.6,448.4L814.2,443.7L817.3,439.0L821.9,434.3L827.7,429.6L834.6,424.9L842.4,420.2L850.9,415.5L859.8,410.8L868.8,406.1L877.7,401.4L886.2,396.7L894.0,392.0L901.0,387.3L906.8,382.6L911.3,377.9L914.4,373.2L916.0,368.5M812.5,457.8L814.1,453.1L817.2,448.4L821.8,443.7L827.6,439.0L834.5,434.3L842.3,429.6L850.8,424.9L859.7,420.2L868.7,415.5L877.6,410.8L886.1,406.1L893.9,401.4L900.9,396.7L906.7,392.0L911.2,387.3L914.3,382.6L916.0,377.9M812.4,467.2L814.0,462.5L817.1,457.8L821.7,453.1L827.5,448.4L834.4,443.7L842.2,439.0L850.7,434.3L859.6,429.6L868.6,424.9L877.5,420.2L886.0,415.5L893.8,410.8L900.8,406.1L906.6,401.4L911.1,396.7L914.2,392.0L915.9,387.3M812.3,476.6L813.9,471.9L817.0,467.2L821.6,462.5L827.4,457.8L834.3,453.1L842.1,448.4L850.6,443.7L859.5,439.0L868.5,434.3L877.4,429.6L885.9,424.9L893.7,420.2L900.7,415.5L906.5,410.8L911.0,406.1L914.1,401.4L915.8,396.7M812.2,486.0L813.8,481.3L816.9,476.6L821.5,471.9L827.3,467.2L834.2,462.5L842.0,457.8L850.5,453.1L859.4,448.4L868.4,443.7L877.3,439.0L885.8,434.3L893.6,429.6L900.6,424.9L906.4,420.2L910.9,415.5L914.0,410.8L915.7,406.1M812.1,495.4L813.7,490.7L816.8,486.0L821.4,481.3L827.2,476.6L834.1,471.9L841.9,467.2L850.4,462.5L859.3,457.8L868.3,453.1L877.2,448.4L885.7,443.7L893.5,439.0L900.5,434.3L906.3,429.6L910.8,424.9L914.0,420.2L915.6,415.5M812.0,504.8L813.6,500.1L816.7,495.4L821.3,490.7L827.1,486.0L834.0,481.3L841.9,476.6L850.3,471.9L859.2,467.2L868.3,462.5L877.1,457.8L885.6,453.1L893.4,448.4L900.4,443.7L906.2,439.0L910.7,434.3L913.9,429.6L915.5,424.9M811.9,514.2L813.5,509.5L816.6,504.8L821.2,500.1L827.0,495.4L833.9,490.7L841.8,486.0L850.2,481.3L859.1,476.6L868.2,471.9L877.0,467.2L885.5,462.5L893.4,457.8L900.3,453.1L906.1,448.4L910.6,443.7L913.8,439.0L915.4,434.3M811.8,523.6L813.4,518.9L816.5,514.2L821.1,509.5L826.9,504.8L833.8,500.1L841.7,495.4L850.1,490.7L859.0,486.0L868.1,481.3L876.9,476.6L885.4,471.9L893.3,467.2L900.2,462.5L906.0,457.8L910.5,453.1L913.7,448.4L915.3,443.7M811.7,533.0L813.3,528.3L816.4,523.6L821.0,518.9L826.8,514.2L833.7,509.5L841.6,504.8L850.0,500.1L858.9,495.4L868.0,490.7L876.8,486.0L885.3,481.3L893.2,476.6L900.1,471.9L905.9,467.2L910.4,462.5L913.6,457.8L915.2,453.1M811.6,542.4L813.2,537.7L816.4,533.0L820.9,528.3L826.7,523.6L833.6,518.9L841.5,514.2L849.9,509.5L858.8,504.8L867.9,500.1L876.7,495.4L885.2,490.7L893.1,486.0L900.0,481.3L905.8,476.6L910.3,471.9L913.5,467.2L915.1,462.5M811.5,551.8L813.1,547.1L816.3,542.4L820.8,537.7L826.6,533.0L833.5,528.3L841.4,523.6L849.8,518.9L858.7,514.2L867.8,509.5L876.6,504.8L885.1,500.1L893.0,495.4L899.9,490.7L905.7,486.0L910.2,481.3L913.4,476.6L915.0,471.9M811.4,561.2L813.0,556.5L816.2,551.8L820.7,547.1L826.5,542.4L833.4,537.7L841.3,533.0L849.7,528.3L858.6,523.6L867.7,518.9L876.6,514.2L885.0,509.5L892.9,504.8L899.8,500.1L905.6,495.4L910.1,490.7L913.3,486.0L914.9,481.3M811.3,570.6L812.9,565.9L816.1,561.2L820.6,556.5L826.4,551.8L833.3,547.1L841.2,542.4L849.6,537.7L858.5,533.0L867.6,528.3L876.5,523.6L884.9,518.9L892.8,514.2L899.7,509.5L905.5,504.8L910.0,500.1L913.2,495.4L914.8,490.7M811.2,580.0L812.8,575.3L816.0,570.6L820.5,565.9L826.3,561.2L833.2,556.5L841.1,551.8L849.5,547.1L858.4,542.4L867.5,537.7L876.4,533.0L884.8,528.3L892.7,523.6L899.6,518.9L905.4,514.2L909.9,509.5L913.1,504.8L914.7,500.1M811.1,589.4L812.7,584.7L815.9,580.0L820.4,575.3L826.2,570.6L833.1,565.9L841.0,561.2L849.5,556.5L858.3,551.8L867.4,547.1L876.3,542.4L884.7,537.7L892.6,533.0L899.5,528.3L905.3,523.6L909.8,518.9L913.0,514.2L914.6,509.5M811.0,598.8L812.6,594.1L815.8,589.4L820.3,584.7L826.1,580.0L833.0,575.3L840.9,570.6L849.4,565.9L858.2,561.2L867.3,556.5L876.2,551.8L884.6,547.1L892.5,542.4L899.4,537.7L905.2,533.0L909.7,528.3L912.9,523.6L914.5,518.9M810.9,608.2L812.5,603.5L815.7,598.8L820.2,594.1L826.0,589.4L832.9,584.7L840.8,580.0L849.3,575.3L858.1,570.6L867.2,565.9L876.1,561.2L884.5,556.5L892.4,551.8L899.3,547.1L905.1,542.4L909.7,537.7L912.8,533.0L914.4,528.3M810.8,617.6L812.4,612.9L815.6,608.2L820.1,603.5L825.9,598.8L832.8,594.1L840.7,589.4L849.2,584.7L858.0,580.0L867.1,575.3L876.0,570.6L884.4,565.9L892.3,561.2L899.2,556.5L905.0,551.8L909.6,547.1L912.7,542.4L914.3,537.7M810.7,627.0L812.3,622.3L815.5,617.6L820.0,612.9L825.8,608.2L832.7,603.5L840.6,598.8L849.1,594.1L857.9,589.4L867.0,584.7L875.9,580.0L884.3,575.3L892.2,570.6L899.1,565.9L904.9,561.2L909.5,556.5L912.6,551.8L914.2,547.1M810.6,636.4L812.2,631.7L815.4,627.0L819.9,622.3L825.7,617.6L832.7,612.9L840.5,608.2L849.0,603.5L857.8,598.8L866.9,594.1L875.8,589.4L884.2,584.7L892.1,580.0L899.0,575.3L904.8,570.6L909.4,565.9L912.5,561.2L914.1,556.5M810.5,645.8L812.1,641.1L815.3,636.4L819.8,631.7L825.6,627.0L832.6,622.3L840.4,617.6L848.9,612.9L857.7,608.2L866.8,603.5L875.7,598.8L884.2,594.1L892.0,589.4L898.9,584.7L904.7,580.0L909.3,575.3L912.4,570.6L914.0,565.9M810.4,655.2L812.1,650.5L815.2,645.8L819.7,641.1L825.5,636.4L832.5,631.7L840.3,627.0L848.8,622.3L857.7,617.6L866.7,612.9L875.6,608.2L884.1,603.5L891.9,598.8L898.8,594.1L904.6,589.4L909.2,584.7L912.3,580.0L913.9,575.3M810.3,664.6L812.0,659.9L815.1,655.2L819.6,650.5L825.4,645.8L832.4,641.1L840.2,636.4L848.7,631.7L857.6,627.0L866.6,622.3L875.5,617.6L884.0,612.9L891.8,608.2L898.7,603.5L904.5,598.8L909.1,594.1L912.2,589.4L913.8,584.7M810.2,674.0L811.9,669.3L815.0,664.6L819.5,659.9L825.3,655.2L832.3,650.5L840.1,645.8L848.6,641.1L857.5,636.4L866.5,631.7L875.4,627.0L883.9,622.3L891.7,617.6L898.6,612.9L904.4,608.2L909.0,603.5L912.1,598.8L913.7,594.1M810.1,683.4L811.8,678.7L814.9,674.0L819.4,669.3L825.2,664.6L832.2,659.9L840.0,655.2L848.5,650.5L857.4,645.8L866.4,641.1L875.3,636.4L883.8,631.7L891.6,627.0L898.5,622.3L904.3,617.6L908.9,612.9L912.0,608.2L913.6,603.5M810.0,692.8L811.7,688.1L814.8,683.4L819.3,678.7L825.1,674.0L832.1,669.3L839.9,664.6L848.4,659.9L857.3,655.2L866.3,650.5L875.2,645.8L883.7,641.1L891.5,636.4L898.4,631.7L904.2,627.0L908.8,622.3L911.9,617.6L913.5,612.9M810.0,702.2L811.6,697.5L814.7,692.8L819.2,688.1L825.0,683.4L832.0,678.7L839.8,674.0L848.3,669.3L857.2,664.6L866.2,659.9L875.1,655.2L883.6,650.5L891.4,645.8L898.3,641.1L904.1,636.4L908.7,631.7L911.8,627.0L913.4,622.3M809.9,711.6L811.5,706.9L814.6,702.2L819.1,697.5L824.9,692.8L831.9,688.1L839.7,683.4L848.2,678.7L857.1,674.0L866.1,669.3L875.0,664.6L883.5,659.9L891.3,655.2L898.2,650.5L904.0,645.8L908.6,641.1L911.7,636.4L913.3,631.7M809.8,721.0L811.4,716.3L814.5,711.6L819.0,706.9L824.8,702.2L831.8,697.5L839.6,692.8L848.1,688.1L857.0,683.4L866.0,678.7L874.9,674.0L883.4,669.3L891.2,664.6L898.1,659.9L903.9,655.2L908.5,650.5L911.6,645.8L913.2,641.1M809.7,730.4L811.3,725.7L814.4,721.0L818.9,716.3L824.7,711.6L831.7,706.9L839.5,702.2L848.0,697.5L856.9,692.8L865.9,688.1L874.8,683.4L883.3,678.7L891.1,674.0L898.0,669.3L903.8,664.6L908.4,659.9L911.5,655.2L913.1,650.5M809.6,739.8L811.2,735.1L814.3,730.4L818.8,725.7L824.6,721.0L831.6,716.3L839.4,711.6L847.9,706.9L856.8,702.2L865.8,697.5L874.7,692.8L883.2,688.1L891.0,683.4L897.9,678.7L903.7,674.0L908.3,669.3L911.4,664.6L913.0,659.9M809.5,749.2L811.1,744.5L814.2,739.8L818.7,735.1L824.5,730.4L831.5,725.7L839.3,721.0L847.8,716.3L856.7,711.6L865.7,706.9L874.6,702.2L883.1,697.5L890.9,692.8L897.8,688.1L903.6,683.4L908.2,678.7L911.3,674.0L912.9,669.3M809.4,758.6L811.0,753.9L814.1,749.2L818.6,744.5L824.4,739.8L831.4,735.1L839.2,730.4L847.7,725.7L856.6,721.0L865.6,716.3L874.5,711.6L883.0,706.9L890.8,702.2L897.7,697.5L903.5,692.8L908.1,688.1L911.2,683.4L912.8,678.7M809.3,768.0L810.9,763.3L814.0,758.6L818.5,753.9L824.3,749.2L831.3,744.5L839.1,739.8L847.6,735.1L856.5,730.4L865.5,725.7L874.4,721.0L882.9,716.3L890.7,711.6L897.6,706.9L903.4,702.2L908.0,697.5L911.1,692.8L912.7,688.1M809.2,777.4L810.8,772.7L813.9,768.0L818.4,763.3L824.2,758.6L831.2,753.9L839.0,749.2L847.5,744.5L856.4,739.8L865.4,735.1L874.3,730.4L882.8,725.7L890.6,721.0L897.5,716.3L903.3,711.6L907.9,706.9L911.0,702.2L912.6,697.5M809.1,786.8L810.7,782.1L813.8,777.4L818.3,772.7L824.2,768.0L831.1,763.3L838.9,758.6L847.4,753.9L856.3,749.2L865.3,744.5L874.2,739.8L882.7,735.1L890.5,730.4L897.4,725.7L903.2,721.0L907.8,716.3L910.9,711.6L912.5,706.9M809.0,796.2L810.6,791.5L813.7,786.8L818.2,782.1L824.1,777.4L831.0,772.7L838.8,768.0L847.3,763.3L856.2,758.6L865.2,753.9L874.1,749.2L882.6,744.5L890.4,739.8L897.3,735.1L903.1,730.4L907.7,725.7L910.8,721.0L912.4,716.3M808.9,805.6L810.5,800.9L813.6,796.2L818.1,791.5L824.0,786.8L830.9,782.1L838.7,777.4L847.2,772.7L856.1,768.0L865.1,763.3L874.0,758.6L882.5,753.9L890.3,749.2L897.2,744.5L903.0,739.8L907.6,735.1L910.7,730.4L912.3,725.7M808.8,815.0L810.4,810.3L813.5,805.6L818.0,800.9L823.9,796.2L830.8,791.5L838.6,786.8L847.1,782.1L856.0,777.4L865.0,772.7L873.9,768.0L882.4,763.3L890.2,758.6L897.1,753.9L902.9,749.2L907.5,744.5L910.6,739.8L912.2,735.1M808.7,824.4L810.3,819.7L813.4,815.0L817.9,810.3L823.8,805.6L830.7,800.9L838.5,796.2L847.0,791.5L855.9,786.8L864.9,782.1L873.8,777.4L882.3,772.7L890.1,768.0L897.0,763.3L902.9,758.6L907.4,753.9L910.5,749.2L912.1,744.5M808.6,833.8L810.2,829.1L813.3,824.4L817.8,819.7L823.7,815.0L830.6,810.3L838.4,805.6L846.9,800.9L855.8,796.2L864.8,791.5L873.7,786.8L882.2,782.1L890.0,777.4L896.9,772.7L902.8,768.0L907.3,763.3L910.4,758.6L912.0,753.9M808.5,843.2L810.1,838.5L813.2,833.8L817.7,829.1L823.6,824.4L830.5,819.7L838.3,815.0L846.8,810.3L855.7,805.6L864.7,800.9L873.6,796.2L882.1,791.5L889.9,786.8L896.8,782.1L902.7,777.4L907.2,772.7L910.3,768.0L911.9,763.3M808.4,852.6L810.0,847.9L813.1,843.2L817.6,838.5L823.5,833.8L830.4,829.1L838.2,824.4L846.7,819.7L855.6,815.0L864.6,810.3L873.5,805.6L882.0,800.9L889.8,796.2L896.7,791.5L902.6,786.8L907.1,782.1L910.2,777.4L911.8,772.7M808.3,862.0L809.9,857.3L813.0,852.6L817.5,847.9L823.4,843.2L830.3,838.5L838.1,833.8L846.6,829.1L855.5,824.4L864.5,819.7L873.4,815.0L881.9,810.3L889.7,805.6L896.6,800.9L902.5,796.2L907.0,791.5L910.1,786.8L911.7,782.1M808.2,871.4L809.8,866.7L812.9,862.0L817.4,857.3L823.3,852.6L830.2,847.9L838.0,843.2L846.5,838.5L855.4,833.8L864.4,829.1L873.3,824.4L881.8,819.7L889.6,815.0L896.5,810.3L902.4,805.6L906.9,800.9L910.0,796.2L911.6,791.5M808.1,880.8L809.7,876.1L812.8,871.4L817.3,866.7L823.2,862.0L830.1,857.3L837.9,852.6L846.4,847.9L855.3,843.2L864.3,838.5L873.2,833.8L881.7,829.1L889.5,824.4L896.4,819.7L902.3,815.0L906.8,810.3L909.9,805.6L911.5,800.9M808.0,890.2L809.6,885.5L812.7,880.8L817.2,876.1L823.1,871.4L830.0,866.7L837.8,862.0L846.3,857.3L855.2,852.6L864.2,847.9L873.1,843.2L881.6,838.5L889.4,833.8L896.3,829.1L902.2,824.4L906.7,819.7L909.8,815.0L911.4,810.3M807.9,899.6L809.5,894.9L812.6,890.2L817.2,885.5L823.0,880.8L829.9,876.1L837.7,871.4L846.2,866.7L855.1,862.0L864.1,857.3L873.0,852.6L881.5,847.9L889.3,843.2L896.2,838.5L902.1,833.8L906.6,829.1L909.7,824.4L911.3,819.7M807.8,909.0L809.4,904.3L812.5,899.6L817.1,894.9L822.9,890.2L829.8,885.5L837.6,880.8L846.1,876.1L855.0,871.4L864.0,866.7L872.9,862.0L881.4,857.3L889.2,852.6L896.1,847.9L902.0,843.2L906.5,838.5L909.6,833.8L911.2,829.1M807.7,918.4L809.3,913.7L812.4,909.0L817.0,904.3L822.8,899.6L829.7,894.9L837.5,890.2L846.0,885.5L854.9,880.8L863.9,876.1L872.8,871.4L881.3,866.7L889.1,862.0L896.0,857.3L901.9,852.6L906.4,847.9L909.5,843.2L911.1,838.5M807.6,927.8L809.2,923.1L812.3,918.4L816.9,913.7L822.7,909.0L829.6,904.3L837.4,899.6L845.9,894.9L854.8,890.2L863.8,885.5L872.7,880.8L881.2,876.1L889.0,871.4L896.0,866.7L901.8,862.0L906.3,857.3L909.4,852.6L911.0,847.9M807.5,937.2L809.1,932.5L812.2,927.8L816.8,923.1L822.6,918.4L829.5,913.7L837.3,909.0L845.8,904.3L854.7,899.6L863.7,894.9L872.6,890.2L881.1,885.5L888.9,880.8L895.9,876.1L901.7,871.4L906.2,866.7L909.3,862.0L910.9,857.3M807.4,946.6L809.0,941.9L812.1,937.2L816.7,932.5L822.5,927.8L829.4,923.1L837.2,918.4L845.7,913.7L854.6,909.0L863.6,904.3L872.5,899.6L881.0,894.9L888.8,890.2L895.8,885.5L901.6,880.8L906.1,876.1L909.2,871.4L910.8,866.7' stroke='#262432' stroke-opacity='0.6' stroke-width='1' fill='none' shape-rendering='crispEdges'/>
<path d='M813,392 L808,866 L820,872 L826,405 Z' fill='#2f2d3b' fill-opacity='0.35'/>
<path d='M909,392 L904,872 L910,868 L915,392 Z' fill='#2f2d3b' fill-opacity='0.5'/>
<clipPath id='cCap'><ellipse cx='864' cy='392' rx='51' ry='17'/></clipPath>
<ellipse cx='864' cy='392' rx='51' ry='17' fill='#403d52'/>
<path clip-path='url(#cCap)' d='M812,366.4L916,372.4M812,372.4L916,366.4M812,369.6L916,375.6M812,375.6L916,369.6M812,372.8L916,378.8M812,378.8L916,372.8M812,376.0L916,382.0M812,382.0L916,376.0M812,379.2L916,385.2M812,385.2L916,379.2M812,382.4L916,388.4M812,388.4L916,382.4M812,385.6L916,391.6M812,391.6L916,385.6M812,388.8L916,394.8M812,394.8L916,388.8M812,392.0L916,398.0M812,398.0L916,392.0M812,395.2L916,401.2M812,401.2L916,395.2M812,398.4L916,404.4M812,404.4L916,398.4M812,401.6L916,407.6M812,407.6L916,401.6M812,404.8L916,410.8M812,410.8L916,404.8M812,408.0L916,414.0M812,414.0L916,408.0M812,411.2L916,417.2M812,417.2L916,411.2M812,414.4L916,420.4M812,420.4L916,414.4M812,417.6L916,423.6M812,423.6L916,417.6M804.0,374L807.0,410M810.0,374L813.0,410M816.0,374L819.0,410M822.0,374L825.0,410M828.0,374L831.0,410M834.0,374L837.0,410M840.0,374L843.0,410M846.0,374L849.0,410M852.0,374L855.0,410M858.0,374L861.0,410M864.0,374L867.0,410M870.0,374L873.0,410M876.0,374L879.0,410M882.0,374L885.0,410M888.0,374L891.0,410M894.0,374L897.0,410M900.0,374L903.0,410M906.0,374L909.0,410M912.0,374L915.0,410M918.0,374L921.0,410M924.0,374L927.0,410' stroke='#25232f' stroke-opacity='0.6' stroke-width='1' fill='none' shape-rendering='crispEdges'/>
<ellipse cx='864' cy='392' rx='51' ry='17' fill='none' stroke='#18f018' stroke-width='1.2'/>
<path d='M826.5,405 L820.5,872' stroke='#18f018' stroke-width='1.2'/>
<path d='M912.3,393.7h5M914.8,390.7v6M910.3,396.9h5M912.8,393.9v6M906.5,400.0h5M909.0,397.0v6M900.9,402.8h5M903.4,399.8v6M893.9,405.1h5M896.4,402.1v6M885.5,407.0h5M888.0,404.0v6M876.3,408.3h5M878.8,405.3v6M866.5,408.9h5M869.0,405.9v6M856.5,408.9h5M859.0,405.9v6M846.7,408.3h5M849.2,405.3v6M837.5,407.0h5M840.0,404.0v6M829.1,405.1h5M831.6,402.1v6M822.1,402.8h5M824.6,399.8v6M816.5,400.0h5M819.0,397.0v6M812.7,396.9h5M815.2,393.9v6M810.7,393.7h5M813.2,390.7v6M810.7,390.3h5M813.2,387.3v6M812.7,387.1h5M815.2,384.1v6M816.5,384.0h5M819.0,381.0v6M822.1,381.2h5M824.6,378.2v6M829.1,378.9h5M831.6,375.9v6M837.5,377.0h5M840.0,374.0v6M846.7,375.7h5M849.2,372.7v6M856.5,375.1h5M859.0,372.1v6M866.5,375.1h5M869.0,372.1v6M876.3,375.7h5M878.8,372.7v6M885.5,377.0h5M888.0,374.0v6M893.9,378.9h5M896.4,375.9v6M900.9,381.2h5M903.4,378.2v6M906.5,384.0h5M909.0,381.0v6M910.3,387.1h5M912.8,384.1v6M912.3,390.3h5M914.8,387.3v6M822.4,414.0h4M822.3,423.7h4M822.1,433.4h4M822.0,443.1h4M821.9,452.8h4M821.8,462.5h4M821.6,472.2h4M821.5,481.9h4M821.4,491.6h4M821.3,501.3h4M821.1,511.0h4M821.0,520.7h4M820.9,530.4h4M820.8,540.1h4M820.6,549.8h4M820.5,559.5h4M820.4,569.2h4M820.3,578.9h4M820.1,588.6h4M820.0,598.3h4M819.9,608.0h4M819.8,617.7h4M819.6,627.4h4M819.5,637.1h4M819.4,646.8h4M819.3,656.5h4M819.1,666.2h4M819.0,675.9h4M818.9,685.6h4M818.8,695.3h4M818.6,705.0h4M818.5,714.7h4M818.4,724.4h4M818.3,734.1h4M818.1,743.8h4M818.0,753.5h4M817.9,763.2h4M817.8,772.9h4M817.6,782.6h4M817.5,792.3h4M817.4,802.0h4M817.3,811.7h4M817.2,821.4h4M817.0,831.1h4M816.9,840.8h4M816.8,850.5h4M816.7,860.2h4M816.5,869.9h4M907.4,872.5h4M905.8,874.6h4M903.4,876.6h4M900.2,878.5h4M896.1,880.3h4M891.4,881.8h4M886.0,883.2h4M880.2,884.3h4M873.8,885.1h4M867.2,885.7h4M860.4,886.0h4M853.6,886.0h4M846.8,885.7h4M840.2,885.1h4M833.8,884.3h4M828.0,883.2h4M822.6,881.8h4M817.9,880.3h4M813.8,878.5h4M810.6,876.6h4M808.2,874.6h4M806.6,872.5h4' stroke='#ff55ff' stroke-width='1' fill='none' shape-rendering='crispEdges'/>
<circle cx='827' cy='404' r='3' fill='#fff'/><circle cx='903' cy='382' r='3' fill='#fff'/>
<path d='M398.0,125.6v5M473.0,102.5v5M548.0,79.5v5M624.0,56.2v5M386.8,180.5h8M390.8,176.5v8M455.7,207.7h8M459.7,203.7v8M524.6,235.0h8M528.6,231.0v8M591.9,261.7h8M595.9,257.7v8M736.5,265.9h8M740.5,261.9v8M812.0,242.9h8M816.0,238.9v8M887.5,219.8h8M891.5,215.8v8M963.0,196.7h8M967.0,192.7v8M1038.5,173.7h8M1042.5,169.7v8M1114.0,150.6h8M1118.0,146.6v8M1189.5,127.5h8M1193.5,123.5v8M1265.0,104.5h8M1269.0,100.5v8M1340.5,81.4h8M1344.5,77.4v8M1416.0,58.3h8M1420.0,54.3v8M659.6,385.0h8M663.6,381.0v8M658.2,480.0h8M662.2,476.0v8M656.8,575.0h8M660.8,571.0v8M655.5,670.0h8M659.5,666.0v8M654.1,766.0h8M658.1,762.0v8M652.7,861.0h8M656.7,857.0v8M651.3,956.0h8M655.3,952.0v8M950.3,958.0h8M954.3,954.0v8M1025.3,935.0h8M1029.3,931.0v8M1100.3,912.0h8M1104.3,908.0v8M1175.3,889.0h8M1179.3,885.0v8M1250.3,866.0h8M1254.3,862.0v8M1325.3,843.0h8M1329.3,839.0v8M1400.3,820.0h8M1404.3,816.0v8M1475.3,797.0h8M1479.3,793.0v8M1550.3,774.0h8M1554.3,770.0v8M1625.3,751.0h8M1629.3,747.0v8M376.0,941.0h8M380.0,937.0v8M445.0,968.0h8M449.0,964.0v8' stroke='#ff66ff' stroke-width='1' fill='none' shape-rendering='crispEdges'/><path d='M884,979 L1660,742' stroke='#4a1070' stroke-width='1.3'/><circle cx='665' cy='289' r='3.5' fill='#fff'/>
<g>
<line x1='1578' y1='145' x2='1578.5' y2='100' stroke='#2aa8b8' stroke-width='1.2'/>
<polygon points='1579,84 1573.5,104 1584.5,104' fill='#1ea0b0'/>
<line x1='1578' y1='145' x2='1545' y2='131' stroke='#22cc22' stroke-width='1.2'/>
<polygon points='1534,127 1550,131 1547,138' fill='#117a11'/>
<circle cx='1546' cy='133' r='2.5' fill='#000'/>
<line x1='1578' y1='145' x2='1612' y2='134' stroke='#d02020' stroke-width='1.2'/>
<polygon points='1626,130 1609,132 1613,139' fill='#8a1010'/>
<circle cx='1612' cy='135' r='2.5' fill='#000'/>
<polygon points='1573,142 1582,140 1584,148 1575,151' fill='#8c8c20'/>
<polygon points='1573,142 1578,139 1582,140' fill='#2a9aaa'/>
<text x='1577' y='74' font-family='"Liberation Sans",sans-serif' font-size='11' fill='#1ea8b8'>Z</text>
<text x='1530' y='122' font-family='"Liberation Sans",sans-serif' font-size='11' font-weight='bold' fill='#22dd22'>Y</text>
<text x='1629' y='123' font-family='"Liberation Sans",sans-serif' font-size='11' fill='#e02020'>X</text>
</g>
</g>
</svg>
<div class='t' style='left:380px;top:57px;font-family:"Liberation Mono", monospace;font-weight:bold;font-size:13.2px;color:#fff'>ansa_icfd2.ansa,&nbsp; Current Part: Untitled</div>
<div class='t' style='left:382px;top:464px;font-family:"Liberation Mono", monospace;font-weight:bold;font-size:13px;color:#fff'>Shell</div>
<div class='t' style='left:382px;top:483px;font-family:"Liberation Mono", monospace;font-weight:bold;font-size:13px;color:#fff'>quads :</div>
<div class='t' style='left:446px;width:50px;text-align:right;top:483px;font-family:"Liberation Mono", monospace;font-weight:bold;font-size:13px;color:#fff'>0</div>
<div class='t' style='left:382px;top:502px;font-family:"Liberation Mono", monospace;font-weight:bold;font-size:13px;color:#fff'>trias :</div>
<div class='t' style='left:446px;width:50px;text-align:right;top:502px;font-family:"Liberation Mono", monospace;font-weight:bold;font-size:13px;color:#fff'>4652</div>
<div class='t' style='left:382px;top:521px;font-family:"Liberation Mono", monospace;font-weight:bold;font-size:13px;color:#fff'>total :</div>
<div class='t' style='left:446px;width:50px;text-align:right;top:521px;font-family:"Liberation Mono", monospace;font-weight:bold;font-size:13px;color:#fff'>4652</div>
<div class='title' style='left:0px;top:20px;width:372px;height:20px;padding-left:1px;line-height:19px'>Database</div>
<svg class='a' style='left:359.5px;top:25.5px' width='9' height='9'><path d='M1,1 L8,8 M8,1 L1,8' stroke='#000' stroke-width='1.6'/></svg>
<div class='a' style='left:2px;top:43px;width:368px;height:539px;background:#fff;border:1px solid #828790'></div>
<div class='t' style='left:32px;top:51px'>Name</div><div class='t' style='left:121px;top:51px'>Number</div>
<div class='a' style='left:28px;top:45px;width:89px;height:22px;border:1px dotted #555'></div>
<div class='t' style='left:51px;top:72px'>ANSAPART</div><div class='t' style='left:120px;top:72px'>1</div>
<div class='a' style='left:3px;top:86px;width:169px;height:18px;background:#e9e9e9'></div>
<div class='t' style='left:51px;top:90px'>EDGE</div><div class='t' style='left:120px;top:90px'></div>
<div class='t' style='left:51px;top:108px'>ELEMENT</div><div class='t' style='left:120px;top:108px'>5002</div>
<div class='a' style='left:9px;top:106px;width:13px;height:13px;border:1px solid #333;background:#fff'></div>
<svg class='a' style='left:9px;top:106px' width='13' height='13'><path d='M2.5,6.5 L5,9.5 L10.5,3' stroke='#333' stroke-width='1.3' fill='none'/></svg>
<svg class='a' style='left:33px;top:108px' width='8' height='10'><path d='M2,1 L6,5 L2,9' stroke='#888' stroke-width='1.2' fill='none'/></svg>
<div class='a' style='left:3px;top:122px;width:169px;height:18px;background:#e9e9e9'></div>
<div class='t' style='left:51px;top:126px'>GEOMETRY</div><div class='t' style='left:120px;top:126px'>67</div>
<div class='a' style='left:9px;top:124px;width:13px;height:13px;border:1px solid #333;background:#fff'></div>
<div class='a' style='left:12px;top:127px;width:7px;height:7px;background:#333'></div>
<svg class='a' style='left:33px;top:126px' width='8' height='10'><path d='M2,1 L6,5 L2,9' stroke='#888' stroke-width='1.2' fill='none'/></svg>
<div class='t' style='left:51px;top:144px'>MATERIAL</div><div class='t' style='left:120px;top:144px'>1</div>
<svg class='a' style='left:33px;top:144px' width='8' height='10'><path d='M2,1 L6,5 L2,9' stroke='#888' stroke-width='1.2' fill='none'/></svg>
<div class='a' style='left:3px;top:158px;width:169px;height:18px;background:#e9e9e9'></div>
<div class='t' style='left:51px;top:162px'>NODE</div><div class='t' style='left:120px;top:162px'>2503</div>
<div class='a' style='left:9px;top:160px;width:13px;height:13px;border:1px solid #333;background:#fff'></div>
<div class='t' style='left:51px;top:180px'>PROPERTY</div><div class='t' style='left:120px;top:180px'>6</div>
<svg class='a' style='left:32px;top:181px' width='10' height='8'><path d='M1,2 L5,6 L9,2' stroke='#333' stroke-width='1.3' fill='none'/></svg>
<div class='a' style='left:3px;top:194px;width:25px;height:18px;background:#1b91fc'></div>
<div class='a' style='left:28px;top:194px;width:40px;height:18px;background:#e9e9e9'></div>
<div class='a' style='left:68px;top:194px;width:104px;height:18px;background:#1b91fc'></div>
<div class='t' style='left:71px;top:198px;color:#fff'>SECT...</div><div class='t' style='left:120px;top:198px;color:#fff'>6</div>
<div class='t' style='left:51px;top:216px'>SECTIONS</div><div class='t' style='left:120px;top:216px'>1</div>
<svg class='a' style='left:33px;top:216px' width='8' height='10'><path d='M2,1 L6,5 L2,9' stroke='#888' stroke-width='1.2' fill='none'/></svg>
<div class='a' style='left:171px;top:45px;width:1px;height:22px;background:#e5e5e5'></div>
<div class='title' style='left:1px;top:588px;width:372px;height:18px'>SECTION_SHELL</div>
<svg class='a' style='left:359.5px;top:592.5px' width='9' height='9'><path d='M1,1 L8,8 M8,1 L1,8' stroke='#000' stroke-width='1.6'/></svg>
<div class='a' style='left:2px;top:610px;width:368px;height:384px;border:1px solid #dcdcdc;background:#f0f0f0'></div>
<div class='a' style='left:7px;top:618px;width:21px;height:20px;background:#e1e1e1;border:1px solid #d0d0d0'></div>
<div class='a' style='left:32px;top:618px;width:21px;height:20px;background:#e1e1e1;border:1px solid #d0d0d0'></div>
<div class='a' style='left:57px;top:618px;width:21px;height:20px;background:#e1e1e1;border:1px solid #d0d0d0'></div>
<div class='hi' style='left:87px;top:617px;width:33px;height:22px;border-color:#3c8fd8'></div>
<div class='a' style='left:124px;top:618px;width:21px;height:20px;background:#e1e1e1;border:1px solid #d0d0d0'></div>
<div class='a' style='left:165px;top:618px;width:134px;height:20px;background:#fff;border:1px solid #7a7a7a'></div>
<div class='a' style='left:306px;top:618px;width:31px;height:20px;background:#e1e1e1;border:1px solid #d0d0d0'></div>
<div class='a' style='left:340px;top:617px;width:23px;height:22px;background:#f00;border:1px solid #111'></div>
<div class='a' style='left:14px;top:644px;width:351px;height:329px;background:#fff;border:1px solid #828790'></div>
<div class='t' style='left:63px;top:652px'>Id</div>
<div class='t' style='left:87px;top:652px'>Name</div>
<div class='t' style='left:136px;top:652px'>T1</div>
<div class='t' style='left:173px;top:652px'>MID</div>
<div class='t' style='left:203px;top:652px'>NIP</div>
<div class='t' style='left:233px;top:652px'>ELFORM</div>
<div class='a' style='left:39px;top:647px;width:1px;height:22px;background:#e5e5e5'></div>
<div class='a' style='left:59px;top:647px;width:1px;height:22px;background:#e5e5e5'></div>
<div class='a' style='left:82px;top:647px;width:1px;height:22px;background:#e5e5e5'></div>
<div class='a' style='left:130px;top:647px;width:1px;height:22px;background:#e5e5e5'></div>
<div class='a' style='left:168px;top:647px;width:1px;height:22px;background:#e5e5e5'></div>
<div class='a' style='left:199px;top:647px;width:1px;height:22px;background:#e5e5e5'></div>
<div class='a' style='left:228px;top:647px;width:1px;height:22px;background:#e5e5e5'></div>
<div class='a' style='left:282px;top:647px;width:1px;height:22px;background:#e5e5e5'></div>
<div class='a' style='left:342px;top:647px;width:21px;height:21px;background:#e6e6e6;border:1px solid #c8c8c8'></div>
<div class='a' style='left:41px;top:672px;width:16px;height:15px;background:#d9534f;border:1px solid #222'></div>
<div class='t' style='left:66px;width:14px;text-align:right;top:674px'>1</div>
<div class='t' style='left:86px;top:674px'>Floor</div><div class='t' style='left:134px;top:674px'>0.001</div>
<div class='t' style='left:180px;width:16px;text-align:right;top:674px'>1</div><div class='t' style='left:203px;top:674px'>2</div>
<div class='t' style='left:260px;width:20px;text-align:right;top:674px'>2</div>
<div class='a' style='left:15px;top:689px;width:268px;height:20px;background:#e9e9e9'></div>
<div class='a' style='left:41px;top:692px;width:16px;height:15px;background:#8d7fa2;border:1px solid #222'></div>
<div class='t' style='left:66px;width:14px;text-align:right;top:694px'>2</div>
<div class='t' style='left:86px;top:694px'>Cylinder</div><div class='t' style='left:134px;top:694px'>0.001</div>
<div class='t' style='left:180px;width:16px;text-align:right;top:694px'>1</div><div class='t' style='left:203px;top:694px'>2</div>
<div class='t' style='left:260px;width:20px;text-align:right;top:694px'>2</div>
<div class='a' style='left:41px;top:712px;width:16px;height:15px;background:#e5ec2e;border:1px solid #222'></div>
<div class='t' style='left:66px;width:14px;text-align:right;top:714px'>3</div>
<div class='t' style='left:86px;top:714px'>Inlet</div><div class='t' style='left:134px;top:714px'>0.001</div>
<div class='t' style='left:180px;width:16px;text-align:right;top:714px'>1</div><div class='t' style='left:203px;top:714px'>2</div>
<div class='t' style='left:260px;width:20px;text-align:right;top:714px'>2</div>
<div class='a' style='left:15px;top:729px;width:268px;height:20px;background:#e9e9e9'></div>
<div class='a' style='left:41px;top:732px;width:16px;height:15px;background:#c8b8cc;border:1px solid #222'></div>
<div class='t' style='left:66px;width:14px;text-align:right;top:734px'>4</div>
<div class='t' style='left:86px;top:734px'>Outlet</div><div class='t' style='left:134px;top:734px'>0.001</div>
<div class='t' style='left:180px;width:16px;text-align:right;top:734px'>1</div><div class='t' style='left:203px;top:734px'>2</div>
<div class='t' style='left:260px;width:20px;text-align:right;top:734px'>2</div>
<div class='a' style='left:41px;top:752px;width:16px;height:15px;background:#db5a30;border:1px solid #222'></div>
<div class='t' style='left:66px;width:14px;text-align:right;top:754px'>5</div>
<div class='t' style='left:86px;top:754px'>Wall</div><div class='t' style='left:134px;top:754px'>0.001</div>
<div class='t' style='left:180px;width:16px;text-align:right;top:754px'>1</div><div class='t' style='left:203px;top:754px'>2</div>
<div class='t' style='left:260px;width:20px;text-align:right;top:754px'>2</div>
<div class='a' style='left:15px;top:769px;width:268px;height:20px;background:#e9e9e9'></div>
<div class='a' style='left:41px;top:772px;width:16px;height:15px;background:#7cf23c;border:1px solid #222'></div>
<div class='t' style='left:66px;width:14px;text-align:right;top:774px'>6</div>
<div class='t' style='left:86px;top:774px'>Roof</div><div class='t' style='left:134px;top:774px'>0.001</div>
<div class='t' style='left:180px;width:16px;text-align:right;top:774px'>1</div><div class='t' style='left:203px;top:774px'>2</div>
<div class='t' style='left:260px;width:20px;text-align:right;top:774px'>2</div>
<div class='a' style='left:4px;top:974px;width:247px;height:15px;background:#fff;border:1px solid #dcdcdc'></div>
<div class='a' style='left:250px;top:974px;width:48px;height:15px;background:#fff;border:1px solid #dcdcdc'></div>
<div class='a' style='left:297px;top:974px;width:68px;height:15px;background:#fff;border:1px solid #dcdcdc'></div>
<div class='t' style='left:9px;top:976px'>SECTION_SHELL</div><div class='t' style='left:256px;top:976px'>total 6</div><div class='t' style='left:303px;top:976px'>selected 0</div>
<div class='a' style='left:5px;top:952px;width:8px;height:20px;background:#e1e1e1;border:1px solid #c8c8c8'></div>
<div class='t' style='left:379px;top:983px;font-size:12px'>Free&gt;Select</div>
<div class='t' style='left:466px;top:983px;font-size:12px'>Browser List</div>
<div class='a' style='left:554px;top:980px;width:1px;height:17px;background:#c8c8c8'></div>
<div class='t' style='left:569px;top:983px;font-size:12px'>Select SECTION_SHELL</div>
<svg class='a' style='left:5.5px;top:1004px' width='9' height='9'><path d='M1,1 L8,8 M8,1 L1,8' stroke='#000' stroke-width='1.6'/></svg>
<div class='t' style='left:3px;top:1075px;font-size:12px;transform:rotate(-90deg);transform-origin:0 0'>Info</div>
<div class='a' style='left:25px;top:1001px;width:561px;height:76px;background:#fff;border:1px solid #828790;overflow:hidden'>
<div class='t' style='left:4px;top:-2px;font-size:12px'>Image saved in Z:/appo/Multi-physics/ICFD_and_FSI/WEBEX/WEBEX_2018/Ansa_ICFD/plots/ansa_i</div>
<div class='t' style='left:4px;top:12px;font-size:12px'>Image saved in Z:/appo/Multi-physics/ICFD_and_FSI/WEBEX/WEBEX_2018/Ansa_ICFD/plots/ansa_i</div>
<div class='t' style='left:4px;top:26px;font-size:12px'>Image saved in Z:/appo/Multi-physics/ICFD_and_FSI/WEBEX/WEBEX_2018/Ansa_ICFD/plots/ansa_i</div>
<div class='a' style='left:543px;top:0;width:17px;height:74px;background:#f0f0f0'></div>
<div class='a' style='left:0;top:57px;width:545px;height:17px;background:#f0f0f0'></div>
<div class='a' style='left:17px;top:59px;width:290px;height:13px;background:#cdcdcd'></div>
<div class='a' style='left:545px;top:31px;width:13px;height:8px;background:#cdcdcd'></div>
<svg class='a' style='left:547px;top:3px' width='9' height='6'><path d='M1,5 L4.5,1.5 L8,5' stroke='#555' stroke-width='1.2' fill='none'/></svg>
<svg class='a' style='left:547px;top:47px' width='9' height='6'><path d='M1,1 L4.5,4.5 L8,1' stroke='#555' stroke-width='1.2' fill='none'/></svg>
<svg class='a' style='left:5px;top:61px' width='6' height='9'><path d='M5,1 L1.5,4.5 L5,8' stroke='#555' stroke-width='1.2' fill='none'/></svg>
<svg class='a' style='left:533px;top:61px' width='6' height='9'><path d='M1,1 L4.5,4.5 L1,8' stroke='#555' stroke-width='1.2' fill='none'/></svg>
<svg class='a' style='left:545px;top:59px' width='13' height='13'><path d='M1,5V1H5M8,1H12V5M12,8V12H8M5,12H1V8' stroke='#333' stroke-width='1.3' fill='none'/><path d='M2,2L5,5M11,2L8,5M11,11L8,8M2,11L5,8' stroke='#333' stroke-width='1'/></svg>
</div>
<div class='title' style='left:1664px;top:56px;width:248px;height:18px'>Modules Buttons</div>
<svg class='a' style='left:1898.5px;top:60.5px' width='9' height='9'><path d='M1,1 L8,8 M8,1 L1,8' stroke='#000' stroke-width='1.6'/></svg>
<div class='a' style='left:1665px;top:77px;width:246px;height:843px;border:1px solid #fff;border-right-color:#dcdcdc;border-bottom-color:#dcdcdc'></div>
<div class='hdr' style='left:1652px;width:200px;text-align:center;top:89px'>Hot Points<span class='tri'></span></div>
<div class='btn' style='left:1827px;top:84px;width:75px;height:22px;'>Info</div>
<div class='btn' style='left:1672px;top:108px;width:75px;height:22px;'>Insert</div>
<div class='btn' style='left:1749px;top:108px;width:76px;height:22px;'>Project</div>
<div class='btn' style='left:1827px;top:108px;width:75px;height:22px;'>Parametrical</div>
<div class='btn' style='left:1672px;top:132px;width:75px;height:22px;'>Delete</div>
<div class='btn' style='left:1749px;top:132px;width:76px;height:22px;'>Mult.Project</div>
<div class='btn' style='left:1827px;top:132px;width:75px;height:22px;'>Mark/Un</div>
<div class='hdr' style='left:1652px;width:200px;text-align:center;top:167px'>Perimeters<span class='tri'></span></div>
<div class='btn' style='left:1827px;top:162px;width:75px;height:22px;'>Info</div>
<div class='btn' style='left:1672px;top:186px;width:75px;height:22px;'>Number</div>
<div class='btn' style='left:1749px;top:186px;width:76px;height:22px;'>Num +/-</div>
<div class='btn' style='left:1827px;top:186px;width:75px;height:22px;padding-right:10px;'>Spacing<span class='tri' style='position:absolute;right:5px;top:5px;margin:0;border-left-width:5px;border-top-width:4px;border-bottom-width:4px'></span></div>
<div class='btn' style='left:1672px;top:210px;width:75px;height:22px;'>Init</div>
<div class='btn' style='left:1749px;top:210px;width:76px;height:22px;'>Length</div>
<div class='btn' style='left:1827px;top:210px;width:75px;height:22px;'>Align</div>
<div class='btn' style='left:1672px;top:234px;width:75px;height:22px;padding-right:10px;'>FE Perim.<span class='tri' style='position:absolute;right:5px;top:5px;margin:0;border-left-width:5px;border-top-width:4px;border-bottom-width:4px'></span></div>
<div class='hdr' style='left:1652px;width:200px;text-align:center;top:269px'>Macros<span class='tri'></span></div>
<div class='btn' style='left:1827px;top:264px;width:75px;height:22px;'>Info</div>
<div class='btn' style='left:1672px;top:288px;width:75px;height:22px;'>Cut</div>
<div class='btn' style='left:1749px;top:288px;width:76px;height:22px;'>Release</div>
<div class='btn' style='left:1827px;top:288px;width:75px;height:22px;padding-right:10px;'>Orient<span class='tri' style='position:absolute;right:5px;top:5px;margin:0;border-left-width:5px;border-top-width:4px;border-bottom-width:4px'></span></div>
<div class='btn' style='left:1672px;top:312px;width:75px;height:22px;'>Join</div>
<div class='btn' style='left:1749px;top:312px;width:76px;height:22px;'>Proj.Cut</div>
<div class='btn' style='left:1827px;top:312px;width:75px;height:22px;'>Edge2Perim.</div>
<div class='btn' style='left:1672px;top:336px;width:75px;height:22px;'>Freeze/Un</div>
<div class='btn' style='left:1749px;top:336px;width:76px;height:22px;'>Set PID</div>
<div class='btn' style='left:1827px;top:336px;width:75px;height:22px;'>Simplify</div>
<div class='hdr' style='left:1652px;width:200px;text-align:center;top:371px'>Grids<span class='tri'></span></div>
<div class='btn' style='left:1827px;top:366px;width:75px;height:22px;'>Info</div>
<div class='btn' style='left:1672px;top:390px;width:75px;height:22px;'>Move</div>
<div class='btn' style='left:1749px;top:390px;width:76px;height:22px;'>Origin</div>
<div class='btn' style='left:1827px;top:390px;width:75px;height:22px;'>Align</div>
<div class='btn' style='left:1672px;top:414px;width:75px;height:22px;padding-right:10px;'>Paste<span class='tri' style='position:absolute;right:5px;top:5px;margin:0;border-left-width:5px;border-top-width:4px;border-bottom-width:4px'></span></div>
<div class='btn' style='left:1749px;top:414px;width:76px;height:22px;padding-right:10px;'>New<span class='tri' style='position:absolute;right:5px;top:5px;margin:0;border-left-width:5px;border-top-width:4px;border-bottom-width:4px'></span></div>
<div class='btn' style='left:1827px;top:414px;width:75px;height:22px;padding-right:10px;'>Thickness<span class='tri' style='position:absolute;right:5px;top:5px;margin:0;border-left-width:5px;border-top-width:4px;border-bottom-width:4px'></span></div>
<div class='hdr' style='left:1652px;width:200px;text-align:center;top:449px'>Mesh Generation<span class='tri'></span></div>
<div class='btn' style='left:1672px;top:467px;width:75px;height:22px;padding-right:10px;background:#cce4f7;border-color:#0078d7'>Free<span style='position:absolute;right:4px;top:6px;width:0;height:0;border-top:7px solid #000;border-left:4.5px solid transparent;border-right:4.5px solid transparent'></span></div>
<div class='btn' style='left:1749px;top:467px;width:76px;height:22px;padding-right:10px;'>Remesh<span class='tri' style='position:absolute;right:5px;top:5px;margin:0;border-left-width:5px;border-top-width:4px;border-bottom-width:4px'></span></div>
<div class='btn' style='left:1827px;top:467px;width:75px;height:22px;padding-right:10px;'>Batch<span class='tri' style='position:absolute;right:5px;top:5px;margin:0;border-left-width:5px;border-top-width:4px;border-bottom-width:4px'></span></div>
<div class='btn' style='left:1672px;top:491px;width:75px;height:22px;padding-right:10px;'>Spot Mesh<span class='tri' style='position:absolute;right:5px;top:5px;margin:0;border-left-width:5px;border-top-width:4px;border-bottom-width:4px'></span></div>
<div class='btn' style='left:1749px;top:491px;width:76px;height:22px;padding-right:10px;'>Erase<span class='tri' style='position:absolute;right:5px;top:5px;margin:0;border-left-width:5px;border-top-width:4px;border-bottom-width:4px'></span></div>
<div class='btn' style='left:1827px;top:491px;width:75px;height:22px;padding-right:10px;'>CFD<span class='tri' style='position:absolute;right:5px;top:5px;margin:0;border-left-width:5px;border-top-width:4px;border-bottom-width:4px'></span></div>
<div class='btn' style='left:1672px;top:514px;width:75px;height:22px;padding-right:10px;'>Map<span class='tri' style='position:absolute;right:5px;top:5px;margin:0;border-left-width:5px;border-top-width:4px;border-bottom-width:4px'></span></div>
<div class='btn' style='left:1749px;top:514px;width:76px;height:22px;padding-right:10px;'>Adv.Front<span class='tri' style='position:absolute;right:5px;top:5px;margin:0;border-left-width:5px;border-top-width:4px;border-bottom-width:4px'></span></div>
<div class='btn' style='left:1827px;top:514px;width:75px;height:22px;padding-right:10px;'>STL<span class='tri' style='position:absolute;right:5px;top:5px;margin:0;border-left-width:5px;border-top-width:4px;border-bottom-width:4px'></span></div>
<div class='hdr' style='left:1652px;width:200px;text-align:center;top:548px'>Shell Mesh<span class='tri'></span></div>
<div class='btn' style='left:1672px;top:566px;width:75px;height:22px;'>Improve</div>
<div class='btn' style='left:1749px;top:566px;width:76px;height:22px;padding-right:10px;'>Fill<span class='tri' style='position:absolute;right:5px;top:5px;margin:0;border-left-width:5px;border-top-width:4px;border-bottom-width:4px'></span></div>
<div class='btn' style='left:1827px;top:566px;width:75px;height:22px;padding-right:10px;'>Intersect<span class='tri' style='position:absolute;right:5px;top:5px;margin:0;border-left-width:5px;border-top-width:4px;border-bottom-width:4px'></span></div>
<div class='btn' style='left:1672px;top:589px;width:75px;height:22px;padding-right:10px;'>Project<span class='tri' style='position:absolute;right:5px;top:5px;margin:0;border-left-width:5px;border-top-width:4px;border-bottom-width:4px'></span></div>
<div class='btn' style='left:1749px;top:589px;width:76px;height:22px;padding-right:10px;'>Refine<span class='tri' style='position:absolute;right:5px;top:5px;margin:0;border-left-width:5px;border-top-width:4px;border-bottom-width:4px'></span></div>
<div class='btn' style='left:1827px;top:589px;width:75px;height:22px;'>Zone Cut</div>
<div class='hdr' style='left:1652px;width:200px;text-align:center;top:623px'>Elements<span class='tri'></span></div>
<div class='btn' style='left:1827px;top:618px;width:75px;height:22px;padding-right:10px;'>Info<span class='tri' style='position:absolute;right:5px;top:5px;margin:0;border-left-width:5px;border-top-width:4px;border-bottom-width:4px'></span></div>
<div class='btn' style='left:1672px;top:642px;width:75px;height:22px;padding-right:10px;'>Split<span class='tri' style='position:absolute;right:5px;top:5px;margin:0;border-left-width:5px;border-top-width:4px;border-bottom-width:4px'></span></div>
<div class='btn' style='left:1749px;top:642px;width:76px;height:22px;'>Swap</div>
<div class='btn' style='left:1827px;top:642px;width:75px;height:22px;padding-right:10px;'>New<span class='tri' style='position:absolute;right:5px;top:5px;margin:0;border-left-width:5px;border-top-width:4px;border-bottom-width:4px'></span></div>
<div class='btn' style='left:1672px;top:666px;width:75px;height:22px;'>Join</div>
<div class='btn' style='left:1749px;top:666px;width:76px;height:22px;'>Stitch</div>
<div class='btn' style='left:1827px;top:666px;width:75px;height:22px;'>Delete</div>
<div class='btn' style='left:1672px;top:690px;width:75px;height:22px;'>Release</div>
<div class='btn' style='left:1749px;top:690px;width:76px;height:22px;padding-right:10px;'>To Surface<span class='tri' style='position:absolute;right:5px;top:5px;margin:0;border-left-width:5px;border-top-width:4px;border-bottom-width:4px'></span></div>
<div class='btn' style='left:1827px;top:690px;width:75px;height:22px;padding-right:10px;'>Wrap<span class='tri' style='position:absolute;right:5px;top:5px;margin:0;border-left-width:5px;border-top-width:4px;border-bottom-width:4px'></span></div>
<div class='btn' style='left:1672px;top:714px;width:75px;height:22px;padding-right:10px;'>Create<span class='tri' style='position:absolute;right:5px;top:5px;margin:0;border-left-width:5px;border-top-width:4px;border-bottom-width:4px'></span></div>
<div class='btn' style='left:1749px;top:714px;width:76px;height:22px;padding-right:10px;'>Extrude<span class='tri' style='position:absolute;right:5px;top:5px;margin:0;border-left-width:5px;border-top-width:4px;border-bottom-width:4px'></span></div>
<div class='btn' style='left:1827px;top:714px;width:75px;height:22px;padding-right:10px;'>Vol.Shell<span class='tri' style='position:absolute;right:5px;top:5px;margin:0;border-left-width:5px;border-top-width:4px;border-bottom-width:4px'></span></div>
<div class='title' style='left:1664px;top:925px;width:248px;height:18px'>Options List</div>
<svg class='a' style='left:1898.5px;top:928.5px' width='9' height='9'><path d='M1,1 L8,8 M8,1 L1,8' stroke='#000' stroke-width='1.6'/></svg>
<div class='a' style='left:1666px;top:947px;width:242px;height:130px;background:#fff;border:1px solid #828790'></div>
<svg class='a' style='left:380px;top:23px' width='3' height='28'><g fill='#a8a8a8'><rect x='0' y='0' width='1' height='1'/><rect x='2' y='0' width='1' height='1'/><rect x='0' y='3' width='1' height='1'/><rect x='2' y='3' width='1' height='1'/><rect x='0' y='6' width='1' height='1'/><rect x='2' y='6' width='1' height='1'/><rect x='0' y='9' width='1' height='1'/><rect x='2' y='9' width='1' height='1'/><rect x='0' y='12' width='1' height='1'/><rect x='2' y='12' width='1' height='1'/><rect x='0' y='15' width='1' height='1'/><rect x='2' y='15' width='1' height='1'/><rect x='0' y='18' width='1' height='1'/><rect x='2' y='18' width='1' height='1'/><rect x='0' y='21' width='1' height='1'/><rect x='2' y='21' width='1' height='1'/><rect x='0' y='24' width='1' height='1'/><rect x='2' y='24' width='1' height='1'/><rect x='0' y='27' width='1' height='1'/><rect x='2' y='27' width='1' height='1'/></g></svg>
<svg class='a' style='left:388px;top:23px' width='24' height='24' viewBox='0 0 24 24'><rect x='1' y='1' width='22' height='22' fill='#fafafa' stroke='#333' stroke-width='1.3'/><path d='M12,1V23M1,12H23' stroke='#333' stroke-width='1.2'/><circle cx='6.5' cy='6.5' r='3' fill='#5060b8' stroke='#333' stroke-width='0.7'/><rect x='14.5' y='4' width='5.5' height='5.5' fill='#fff' stroke='#333'/><path d='M3.5,20 L6.5,14.5 L9.5,20Z' fill='#bbb' stroke='#333'/><path d='M17.5,14 L20.5,17.5 L17.5,21 L14.5,17.5Z' fill='#5a78d8' stroke='#333' stroke-width='0.7'/></svg>
<svg class='a' style='left:419px;top:23px' width='24' height='24' viewBox='0 0 24 24'><rect x='1' y='2' width='10' height='10' fill='#d8d8d8' stroke='#333'/><rect x='11' y='12' width='10' height='10' fill='#aaa' stroke='#333'/><path d='M1,12 H11 V22 H1Z' fill='#7c95e8' stroke='#333'/><path d='M13,3 L21,1 L23,9 L15,12Z' fill='#4a5cae' stroke='#333'/></svg>
<svg class='a' style='left:452px;top:23px' width='24' height='24' viewBox='0 0 24 24'><rect x='2' y='1' width='18' height='21' fill='#f8f8f8' stroke='#333' stroke-width='1.2'/><rect x='2.5' y='1.5' width='17' height='2.5' fill='#5b6bbf'/><path d='M2,8H20M2,15H20' stroke='#333'/><path d='M7,6H15M7,12H15M7,19H15' stroke='#6070d0' stroke-width='1.2'/><path d='M18,20 H23 L20.5,23Z' fill='#111'/></svg>
<svg class='a' style='left:481px;top:23px' width='24' height='24' viewBox='0 0 24 24'><rect x='1.5' y='1.5' width='21' height='20' rx='1' fill='#f4f4f4' stroke='#222' stroke-width='1.3'/><rect x='2' y='2' width='20' height='3' fill='#5b6bbf'/><text x='12' y='19.5' text-anchor='middle' font-family='"Liberation Serif",serif' font-style='italic' font-weight='bold' font-size='18' fill='#111'>P</text></svg>
<svg class='a' style='left:512px;top:23px' width='24' height='24' viewBox='0 0 24 24'><rect x='1.5' y='1.5' width='21' height='20' rx='1' fill='#f4f4f4' stroke='#222' stroke-width='1.3'/><rect x='2' y='2' width='20' height='3' fill='#5b6bbf'/><text x='12' y='19.5' text-anchor='middle' font-family='"Liberation Serif",serif' font-style='italic' font-weight='bold' font-size='18' fill='#111'>M</text></svg>
<svg class='a' style='left:543px;top:23px' width='24' height='24' viewBox='0 0 24 24'><rect x='1.5' y='1.5' width='21' height='20' rx='1' fill='#f4f4f4' stroke='#222' stroke-width='1.3'/><rect x='2' y='2' width='20' height='3' fill='#5b6bbf'/><text x='12' y='19.5' text-anchor='middle' font-family='"Liberation Serif",serif' font-style='italic' font-weight='bold' font-size='18' fill='#111'>S</text></svg>
<svg class='a' style='left:574px;top:23px' width='24' height='24' viewBox='0 0 24 24'><rect x='1.5' y='1.5' width='21' height='20' rx='1' fill='#f4f4f4' stroke='#222' stroke-width='1.3'/><rect x='2' y='2' width='20' height='3' fill='#5b6bbf'/><text x='12' y='19.5' text-anchor='middle' font-family='"Liberation Serif",serif' font-style='italic' font-weight='bold' font-size='18' fill='#111'>I</text></svg>
<div class='a' style='left:602px;top:20px;width:31px;height:29px;background:#cce4f7;border:1px solid #99d1ff'></div>
<svg class='a' style='left:605px;top:23px' width='24' height='24' viewBox='0 0 24 24'><rect x='2' y='2' width='19' height='18' fill='#cde3f8' stroke='#222' stroke-width='1.3'/><rect x='2.5' y='2.5' width='18' height='3' fill='#5060b8'/><rect x='12' y='13' width='11' height='10' fill='#fff' stroke='#222' stroke-width='1.2'/><text x='13.5' y='21.5' font-family='"Liberation Sans",sans-serif' font-weight='bold' font-size='9' fill='#111'>t</text><rect x='19' y='15' width='2.5' height='2.5' fill='#5060b8'/><rect x='19' y='19' width='2.5' height='2.5' fill='#5060b8'/></svg>
<svg class='a' style='left:635px;top:28px' width='9' height='14' viewBox='0 0 9 14'><path d='M1.5,1.5 L7,7 L1.5,12.5' stroke='#111' stroke-width='1.8' fill='none'/></svg>
<svg class='a' style='left:659px;top:23px' width='3' height='28'><g fill='#a8a8a8'><rect x='0' y='0' width='1' height='1'/><rect x='2' y='0' width='1' height='1'/><rect x='0' y='3' width='1' height='1'/><rect x='2' y='3' width='1' height='1'/><rect x='0' y='6' width='1' height='1'/><rect x='2' y='6' width='1' height='1'/><rect x='0' y='9' width='1' height='1'/><rect x='2' y='9' width='1' height='1'/><rect x='0' y='12' width='1' height='1'/><rect x='2' y='12' width='1' height='1'/><rect x='0' y='15' width='1' height='1'/><rect x='2' y='15' width='1' height='1'/><rect x='0' y='18' width='1' height='1'/><rect x='2' y='18' width='1' height='1'/><rect x='0' y='21' width='1' height='1'/><rect x='2' y='21' width='1' height='1'/><rect x='0' y='24' width='1' height='1'/><rect x='2' y='24' width='1' height='1'/><rect x='0' y='27' width='1' height='1'/><rect x='2' y='27' width='1' height='1'/></g></svg>
<svg class='a' style='left:667px;top:23px' width='24' height='24' viewBox='0 0 24 24'><rect x='1' y='1' width='16' height='21' fill='#e8e8e8' stroke='#333' stroke-width='1.2'/><path d='M6.5,1V22M12,1V22M1,8H17M1,15H17' stroke='#333'/><circle cx='16' cy='16' r='6.5' fill='none' stroke='#3a9a2a' stroke-width='3.6' stroke-dasharray='3.2 3.2'/><circle cx='16' cy='16' r='4.9' fill='none' stroke='#3a9a2a' stroke-width='3.2'/></svg>
<svg class='a' style='left:699px;top:23px' width='24' height='24' viewBox='0 0 24 24'><path d='M1,7 L8,1 L23,4 L16,10Z' fill='#e0e0e0' stroke='#555'/><path d='M1,7 L4,20 L16,10Z' fill='#3a9a2a'/><circle cx='13' cy='15' r='7' fill='none' stroke='#3a9a2a' stroke-width='3.9' stroke-dasharray='3.5 3.5'/><circle cx='13' cy='15' r='5.2' fill='none' stroke='#3a9a2a' stroke-width='3.5'/></svg>
<svg class='a' style='left:729px;top:23px' width='24' height='24' viewBox='0 0 24 24'><rect x='8' y='1' width='13' height='18' fill='#fff' stroke='#333'/><rect x='8.5' y='1.5' width='12' height='2' fill='#3a9a2a'/><rect x='2' y='5' width='14' height='17' fill='#fff' stroke='#333'/><rect x='2.5' y='5.5' width='13' height='2' fill='#3a9a2a'/><path d='M5,11H13M5,14H13M5,17H11' stroke='#555'/><circle cx='10' cy='14' r='5' fill='none' stroke='#3a9a2a' stroke-width='1.8'/><path d='M6,18 L2,23' stroke='#3a9a2a' stroke-width='2'/><path d='M20,20H24L22,22Z' fill='#111'/></svg>
<svg class='a' style='left:762px;top:23px' width='24' height='24' viewBox='0 0 24 24'><rect x='2' y='3' width='18' height='20' fill='#ececec' stroke='#333' stroke-width='1.2'/><rect x='6' y='1' width='10' height='4' fill='#3a9a2a'/><path d='M5,11H9M5,18H9' stroke='#333' stroke-width='1.3'/><path d='M11,11 L13,13 L17,8M11,18 L13,20 L17,15' stroke='#3ab82a' stroke-width='1.5' fill='none'/></svg>
<svg class='a' style='left:792px;top:23px' width='24' height='24' viewBox='0 0 24 24'><path d='M4,1 H19 V21 H4Z' fill='#f6f6f6' stroke='#333'/><path d='M1,21 H19 L21,23 H3Z' fill='#e0e0e0' stroke='#333'/><path d='M7,5H16M7,8H16M7,11H16M7,14H16M7,17H16' stroke='#3ab82a' stroke-width='1.2'/><path d='M20,2V21' stroke='#222'/><path d='M18,20H23L20.5,23Z' fill='#111'/></svg>
<svg class='a' style='left:823px;top:23px' width='24' height='24' viewBox='0 0 24 24'><rect x='5' y='1' width='18' height='16' rx='2' fill='#e8e8e8' stroke='#2a9a1a' stroke-width='2.2'/><rect x='8' y='17' width='8' height='5' fill='#2a9a1a'/><rect x='3' y='8' width='9' height='14' rx='1.5' fill='#e8e8e8' stroke='#2a9a1a' stroke-width='2'/><rect x='1' y='13' width='5' height='9' rx='1' fill='#fff' stroke='#2a9a1a' stroke-width='1.5'/></svg>
<svg class='a' style='left:866px;top:23px' width='24' height='24' viewBox='0 0 24 24'><rect x='1' y='1' width='22' height='17' rx='2' fill='#e8e8e8' stroke='#2a9a1a' stroke-width='2.5'/><rect x='4' y='4' width='16' height='3' fill='#555'/><circle cx='12' cy='12' r='3.5' fill='#ccc' stroke='#777'/><rect x='8' y='18' width='8' height='3' fill='#2a9a1a'/><rect x='4' y='21' width='16' height='2.5' fill='#2a9a1a'/></svg>
<svg class='a' style='left:909px;top:23px' width='24' height='24' viewBox='0 0 24 24'><rect x='1' y='1' width='20' height='21' fill='#f0f0f0' stroke='#222' stroke-width='1.3'/><path d='M4,11 L9,17 L19,4' stroke='#2aa81a' stroke-width='3.2' fill='none'/><path d='M18,21H23L20.5,23.5Z' fill='#111'/></svg>
<svg class='a' style='left:940px;top:23px' width='24' height='24' viewBox='0 0 24 24'><path d='M22,1 L9,15' stroke='#333' stroke-width='3' stroke-linecap='round'/><path d='M10,14 C7,13 4,17 1,22 C6,22 11,19 10,14Z' fill='#4ac02a'/></svg>
<svg class='a' style='left:852px;top:34px' width='8' height='5' viewBox='0 0 8 5'><path d='M0,0 H8 L4,4 Z' fill='#222'/></svg>
<svg class='a' style='left:895px;top:34px' width='8' height='5' viewBox='0 0 8 5'><path d='M0,0 H8 L4,4 Z' fill='#222'/></svg>
<svg class='a' style='left:968px;top:28px' width='9' height='14' viewBox='0 0 9 14'><path d='M1.5,1.5 L7,7 L1.5,12.5' stroke='#111' stroke-width='1.8' fill='none'/></svg>
<svg class='a' style='left:997px;top:23px' width='3' height='28'><g fill='#a8a8a8'><rect x='0' y='0' width='1' height='1'/><rect x='2' y='0' width='1' height='1'/><rect x='0' y='3' width='1' height='1'/><rect x='2' y='3' width='1' height='1'/><rect x='0' y='6' width='1' height='1'/><rect x='2' y='6' width='1' height='1'/><rect x='0' y='9' width='1' height='1'/><rect x='2' y='9' width='1' height='1'/><rect x='0' y='12' width='1' height='1'/><rect x='2' y='12' width='1' height='1'/><rect x='0' y='15' width='1' height='1'/><rect x='2' y='15' width='1' height='1'/><rect x='0' y='18' width='1' height='1'/><rect x='2' y='18' width='1' height='1'/><rect x='0' y='21' width='1' height='1'/><rect x='2' y='21' width='1' height='1'/><rect x='0' y='24' width='1' height='1'/><rect x='2' y='24' width='1' height='1'/><rect x='0' y='27' width='1' height='1'/><rect x='2' y='27' width='1' height='1'/></g></svg>
<svg class='a' style='left:1005px;top:23px' width='24' height='24' viewBox='0 0 24 24'><rect x='1' y='1' width='16' height='14' fill='none' stroke='#333' stroke-width='1.2' stroke-dasharray='2.5 1.5'/><circle cx='10.5' cy='10.5' r='7.5' fill='#e8e8e8' stroke='#444' stroke-width='1.5'/><path d='M16,16 L22,22' stroke='#444' stroke-width='3'/></svg>
<svg class='a' style='left:1036px;top:23px' width='24' height='24' viewBox='0 0 24 24'><circle cx='10' cy='10' r='8.5' fill='#eaeaea' stroke='#444' stroke-width='1.5'/><path d='M5,8V5H8M12,5H15V8M15,12V15H12M8,15H5V12' stroke='#333' stroke-width='1.2' fill='none'/><path d='M16,16 L22,22' stroke='#444' stroke-width='3'/></svg>
<svg class='a' style='left:1068px;top:28px' width='9' height='14' viewBox='0 0 9 14'><path d='M1.5,1.5 L7,7 L1.5,12.5' stroke='#111' stroke-width='1.8' fill='none'/></svg>
<svg class='a' style='left:1091px;top:23px' width='3' height='28'><g fill='#a8a8a8'><rect x='0' y='0' width='1' height='1'/><rect x='2' y='0' width='1' height='1'/><rect x='0' y='3' width='1' height='1'/><rect x='2' y='3' width='1' height='1'/><rect x='0' y='6' width='1' height='1'/><rect x='2' y='6' width='1' height='1'/><rect x='0' y='9' width='1' height='1'/><rect x='2' y='9' width='1' height='1'/><rect x='0' y='12' width='1' height='1'/><rect x='2' y='12' width='1' height='1'/><rect x='0' y='15' width='1' height='1'/><rect x='2' y='15' width='1' height='1'/><rect x='0' y='18' width='1' height='1'/><rect x='2' y='18' width='1' height='1'/><rect x='0' y='21' width='1' height='1'/><rect x='2' y='21' width='1' height='1'/><rect x='0' y='24' width='1' height='1'/><rect x='2' y='24' width='1' height='1'/><rect x='0' y='27' width='1' height='1'/><rect x='2' y='27' width='1' height='1'/></g></svg>
<svg class='a' style='left:1103px;top:23px' width='24' height='24' viewBox='0 0 24 24'><path d='M15,22 C20,16 18,8 10,8 V4 L2,10 L10,16 V12 C15,12 16,17 15,22Z' fill='#e8c05a' stroke='#555' stroke-width='1'/></svg>
<svg class='a' style='left:1128px;top:34px' width='8' height='5' viewBox='0 0 8 5'><path d='M0,0 H8 L4,4 Z' fill='#222'/></svg>
<svg class='a' style='left:1140px;top:23px' width='24' height='24' viewBox='0 0 24 24'><path d='M7,22 C2,16 4,8 12,8 V4 L20,10 L12,16 V12 C7,12 6,17 7,22Z' fill='#bdbdbd' stroke='#999' stroke-width='1'/></svg>
<svg class='a' style='left:1172px;top:34px' width='8' height='5' viewBox='0 0 8 5'><path d='M0,0 H8 L4,4 Z' fill='#999'/></svg>
<svg class='a' style='left:1186px;top:23px' width='24' height='24' viewBox='0 0 24 24'><rect x='1' y='2' width='14' height='20' fill='#e6e6e6' stroke='#333' stroke-width='1.2'/><path d='M5.5,2V22M10,2V22M1,8H15M1,15H15' stroke='#333'/><path d='M20,1V14' stroke='#222' stroke-width='1.5'/><rect x='18' y='14' width='4' height='9' rx='1' fill='#e8b050' stroke='#222'/></svg>
<svg class='a' style='left:1216px;top:23px' width='24' height='24' viewBox='0 0 24 24'><rect x='1' y='2' width='22' height='20' fill='#f2f2f2' stroke='#333' stroke-width='1.2'/><path d='M6,5V19M12,5V19M18,5V19' stroke='#555'/><rect x='3.5' y='13' width='5' height='2.5' fill='#e0902a'/><rect x='9.5' y='7' width='5' height='2.5' fill='#e0902a'/><rect x='15.5' y='10' width='5' height='2.5' fill='#e0902a'/></svg>
<svg class='a' style='left:1250px;top:23px' width='24' height='24' viewBox='0 0 24 24'><rect x='1' y='1' width='18' height='4' fill='#e8b050' stroke='#555'/><path d='M3,6 H17 L16,22 H4Z' fill='#eee' stroke='#444' stroke-width='1.2'/><path d='M7,8V20M10,8V20M13,8V20' stroke='#444' stroke-width='1.5'/></svg>
<svg class='a' style='left:1278px;top:23px' width='24' height='24' viewBox='0 0 24 24'><circle cx='12' cy='12' r='7' fill='none' stroke='#333' stroke-width='1.5'/><path d='M12,1V8M12,16V23M1,12H8M16,12H23' stroke='#e8b050' stroke-width='2.5'/><path d='M12,1V8M12,16V23M1,12H8M16,12H23' stroke='#333' stroke-width='0.6'/><path d='M19,21H24L21.5,23.5Z' fill='#111'/></svg>
<svg class='a' style='left:1310px;top:23px' width='24' height='24' viewBox='0 0 24 24'><path d='M4,4 H14 V20 H4 C1,20 1,4 4,4Z' fill='#f0b060' stroke='#555'/><ellipse cx='15' cy='12' rx='5' ry='10' fill='#e8a070' stroke='#555'/><ellipse cx='15' cy='12' rx='2.5' ry='6' fill='#f0f020' stroke='#555'/><path d='M18,21H23L20.5,23.5Z' fill='#111'/></svg>
<svg class='a' style='left:1340px;top:23px' width='24' height='24' viewBox='0 0 24 24'><path d='M12,1 L16,6 H14 V10 H18 V8 L23,12 L18,16 V14 H14 V18 H16 L12,23 L8,18 H10 V14 H6 V16 L1,12 L6,8 V10 H10 V6 H8Z' fill='#f8c880' stroke='#333' stroke-width='1'/><path d='M19,21H24L21.5,23.5Z' fill='#111'/></svg>
<svg class='a' style='left:1371px;top:23px' width='24' height='24' viewBox='0 0 24 24'><path d='M4,2V22M1,2H7M1,22H7' stroke='#222' stroke-width='1.5'/><path d='M4,2 L2,5 H6Z M4,22 L2,19 H6Z' fill='#222'/><rect x='10' y='1' width='12' height='22' fill='#f0b860' stroke='#333' stroke-width='1.2'/><path d='M13,4H17M13,7H16M13,10H17M13,13H16M13,16H17M13,19H16' stroke='#333'/></svg>
<svg class='a' style='left:1401px;top:28px' width='9' height='14' viewBox='0 0 9 14'><path d='M1.5,1.5 L7,7 L1.5,12.5' stroke='#111' stroke-width='1.8' fill='none'/></svg>
<svg class='a' style='left:1427px;top:23px' width='3' height='28'><g fill='#a8a8a8'><rect x='0' y='0' width='1' height='1'/><rect x='2' y='0' width='1' height='1'/><rect x='0' y='3' width='1' height='1'/><rect x='2' y='3' width='1' height='1'/><rect x='0' y='6' width='1' height='1'/><rect x='2' y='6' width='1' height='1'/><rect x='0' y='9' width='1' height='1'/><rect x='2' y='9' width='1' height='1'/><rect x='0' y='12' width='1' height='1'/><rect x='2' y='12' width='1' height='1'/><rect x='0' y='15' width='1' height='1'/><rect x='2' y='15' width='1' height='1'/><rect x='0' y='18' width='1' height='1'/><rect x='2' y='18' width='1' height='1'/><rect x='0' y='21' width='1' height='1'/><rect x='2' y='21' width='1' height='1'/><rect x='0' y='24' width='1' height='1'/><rect x='2' y='24' width='1' height='1'/><rect x='0' y='27' width='1' height='1'/><rect x='2' y='27' width='1' height='1'/></g></svg>
<svg class='a' style='left:1434px;top:23px' width='24' height='24' viewBox='0 0 24 24'><path d='M3,4 C2,8 5,11 8,10 L20,22 L23,19 L11,7 C12,4 9,1 5,2 L8,5 L6,7Z' fill='#e0e0e0' stroke='#c060c0' stroke-width='1.3'/></svg>
<svg class='a' style='left:1466px;top:23px' width='24' height='24' viewBox='0 0 24 24'><rect x='1' y='2' width='16' height='21' rx='1' fill='#e0e0e0' stroke='#333' stroke-width='1.2'/><path d='M3,6H14M3,9H14M3,12H12M3,15H10' stroke='#c060c0' stroke-width='1.2'/><path d='M9,17 L21,3 L24,6 L12,19 L8,20Z' fill='#f0d0f0' stroke='#c060c0' stroke-width='1.2'/></svg>
<svg class='a' style='left:1497px;top:23px' width='24' height='24' viewBox='0 0 24 24'><path d='M9,1H17L13,5Z M9,23H17L13,19Z' fill='#f0c0f0' stroke='#c060c0'/><path d='M5,7H23M1,17H19' stroke='#333' stroke-width='1.2'/><circle cx='13' cy='12' r='3.5' fill='#c060c0'/><path d='M19,21H24L21.5,23.5Z' fill='#111'/></svg>
<svg class='a' style='left:1530px;top:23px' width='24' height='24' viewBox='0 0 24 24'><path d='M1,9 H19 M14,4 L20,9' stroke='#c060c0' stroke-width='2.5' fill='none'/><path d='M23,15 H5 M10,20 L4,15' stroke='#444' stroke-width='2.5' fill='none'/><path d='M19,21H24L21.5,23.5Z' fill='#111'/></svg>
<svg class='a' style='left:1560px;top:23px' width='24' height='24' viewBox='0 0 24 24'><path d='M6,2 L14,1 L20,6 L17,11 L10,10Z' fill='#f0d0f0' stroke='#c060c0' stroke-width='1.3'/><path d='M10,10 L4,21 L8,23 L14,11' fill='#f0d0f0' stroke='#c060c0' stroke-width='1.3'/></svg>
<svg class='a' style='left:1590px;top:23px' width='24' height='24' viewBox='0 0 24 24'><path d='M1,20 L12,5 L15,8 L5,23 L1,23Z' fill='#b040b0'/><path d='M12,5 L23,13 V23 L15,14Z' fill='#e0b0e0' stroke='#444'/><circle cx='13' cy='7' r='2.5' fill='#e0b0e0' stroke='#444'/><path d='M19,21H24L21.5,23.5Z' fill='#111'/></svg>
<svg class='a' style='left:1621px;top:28px' width='9' height='14' viewBox='0 0 9 14'><path d='M1.5,1.5 L7,7 L1.5,12.5' stroke='#111' stroke-width='1.8' fill='none'/></svg>
<svg class='a' style='left:1662px;top:23px' width='3' height='28'><g fill='#a8a8a8'><rect x='0' y='0' width='1' height='1'/><rect x='2' y='0' width='1' height='1'/><rect x='0' y='3' width='1' height='1'/><rect x='2' y='3' width='1' height='1'/><rect x='0' y='6' width='1' height='1'/><rect x='2' y='6' width='1' height='1'/><rect x='0' y='9' width='1' height='1'/><rect x='2' y='9' width='1' height='1'/><rect x='0' y='12' width='1' height='1'/><rect x='2' y='12' width='1' height='1'/><rect x='0' y='15' width='1' height='1'/><rect x='2' y='15' width='1' height='1'/><rect x='0' y='18' width='1' height='1'/><rect x='2' y='18' width='1' height='1'/><rect x='0' y='21' width='1' height='1'/><rect x='2' y='21' width='1' height='1'/><rect x='0' y='24' width='1' height='1'/><rect x='2' y='24' width='1' height='1'/><rect x='0' y='27' width='1' height='1'/><rect x='2' y='27' width='1' height='1'/></g></svg>
<svg class='a' style='left:1670px;top:23px' width='24' height='24' viewBox='0 0 24 24'><path d='M1,8 L8,1 L23,11 L16,22Z' fill='#e8f060' stroke='#f05020' stroke-width='1.5'/><path d='M5,7 L19,16' stroke='#30c030' stroke-width='1.5' stroke-dasharray='3 2'/></svg>
<div class='a' style='left:1698px;top:20px;width:31px;height:29px;background:#cce4f7;border:1px solid #99d1ff'></div>
<svg class='a' style='left:1702px;top:23px' width='24' height='24' viewBox='0 0 24 24'><path d='M1,10 Q7,5 13,3.5 L23,12 Q18,16 15,21.5Z' fill='#f4f4f4' stroke='#111' stroke-width='1.6' stroke-linejoin='round'/><path d='M5.0,7.8L17.7,18.3M5.7,13.8L16.3,6.3M9.0,5.7L20.3,15.2M10.3,17.7L19.7,9.2' stroke='#222' stroke-width='0.9' fill='none'/></svg>
<svg class='a' style='left:1732px;top:23px' width='24' height='24' viewBox='0 0 24 24'><path d='M1,10 Q7,5 13,3.5 L23,12 V16 L15,23 L1,14Z' fill='#d8d8d8' stroke='#111' stroke-width='1.5' stroke-linejoin='round'/><path d='M1,10 V14 M23,12 Q18,16 15,19.5 V23 M15,19.5 L1,10' stroke='#111' stroke-width='1.2' fill='none'/><path d='M5.0,7.8L17.7,17.0M5.7,13.2L16.3,6.3M9.0,5.7L20.3,14.5M10.3,16.3L19.7,9.2' stroke='#222' stroke-width='0.8' fill='none'/></svg>
<svg class='a' style='left:1762px;top:23px' width='24' height='24' viewBox='0 0 24 24'><path d='M1,1 H5 V17 H11 V23 H1Z M7,1 H13 V4 H9 V8 H13 V21 H7 V17 H10 V11 H7Z M15,1 H24 V5 H19 V19 H24 V23 H15Z M21,8 H24 V16 H21Z' fill='#0a0af0'/></svg>
<svg class='a' style='left:1806px;top:23px' width='24' height='24' viewBox='0 0 24 24'><path d='M2,9 C8,3 15,2 20,7 L23,15 L16,23 C12,16 8,13 2,14Z M2,9 L2,14 M20,7 L16,13 L16,23 M8,5 L5,12' stroke='#20a020' stroke-width='1.5' fill='none'/><g fill='#107010'><circle cx='2' cy='9' r='1.3'/><circle cx='20' cy='7' r='1.3'/><circle cx='16' cy='23' r='1.3'/><circle cx='23' cy='15' r='1.3'/></g></svg>
<svg class='a' style='left:1836px;top:23px' width='24' height='24' viewBox='0 0 24 24'><path d='M1,9 C7,3 15,2 20,6 L23,12 V19 L15,23 L1,14Z' fill='#d0d0d0' stroke='#2a7ae8' stroke-width='1.6'/><path d='M1,14 L15,18 L23,12 M15,18V23 M8,5 L12,14 M14,3 L18,13 M4,11 L20,8' stroke='#666' stroke-width='0.8' fill='none'/></svg>
<svg class='a' style='left:1868px;top:23px' width='24' height='24' viewBox='0 0 24 24'><path d='M4,12 L19,3 M4,12 L19,12 M4,12 L18,18 M4,12 L16,23' stroke='#4a5aae' stroke-width='1.3'/><circle cx='4' cy='12' r='3.2' fill='#2a3a9e'/><circle cx='19' cy='3' r='2.5' fill='#2a3a9e'/><circle cx='19' cy='12' r='2.5' fill='#6a7ac8'/><circle cx='18' cy='18' r='2.3' fill='#8a9ad0'/><circle cx='16' cy='22' r='2' fill='#b0b8e0'/></svg>
<svg class='a' style='left:1793px;top:34px' width='8' height='5' viewBox='0 0 8 5'><path d='M0,0 H8 L4,4 Z' fill='#222'/></svg>
<svg class='a' style='left:1897px;top:28px' width='9' height='14' viewBox='0 0 9 14'><path d='M1.5,1.5 L7,7 L1.5,12.5' stroke='#111' stroke-width='1.8' fill='none'/></svg>
<svg class='a' style='left:594px;top:1004px' width='3' height='31'><g fill='#a8a8a8'><rect x='0' y='0' width='1' height='1'/><rect x='2' y='0' width='1' height='1'/><rect x='0' y='3' width='1' height='1'/><rect x='2' y='3' width='1' height='1'/><rect x='0' y='6' width='1' height='1'/><rect x='2' y='6' width='1' height='1'/><rect x='0' y='9' width='1' height='1'/><rect x='2' y='9' width='1' height='1'/><rect x='0' y='12' width='1' height='1'/><rect x='2' y='12' width='1' height='1'/><rect x='0' y='15' width='1' height='1'/><rect x='2' y='15' width='1' height='1'/><rect x='0' y='18' width='1' height='1'/><rect x='2' y='18' width='1' height='1'/><rect x='0' y='21' width='1' height='1'/><rect x='2' y='21' width='1' height='1'/><rect x='0' y='24' width='1' height='1'/><rect x='2' y='24' width='1' height='1'/><rect x='0' y='27' width='1' height='1'/><rect x='2' y='27' width='1' height='1'/><rect x='0' y='30' width='1' height='1'/><rect x='2' y='30' width='1' height='1'/></g></svg>
<svg class='a' style='left:594px;top:1045px' width='3' height='31'><g fill='#a8a8a8'><rect x='0' y='0' width='1' height='1'/><rect x='2' y='0' width='1' height='1'/><rect x='0' y='3' width='1' height='1'/><rect x='2' y='3' width='1' height='1'/><rect x='0' y='6' width='1' height='1'/><rect x='2' y='6' width='1' height='1'/><rect x='0' y='9' width='1' height='1'/><rect x='2' y='9' width='1' height='1'/><rect x='0' y='12' width='1' height='1'/><rect x='2' y='12' width='1' height='1'/><rect x='0' y='15' width='1' height='1'/><rect x='2' y='15' width='1' height='1'/><rect x='0' y='18' width='1' height='1'/><rect x='2' y='18' width='1' height='1'/><rect x='0' y='21' width='1' height='1'/><rect x='2' y='21' width='1' height='1'/><rect x='0' y='24' width='1' height='1'/><rect x='2' y='24' width='1' height='1'/><rect x='0' y='27' width='1' height='1'/><rect x='2' y='27' width='1' height='1'/><rect x='0' y='30' width='1' height='1'/><rect x='2' y='30' width='1' height='1'/></g></svg>
<div class='a' style='left:630px;top:1004px;width:31px;height:29px;background:#cce4f7;border:1px solid #99d1ff'></div>
<svg class='a' style='left:602px;top:1006px' width='24' height='24' viewBox='0 0 24 24'><rect x='1' y='2' width='18' height='13' fill='none' stroke='#111' stroke-width='1.3' stroke-dasharray='2.5 1.5'/><path d='M15,12 L15,23 L18,20 L21,24 L23,23 L20,19 L24,19Z' fill='#111'/></svg>
<svg class='a' style='left:634px;top:1006px' width='24' height='24' viewBox='0 0 24 24'><ellipse cx='12' cy='7' rx='7' ry='4.5' fill='none' stroke='#111' stroke-width='1.2' stroke-dasharray='2 1.5'/><path d='M11,5 L11,14 L13,12 L15,15 L16,14 L14,11 L17,11Z' fill='#111'/><text x='12' y='24' text-anchor='middle' font-family='"Liberation Sans",sans-serif' font-weight='bold' font-size='12' textLength='23' lengthAdjust='spacingAndGlyphs' fill='#111'>ENT</text></svg>
<svg class='a' style='left:664px;top:1006px' width='24' height='24' viewBox='0 0 24 24'><ellipse cx='12' cy='6' rx='7' ry='4.5' fill='none' stroke='#111' stroke-width='1.2' stroke-dasharray='2 1.5'/><path d='M11,4 L11,13 L13,11 L15,14 L16,13 L14,10 L17,10Z' fill='#111'/><text x='12' y='23' text-anchor='middle' font-family='"Liberation Sans",sans-serif' font-weight='bold' font-size='12' textLength='22' lengthAdjust='spacingAndGlyphs' fill='#111'>PID</text></svg>
<svg class='a' style='left:694px;top:1017px' width='8' height='5' viewBox='0 0 8 5'><path d='M0,0 H8 L4,4 Z' fill='#222'/></svg>
<svg class='a' style='left:707px;top:1006px' width='24' height='24' viewBox='0 0 24 24'><rect x='12' y='1' width='10' height='14' fill='#e0a8a8' stroke='#555'/><rect x='7' y='4' width='10' height='14' fill='#d8a0a0' stroke='#555'/><rect x='1' y='7' width='11' height='15' rx='1' fill='#a02a2a' stroke='#111' stroke-width='1.2'/></svg>
<svg class='a' style='left:738px;top:1006px' width='24' height='24' viewBox='0 0 24 24'><path d='M2,11 L10,2 L14,5 L22,5 L21,15 L10,22Z' fill='none' stroke='#e01010' stroke-width='2.2'/></svg>
<div class='a' style='left:766px;top:1004px;width:43px;height:29px;background:#cce4f7;border:1px solid #99d1ff'></div><div class='a' style='left:796px;top:1004px;width:1px;height:29px;background:#99d1ff'></div>
<svg class='a' style='left:770px;top:1006px' width='24' height='24' viewBox='0 0 24 24'><path d='M2,23 V16 L10,8 L18,16 L12,23Z' fill='#f8f800' stroke='#333' stroke-width='1'/><path d='M10,8 L15,2 M14,12 L22,5 M12,10 L19,3' stroke='#555' stroke-width='1' fill='none'/></svg>
<svg class='a' style='left:799px;top:1017px' width='8' height='5' viewBox='0 0 8 5'><path d='M0,0 H8 L4,4 Z' fill='#222'/></svg>
<div class='a' style='left:599px;top:1045px;width:93px;height:29px;background:#cce4f7;border:1px solid #99d1ff'></div><div class='a' style='left:629px;top:1045px;width:1px;height:29px;background:#99d1ff'></div><div class='a' style='left:660px;top:1045px;width:1px;height:29px;background:#99d1ff'></div>
<svg class='a' style='left:603px;top:1047px' width='24' height='24' viewBox='0 0 24 24'><circle cx='12' cy='12' r='10.5' fill='#e8a0f0' stroke='#222' stroke-width='1'/></svg>
<svg class='a' style='left:634px;top:1047px' width='24' height='24' viewBox='0 0 24 24'><path d='M12,2 H22 V23 H12 L1,18 V7Z' fill='#e8a0f0' stroke='#222' stroke-width='1.2'/><path d='M12,2V23M12,12H22M1,7 L12,12 L1,18' stroke='#222' fill='none'/></svg>
<svg class='a' style='left:665px;top:1047px' width='24' height='24' viewBox='0 0 24 24'><path d='M1,13 L7,8 H13 L18,3 H24 V10 L16,17 L7,17 V22 H1Z' fill='#e8a0f0' stroke='#222' stroke-width='1.2'/><path d='M1,13 H7 V22 M7,13 L13,8 M7,17 L16,10 H24 M16,10V17' stroke='#222' fill='none'/></svg>
<svg class='a' style='left:696px;top:1047px' width='24' height='24' viewBox='0 0 24 24'><path d='M1,8H9M5,4V12 M13,5H22M17.5,1V9 M9,17H17M13,13V22' stroke='#222' stroke-width='3.2'/><path d='M1,8H9M5,4V12 M13,5H22M17.5,1V9 M9,17H17M13,13V22' stroke='#e8a0f0' stroke-width='1.6'/></svg>
<svg class='a' style='left:724px;top:1058px' width='8' height='5' viewBox='0 0 8 5'><path d='M0,0 H8 L4,4 Z' fill='#222'/></svg>
<svg class='a' style='left:741px;top:1047px' width='24' height='24' viewBox='0 0 24 24'><path d='M1,1 H17 V5 H12 V19 H17 V23 H1 V19 H6 V5 H1Z' fill='#e8a0f0' stroke='#222' stroke-width='1.2'/></svg>
<div class='a' style='left:766px;top:1045px;width:43px;height:29px;background:#cce4f7;border:1px solid #99d1ff'></div><div class='a' style='left:796px;top:1045px;width:1px;height:29px;background:#99d1ff'></div>
<svg class='a' style='left:770px;top:1047px' width='24' height='24' viewBox='0 0 24 24'><circle cx='12' cy='12' r='10.5' fill='#e8a0f0'/><path d='M1,6H23M1,10H23M1,14H23M1,18H23M9,3V21M15,3V21' stroke='#222' stroke-width='1.2'/></svg>
<svg class='a' style='left:799px;top:1058px' width='8' height='5' viewBox='0 0 8 5'><path d='M0,0 H8 L4,4 Z' fill='#222'/></svg>
<svg class='a' style='left:810px;top:1053px' width='9' height='14' viewBox='0 0 9 14'><path d='M1.5,1.5 L7,7 L1.5,12.5' stroke='#111' stroke-width='1.8' fill='none'/></svg>
<svg class='a' style='left:948px;top:1004px' width='3' height='31'><g fill='#a8a8a8'><rect x='0' y='0' width='1' height='1'/><rect x='2' y='0' width='1' height='1'/><rect x='0' y='3' width='1' height='1'/><rect x='2' y='3' width='1' height='1'/><rect x='0' y='6' width='1' height='1'/><rect x='2' y='6' width='1' height='1'/><rect x='0' y='9' width='1' height='1'/><rect x='2' y='9' width='1' height='1'/><rect x='0' y='12' width='1' height='1'/><rect x='2' y='12' width='1' height='1'/><rect x='0' y='15' width='1' height='1'/><rect x='2' y='15' width='1' height='1'/><rect x='0' y='18' width='1' height='1'/><rect x='2' y='18' width='1' height='1'/><rect x='0' y='21' width='1' height='1'/><rect x='2' y='21' width='1' height='1'/><rect x='0' y='24' width='1' height='1'/><rect x='2' y='24' width='1' height='1'/><rect x='0' y='27' width='1' height='1'/><rect x='2' y='27' width='1' height='1'/><rect x='0' y='30' width='1' height='1'/><rect x='2' y='30' width='1' height='1'/></g></svg>
<svg class='a' style='left:948px;top:1045px' width='3' height='31'><g fill='#a8a8a8'><rect x='0' y='0' width='1' height='1'/><rect x='2' y='0' width='1' height='1'/><rect x='0' y='3' width='1' height='1'/><rect x='2' y='3' width='1' height='1'/><rect x='0' y='6' width='1' height='1'/><rect x='2' y='6' width='1' height='1'/><rect x='0' y='9' width='1' height='1'/><rect x='2' y='9' width='1' height='1'/><rect x='0' y='12' width='1' height='1'/><rect x='2' y='12' width='1' height='1'/><rect x='0' y='15' width='1' height='1'/><rect x='2' y='15' width='1' height='1'/><rect x='0' y='18' width='1' height='1'/><rect x='2' y='18' width='1' height='1'/><rect x='0' y='21' width='1' height='1'/><rect x='2' y='21' width='1' height='1'/><rect x='0' y='24' width='1' height='1'/><rect x='2' y='24' width='1' height='1'/><rect x='0' y='27' width='1' height='1'/><rect x='2' y='27' width='1' height='1'/><rect x='0' y='30' width='1' height='1'/><rect x='2' y='30' width='1' height='1'/></g></svg>
<svg class='a' style='left:961px;top:1013px' width='15' height='15' viewBox='0 0 15 15'><path d='M2,13 L13,2' stroke='#222' stroke-width='3'/></svg>
<svg class='a' style='left:990px;top:1011px' width='17' height='17' viewBox='0 0 17 17'><path d='M0,8.5H17M8.5,0V17' stroke='#222' stroke-width='3.5'/></svg>
<svg class='a' style='left:1022px;top:1011px' width='17' height='17' viewBox='0 0 17 17'><path d='M0,8.5H17' stroke='#222' stroke-width='3.5'/></svg>
<svg class='a' style='left:1051px;top:1011px' width='20' height='17' viewBox='0 0 20 17'><path d='M2,0V11' stroke='#222' stroke-width='3'/><rect x='0.5' y='13' width='3' height='3' fill='#222'/><path d='M9,8H19' stroke='#222' stroke-width='3.5'/></svg>
<svg class='a' style='left:1083px;top:1011px' width='18' height='18' viewBox='0 0 18 18'><rect x='0' y='0' width='8' height='8' fill='#222'/><rect x='10' y='0' width='8' height='8' fill='#222'/><rect x='0' y='10' width='8' height='8' fill='#222'/><rect x='10' y='10' width='8' height='8' fill='#222'/></svg>
<svg class='a' style='left:1114px;top:1010px' width='19' height='20' viewBox='0 0 19 20'><rect x='7' y='8' width='12' height='12' fill='#222'/><rect x='0.75' y='0.75' width='11' height='11' fill='#fff' stroke='#222' stroke-width='1.5'/></svg>
<svg class='a' style='left:1145px;top:1010px' width='19' height='19' viewBox='0 0 19 19'><path d='M4,9 V6 A5.5,5.5 0 0 1 15,6 V9' fill='none' stroke='#222' stroke-width='2'/><rect x='0.5' y='8' width='18' height='11' fill='#222'/><circle cx='9.5' cy='12' r='1.8' fill='#fff'/><rect x='8.7' y='12' width='1.6' height='4' fill='#fff'/></svg>
<svg class='a' style='left:1173px;top:1018px' width='8' height='5' viewBox='0 0 8 5'><path d='M0,0 H8 L4,4 Z' fill='#222'/></svg>
<svg class='a' style='left:1185px;top:1008px' width='24' height='24' viewBox='0 0 24 24'><path d='M4,4 L12,10 L20,6 M12,10 L7,21 M4,4 L8,3 L14,5 L20,6 M4,4 L3,12 L7,21' stroke='#222' stroke-width='1.2' fill='none'/><circle cx='12' cy='10' r='4.5' fill='#222'/><circle cx='4' cy='4' r='2.2' fill='#222'/><circle cx='20' cy='6' r='2.2' fill='#222'/><circle cx='7' cy='21' r='2.2' fill='#222'/><circle cx='3' cy='12' r='1.6' fill='#222'/><circle cx='9' cy='3' r='1.6' fill='#222'/><path d='M18,21H23L20.5,23.5Z' fill='#111'/></svg>
<svg class='a' style='left:1219px;top:1011px' width='18' height='18' viewBox='0 0 18 18'><rect x='0' y='0' width='11' height='11' fill='#222'/><rect x='6' y='6' width='12' height='12' fill='#222' stroke='#f0f0f0' stroke-width='1'/></svg>
<svg class='a' style='left:1245px;top:1013px' width='9' height='14' viewBox='0 0 9 14'><path d='M1.5,1.5 L7,7 L1.5,12.5' stroke='#111' stroke-width='1.8' fill='none'/></svg>
<div class='a' style='left:953px;top:1045px;width:31px;height:29px;background:#cce4f7;border:1px solid #99d1ff'></div>
<svg class='a' style='left:957px;top:1047px' width='22' height='24' viewBox='0 0 22 24'><path d='M2,8 L8,2 L19,8 L11,21Z' fill='#e8e080' stroke='#777' stroke-width='0.8'/><g fill='#fff' stroke='#111' stroke-width='1'><rect x='6.5' y='0.5' width='3' height='3'/><rect x='0.5' y='6.5' width='3' height='3'/><rect x='17.5' y='6.5' width='3' height='3'/><rect x='9.5' y='19.5' width='3' height='3'/></g></svg>
<svg class='a' style='left:987px;top:1047px' width='24' height='24' viewBox='0 0 24 24'><path d='M1,9 L9,1 L22,8 L11,22Z' fill='#e8e080' stroke='#bbb' stroke-width='0.8'/><path d='M4,4 L8,8 M14,14 L18,18 M16,3 L12,7 M8,15 L4,19 M10,11H13M11.5,9.5V12.5' stroke='#30c030' stroke-width='1.2'/></svg>
<div class='a' style='left:1015px;top:1045px;width:179px;height:29px;background:#cce4f7;border:1px solid #99d1ff'></div><div class='a' style='left:1045px;top:1045px;width:1px;height:29px;background:#99d1ff'></div><div class='a' style='left:1059px;top:1045px;width:1px;height:29px;background:#99d1ff'></div><div class='a' style='left:1090px;top:1045px;width:1px;height:29px;background:#99d1ff'></div><div class='a' style='left:1121px;top:1045px;width:1px;height:29px;background:#99d1ff'></div><div class='a' style='left:1151px;top:1045px;width:1px;height:29px;background:#99d1ff'></div><div class='a' style='left:1162px;top:1045px;width:1px;height:29px;background:#99d1ff'></div>
<svg class='a' style='left:1019px;top:1047px' width='24' height='24' viewBox='0 0 24 24'><path d='M1,9 L9,2 L22,9 L11,22Z' fill='#e8e080'/><path d='M4,16 L13,4' stroke='#30c030' stroke-width='1.2'/><circle cx='13' cy='4' r='3' fill='#fff' stroke='#111'/><circle cx='4' cy='16' r='3' fill='#fff' stroke='#111'/></svg>
<svg class='a' style='left:1048px;top:1058px' width='8' height='5' viewBox='0 0 8 5'><path d='M0,0 H8 L4,4 Z' fill='#222'/></svg>
<svg class='a' style='left:1062px;top:1047px' width='24' height='24' viewBox='0 0 24 24'><path d='M1,10 L9,2 L23,9 L11,22Z' fill='#e8e080' stroke='#30a030' stroke-width='1.5'/><path d='M5,16 L14,5' stroke='#30a030' stroke-width='1.5'/></svg>
<svg class='a' style='left:1093px;top:1047px' width='24' height='24' viewBox='0 0 24 24'><path d='M1,8 L11,1 L23,9 L12,22Z' fill='#e8e080' stroke='#f02020' stroke-width='1.8'/></svg>
<svg class='a' style='left:1124px;top:1047px' width='24' height='24' viewBox='0 0 24 24'><path d='M1,10 L9,2 L23,9 L11,22Z' fill='#e8e080' stroke='#a0a020' stroke-width='1.5'/><path d='M5,16 L14,5' stroke='#a0a020' stroke-width='1.5'/></svg>
<svg class='a' style='left:1153px;top:1058px' width='8' height='5' viewBox='0 0 8 5'><path d='M0,0 H8 L4,4 Z' fill='#222'/></svg>
<svg class='a' style='left:1166px;top:1047px' width='24' height='24' viewBox='0 0 24 24'><path d='M1,10 L10,2 L23,9 L12,22 Z' fill='#e8e080' stroke='#2a6ab8' stroke-width='1.5'/><path d='M4,14 L12,7 L22,9' stroke='#2a6ab8' stroke-width='1.5' fill='none'/></svg>
<svg class='a' style='left:1302px;top:1004px' width='3' height='31'><g fill='#a8a8a8'><rect x='0' y='0' width='1' height='1'/><rect x='2' y='0' width='1' height='1'/><rect x='0' y='3' width='1' height='1'/><rect x='2' y='3' width='1' height='1'/><rect x='0' y='6' width='1' height='1'/><rect x='2' y='6' width='1' height='1'/><rect x='0' y='9' width='1' height='1'/><rect x='2' y='9' width='1' height='1'/><rect x='0' y='12' width='1' height='1'/><rect x='2' y='12' width='1' height='1'/><rect x='0' y='15' width='1' height='1'/><rect x='2' y='15' width='1' height='1'/><rect x='0' y='18' width='1' height='1'/><rect x='2' y='18' width='1' height='1'/><rect x='0' y='21' width='1' height='1'/><rect x='2' y='21' width='1' height='1'/><rect x='0' y='24' width='1' height='1'/><rect x='2' y='24' width='1' height='1'/><rect x='0' y='27' width='1' height='1'/><rect x='2' y='27' width='1' height='1'/><rect x='0' y='30' width='1' height='1'/><rect x='2' y='30' width='1' height='1'/></g></svg>
<svg class='a' style='left:1302px;top:1045px' width='3' height='31'><g fill='#a8a8a8'><rect x='0' y='0' width='1' height='1'/><rect x='2' y='0' width='1' height='1'/><rect x='0' y='3' width='1' height='1'/><rect x='2' y='3' width='1' height='1'/><rect x='0' y='6' width='1' height='1'/><rect x='2' y='6' width='1' height='1'/><rect x='0' y='9' width='1' height='1'/><rect x='2' y='9' width='1' height='1'/><rect x='0' y='12' width='1' height='1'/><rect x='2' y='12' width='1' height='1'/><rect x='0' y='15' width='1' height='1'/><rect x='2' y='15' width='1' height='1'/><rect x='0' y='18' width='1' height='1'/><rect x='2' y='18' width='1' height='1'/><rect x='0' y='21' width='1' height='1'/><rect x='2' y='21' width='1' height='1'/><rect x='0' y='24' width='1' height='1'/><rect x='2' y='24' width='1' height='1'/><rect x='0' y='27' width='1' height='1'/><rect x='2' y='27' width='1' height='1'/><rect x='0' y='30' width='1' height='1'/><rect x='2' y='30' width='1' height='1'/></g></svg>
<svg class='a' style='left:1310px;top:1006px' width='26' height='24' viewBox='0 0 26 24'><path d='M6,2 L12,0 L17,3 L17,9 L11,12 L6,9Z' fill='#f05050'/><path d='M6,2 L11,5 L17,3 M11,5 V12' stroke='#c02020' stroke-width='0.6' fill='none'/><text x='0' y='23' font-family='"Liberation Sans",sans-serif' font-weight='bold' font-size='10' fill='#111'>PID</text><path d='M20,18H25L22.5,21Z' fill='#111'/></svg>
<div class='a' style='left:1338px;top:1004px;width:31px;height:29px;background:#cce4f7;border:1px solid #99d1ff'></div>
<svg class='a' style='left:1342px;top:1007px' width='24' height='24' viewBox='0 0 24 24'><path d='M2,6 L11,2 L21,5 L20,17 L11,22 L3,18Z' fill='#3a90e8' stroke='#111' stroke-width='1.5'/><path d='M2,6 L11,9 L21,5 M11,9 V22' stroke='#111' stroke-width='1.2' fill='none'/><path d='M3,7 L11,9 L11,22 L3,18Z' fill='#1a70c8'/></svg>
<svg class='a' style='left:1372px;top:1007px' width='24' height='24' viewBox='0 0 24 24'><path d='M2,6 L11,2 L21,5 L20,17 L11,22 L3,18Z' fill='#fff' stroke='#111' stroke-width='1.5'/><path d='M2,6 L11,9 L21,5 M11,9 V22' stroke='#111' stroke-width='1.2' fill='none'/><rect x='12' y='10' width='4' height='5' fill='#2a90e0'/><rect x='16' y='14' width='4' height='5' fill='#2a90e0'/></svg>
<svg class='a' style='left:1403px;top:1007px' width='24' height='24' viewBox='0 0 24 24'><defs><linearGradient id='rb' x1='0' y1='0' x2='1' y2='1'><stop offset='0' stop-color='#ff2020'/><stop offset='0.35' stop-color='#f0f020'/><stop offset='0.6' stop-color='#20c020'/><stop offset='1' stop-color='#2040f0'/></linearGradient></defs><path d='M2,6 L11,2 L21,5 L20,17 L11,22 L3,18Z' fill='url(#rb)' stroke='#111' stroke-width='1.2'/><path d='M2,6 L11,9 L21,5 M11,9 V22' stroke='#111' stroke-width='1.2' fill='none'/></svg>
<svg class='a' style='left:1432px;top:1017px' width='8' height='5' viewBox='0 0 8 5'><path d='M0,0 H8 L4,4 Z' fill='#222'/></svg>
<div class='a' style='left:1443px;top:1004px;width:31px;height:29px;background:#cce4f7;border:1px solid #99d1ff'></div>
<svg class='a' style='left:1447px;top:1007px' width='24' height='24' viewBox='0 0 24 24'><path d='M2,6 L11,2 L21,5 L20,17 L11,22 L3,18Z' fill='#c8dcef' stroke='#222' stroke-width='1.3'/><path d='M2,6 L11,9 L21,5 M11,9 V22 M6,4 L16,7 M16,3 L7,8 M2,12 L11,15 L20,11 M7,8V20 M16,7V19' stroke='#222' stroke-width='1' fill='none'/></svg>
<svg class='a' style='left:1478px;top:1007px' width='24' height='24' viewBox='0 0 24 24'><path d='M2,6 L11,2 L21,5 L20,17 L11,22 L3,18Z M2,6 L11,9 L21,5 M11,9 V22 M6,4 L6,16 L11,22 M6,16 L20,17' stroke='#e02020' stroke-width='1' fill='none'/></svg>
<svg class='a' style='left:1507px;top:1017px' width='8' height='5' viewBox='0 0 8 5'><path d='M0,0 H8 L4,4 Z' fill='#222'/></svg>
<svg class='a' style='left:1521px;top:1007px' width='24' height='24' viewBox='0 0 24 24'><path d='M2,6 L11,2 L21,5 L20,17 L11,22 L3,18Z' fill='#fff' stroke='#111' stroke-width='1.3'/><path d='M2,6 L11,9 L21,5 M11,9 V22' stroke='#111' stroke-width='1.2' fill='none'/><circle cx='16' cy='16' r='5.5' fill='none' stroke='#555' stroke-width='3.0' stroke-dasharray='2.8 2.8'/><circle cx='16' cy='16' r='4.1' fill='none' stroke='#555' stroke-width='2.8'/></svg>
<svg class='a' style='left:1550px;top:1017px' width='8' height='5' viewBox='0 0 8 5'><path d='M0,0 H8 L4,4 Z' fill='#222'/></svg>
<svg class='a' style='left:1562px;top:1012px' width='9' height='14' viewBox='0 0 9 14'><path d='M1.5,1.5 L7,7 L1.5,12.5' stroke='#111' stroke-width='1.8' fill='none'/></svg>
<div class='a' style='left:1307px;top:1045px;width:31px;height:29px;background:#cce4f7;border:1px solid #99d1ff'></div>
<svg class='a' style='left:1311px;top:1047px' width='24' height='24' viewBox='0 0 24 24'><path d='M2,9 C7,5 14,4 22,8 V18 L14,22 L2,18Z M2,9 L14,13 L22,8 M14,13V22 M2,14 C7,11 14,12 22,13 M8,6 L8,20' stroke='#20a020' stroke-width='1.2' fill='none'/><g fill='#fff' stroke='#20a020'><rect x='1' y='8' width='2' height='2'/><rect x='13' y='12' width='2' height='2'/><rect x='21' y='7' width='2' height='2'/><rect x='1' y='17' width='2' height='2'/><rect x='13' y='21' width='2' height='2'/><rect x='21' y='17' width='2' height='2'/><rect x='7' y='5' width='2' height='2'/></g></svg>
<svg class='a' style='left:1341px;top:1047px' width='24' height='24' viewBox='0 0 24 24'><path d='M1,8 C6,3 14,2 23,5 V18 L13,22 C10,16 5,14 1,14Z' fill='#60d090' stroke='#208020' stroke-width='1'/><path d='M1,8 C6,8 10,10 13,12 L23,7 M13,12V22' stroke='#208020' fill='none'/><path d='M13,12 L23,7 V18 L13,22Z' fill='#a0e8c0'/></svg>
<svg class='a' style='left:1372px;top:1047px' width='24' height='24' viewBox='0 0 24 24'><path d='M1,8 C6,3 14,2 23,5 V18 L13,22 L1,17Z' fill='#f4f4f4' stroke='#208020' stroke-width='1.2'/><path d='M1,8 L13,12 L23,6 M13,12V22' stroke='#208020' fill='none'/><path d='M5,9h3M15,6h3M6,14h3M16,14h3M9,18h2M17,18h2' stroke='#222' stroke-width='1.2'/></svg>
<svg class='a' style='left:1402px;top:1053px' width='9' height='14' viewBox='0 0 9 14'><path d='M1.5,1.5 L7,7 L1.5,12.5' stroke='#111' stroke-width='1.8' fill='none'/></svg>
<svg class='a' style='left:1432px;top:1045px' width='3' height='31'><g fill='#a8a8a8'><rect x='0' y='0' width='1' height='1'/><rect x='2' y='0' width='1' height='1'/><rect x='0' y='3' width='1' height='1'/><rect x='2' y='3' width='1' height='1'/><rect x='0' y='6' width='1' height='1'/><rect x='2' y='6' width='1' height='1'/><rect x='0' y='9' width='1' height='1'/><rect x='2' y='9' width='1' height='1'/><rect x='0' y='12' width='1' height='1'/><rect x='2' y='12' width='1' height='1'/><rect x='0' y='15' width='1' height='1'/><rect x='2' y='15' width='1' height='1'/><rect x='0' y='18' width='1' height='1'/><rect x='2' y='18' width='1' height='1'/><rect x='0' y='21' width='1' height='1'/><rect x='2' y='21' width='1' height='1'/><rect x='0' y='24' width='1' height='1'/><rect x='2' y='24' width='1' height='1'/><rect x='0' y='27' width='1' height='1'/><rect x='2' y='27' width='1' height='1'/><rect x='0' y='30' width='1' height='1'/><rect x='2' y='30' width='1' height='1'/></g></svg>
<div class='a' style='left:1437px;top:1045px;width:93px;height:29px;background:#cce4f7;border:1px solid #99d1ff'></div><div class='a' style='left:1468px;top:1045px;width:1px;height:29px;background:#99d1ff'></div><div class='a' style='left:1499px;top:1045px;width:1px;height:29px;background:#99d1ff'></div>
<svg class='a' style='left:1441px;top:1047px' width='24' height='24' viewBox='0 0 24 24'><path d='M6,16 L19,2 L22,5 L9,19 L5,20Z' fill='#e8e8e8' stroke='#555' stroke-width='1'/><path d='M5,20 L6,16 L9,19Z' fill='#e8b040'/><path d='M4,19 C0,23 6,24 10,21 C14,18 16,22 22,21' stroke='#222' stroke-width='1.2' fill='none'/></svg>
<svg class='a' style='left:1472px;top:1047px' width='24' height='24' viewBox='0 0 24 24'><defs><linearGradient id='sq' x1='0' y1='0' x2='0' y2='1'><stop offset='0' stop-color='#fff'/><stop offset='1' stop-color='#aaa'/></linearGradient></defs><rect x='3' y='4' width='16' height='16' fill='url(#sq)' stroke='#222' stroke-width='1.3'/><rect x='9' y='10' width='4' height='4' fill='#111'/></svg>
<svg class='a' style='left:1503px;top:1047px' width='24' height='24' viewBox='0 0 24 24'><path d='M2,20 C5,10 9,4 12,9 C15,15 18,17 22,7' stroke='#222' stroke-width='1.5' fill='none'/></svg>
<svg class='a' style='left:1533px;top:1047px' width='24' height='24' viewBox='0 0 24 24'><path d='M1,21 L6,14 H24 L19,21Z' fill='#fff' stroke='#222' stroke-width='1.2'/><path d='M5,19 L12,12 V3 M12,10 H22' stroke='#222' stroke-width='1.2' fill='none'/></svg>
<svg class='a' style='left:1562px;top:1053px' width='9' height='14' viewBox='0 0 9 14'><path d='M1.5,1.5 L7,7 L1.5,12.5' stroke='#111' stroke-width='1.8' fill='none'/></svg>
<svg class='a' style='left:8px;top:47px' width='16' height='16' viewBox='0 0 16 16'><g stroke='#222' stroke-width='0.8'><path d='M8,0.5V2.5M2.5,3L4,4.5M13.5,3L12,4.5M0.5,8.5H2.5M13.5,8.5H15.5'/></g><circle cx='8' cy='8' r='4.3' fill='#ffe020' stroke='#a08000' stroke-width='0.7'/><circle cx='8' cy='7.3' r='1.8' fill='#fff8a0'/><rect x='6' y='12' width='4' height='3' rx='1' fill='#222'/></svg>
<svg class='a' style='left:68px;top:44px' width='7' height='5' viewBox='0 0 7 5'><path d='M0,4 L3.5,0 L7,4Z' fill='#111'/></svg>
<svg class='a' style='left:19px;top:648px' width='16' height='16' viewBox='0 0 16 16'><g stroke='#222' stroke-width='0.8'><path d='M8,0.5V2.5M2.5,3L4,4.5M13.5,3L12,4.5M0.5,8.5H2.5M13.5,8.5H15.5'/></g><circle cx='8' cy='8' r='4.3' fill='#ffe020' stroke='#a08000' stroke-width='0.7'/><circle cx='8' cy='7.3' r='1.8' fill='#fff8a0'/><rect x='6' y='12' width='4' height='3' rx='1' fill='#222'/></svg>
<svg class='a' style='left:68px;top:645px' width='7' height='5' viewBox='0 0 7 5'><path d='M0,4 L3.5,0 L7,4Z' fill='#111'/></svg>
<svg class='a' style='left:19px;top:672px' width='16' height='16' viewBox='0 0 16 16'><g stroke='#222' stroke-width='0.8'><path d='M8,0.5V2.5M2.5,3L4,4.5M13.5,3L12,4.5M0.5,8.5H2.5M13.5,8.5H15.5'/></g><circle cx='8' cy='8' r='4.3' fill='#ffe020' stroke='#a08000' stroke-width='0.7'/><circle cx='8' cy='7.3' r='1.8' fill='#fff8a0'/><rect x='6' y='12' width='4' height='3' rx='1' fill='#222'/></svg>
<svg class='a' style='left:19px;top:692px' width='16' height='16' viewBox='0 0 16 16'><g stroke='#222' stroke-width='0.8'><path d='M8,0.5V2.5M2.5,3L4,4.5M13.5,3L12,4.5M0.5,8.5H2.5M13.5,8.5H15.5'/></g><circle cx='8' cy='8' r='4.3' fill='#ffe020' stroke='#a08000' stroke-width='0.7'/><circle cx='8' cy='7.3' r='1.8' fill='#fff8a0'/><rect x='6' y='12' width='4' height='3' rx='1' fill='#222'/></svg>
<svg class='a' style='left:19px;top:712px' width='16' height='16' viewBox='0 0 16 16'><g stroke='#222' stroke-width='0.8'><path d='M8,0.5V2.5M2.5,3L4,4.5M13.5,3L12,4.5M0.5,8.5H2.5M13.5,8.5H15.5'/></g><circle cx='8' cy='8' r='4.3' fill='#ffe020' stroke='#a08000' stroke-width='0.7'/><circle cx='8' cy='7.3' r='1.8' fill='#fff8a0'/><rect x='6' y='12' width='4' height='3' rx='1' fill='#222'/></svg>
<svg class='a' style='left:19px;top:732px' width='16' height='16' viewBox='0 0 16 16'><g stroke='#222' stroke-width='0.8'><path d='M8,0.5V2.5M2.5,3L4,4.5M13.5,3L12,4.5M0.5,8.5H2.5M13.5,8.5H15.5'/></g><circle cx='8' cy='8' r='4.3' fill='#ffe020' stroke='#a08000' stroke-width='0.7'/><circle cx='8' cy='7.3' r='1.8' fill='#fff8a0'/><rect x='6' y='12' width='4' height='3' rx='1' fill='#222'/></svg>
<svg class='a' style='left:19px;top:752px' width='16' height='16' viewBox='0 0 16 16'><g stroke='#222' stroke-width='0.8'><path d='M8,0.5V2.5M2.5,3L4,4.5M13.5,3L12,4.5M0.5,8.5H2.5M13.5,8.5H15.5'/></g><path d='M3.7,8 A4.3,4.3 0 0 1 12.3,8Z' fill='#ffe020'/><path d='M3.7,8 A4.3,4.3 0 0 0 12.3,8Z' fill='#8a8a8a'/><rect x='6' y='12' width='4' height='3' rx='1' fill='#222'/></svg>
<svg class='a' style='left:19px;top:772px' width='16' height='16' viewBox='0 0 16 16'><g stroke='#222' stroke-width='0.8'><path d='M8,0.5V2.5M2.5,3L4,4.5M13.5,3L12,4.5M0.5,8.5H2.5M13.5,8.5H15.5'/></g><circle cx='8' cy='8' r='4.3' fill='#ffe020' stroke='#a08000' stroke-width='0.7'/><circle cx='8' cy='7.3' r='1.8' fill='#fff8a0'/><rect x='6' y='12' width='4' height='3' rx='1' fill='#222'/></svg>
<svg class='a' style='left:10px;top:620px' width='16' height='16' viewBox='0 0 16 16'><path d='M15,8H2M7,3L2,8L7,13' stroke='#aaa' stroke-width='1.6' fill='none'/></svg>
<svg class='a' style='left:35px;top:620px' width='16' height='16' viewBox='0 0 16 16'><path d='M1,8H14M9,3L14,8L9,13' stroke='#aaa' stroke-width='1.6' fill='none'/></svg>
<svg class='a' style='left:59px;top:619px' width='17' height='17' viewBox='0 0 17 17'><path d='M14,6 A6.5,6.5 0 1 0 14,11' stroke='#555' stroke-width='1.8' fill='none'/><path d='M10,5 L16,2 L15,8Z' fill='#555'/></svg>
<div class='a' style='left:81px;top:614px;width:1px;height:28px;background:#bbb'></div><div class='a' style='left:82px;top:614px;width:1px;height:28px;background:#fff'></div>
<svg class='a' style='left:90px;top:620px' width='17' height='17' viewBox='0 0 17 17'><path d='M2,16 V11 L8,5 L14,11 L9,16Z' fill='#f0f060' stroke='#444'/><path d='M8,5 L12,1 M11,8 L16,3' stroke='#666' fill='none'/></svg>
<div class='a' style='left:107px;top:619px;width:1px;height:18px;background:#3c8fd8'></div>
<svg class='a' style='left:110px;top:626px' width='8' height='5' viewBox='0 0 8 5'><path d='M0,0 H8 L4,4 Z' fill='#222'/></svg>
<svg class='a' style='left:126px;top:620px' width='17' height='17' viewBox='0 0 17 17'><circle cx='7' cy='7' r='6' fill='#fafafa' stroke='#333' stroke-width='1.2'/><path d='M4,6V4H6M8,4H10V6M10,8V10H8M6,10H4V8' stroke='#333' fill='none'/><path d='M11,11 L16,16' stroke='#222' stroke-width='2.5'/></svg>
<div class='a' style='left:148px;top:617px;width:10px;height:10px;background:#e6e6e6;border:1px solid #d0d0d0'></div><div class='a' style='left:148px;top:628px;width:10px;height:10px;background:#e6e6e6;border:1px solid #d0d0d0'></div>
<svg class='a' style='left:149px;top:618px' width='8' height='8' viewBox='0 0 8 8'><path d='M1.5,4H6.5M4,1.5V6.5' stroke='#222'/></svg>
<svg class='a' style='left:149px;top:629px' width='8' height='8' viewBox='0 0 8 8'><path d='M1.5,4H6.5' stroke='#222'/></svg>
<svg class='a' style='left:172px;top:621px' width='16' height='16' viewBox='0 0 16 16'><circle cx='8' cy='6' r='4' fill='none' stroke='#333' stroke-width='1.3'/><path d='M5,9 L1,14' stroke='#333' stroke-width='1.6'/><path d='M11,12H15L13,14Z' fill='#111'/></svg>
<svg class='a' style='left:285px;top:624px' width='10' height='7' viewBox='0 0 10 7'><path d='M1,1 L5,5 L9,1' stroke='#555' fill='none'/></svg>
<svg class='a' style='left:311px;top:620px' width='19' height='17' viewBox='0 0 19 17'><circle cx='8' cy='8' r='6' fill='none' stroke='#333' stroke-width='3.3' stroke-dasharray='3.0 3.0'/><circle cx='8' cy='8' r='4.5' fill='none' stroke='#333' stroke-width='3.0'/><path d='M13,13H18L15.5,16Z' fill='#111'/></svg>
<svg class='a' style='left:343px;top:620px' width='18' height='19' viewBox='0 0 18 19'><path d='M9,1V6M9,11V17M1,9H6M12,9H17M3.5,3.5L6,6M14.5,3.5L12,6M3.5,14.5L6,12' stroke='#555' stroke-width='1.2'/><path d='M9,9 V18 L11,16 L13,19 L14.5,18 L12.5,15 L15,15Z' fill='#555'/></svg>
<svg class='a' style='left:346px;top:651px' width='15' height='14' viewBox='0 0 15 14'><path d='M1,2H5M1,5H5M1,8H5M1,11H5M7,2H12M7,5H12M7,8H12M7,11H11' stroke='#222' stroke-width='1.5'/><path d='M11,11H15L13,13.5Z' fill='#111'/></svg>
<svg class='a' style='left:6px;top:958px' width='7' height='8' viewBox='0 0 7 8'><path d='M2,1 L5,4 L2,7Z' fill='#333'/></svg>
<svg class='a' style='left:448px;top:982px' width='13' height='13' viewBox='0 0 13 13'><rect x='0.5' y='0.5' width='12' height='12' fill='#e83a3a' stroke='#b01818'/><path d='M3.5,3.5 L9.5,9.5 M9.5,3.5 L3.5,9.5' stroke='#fff' stroke-width='1.6'/></svg>
<svg class='a' style='left:534px;top:982px' width='13' height='13' viewBox='0 0 13 13'><rect x='0.5' y='0.5' width='12' height='12' fill='#e83a3a' stroke='#b01818'/><path d='M3.5,3.5 L9.5,9.5 M9.5,3.5 L3.5,9.5' stroke='#fff' stroke-width='1.6'/></svg>
<!--ICONS-->
</body></html>
